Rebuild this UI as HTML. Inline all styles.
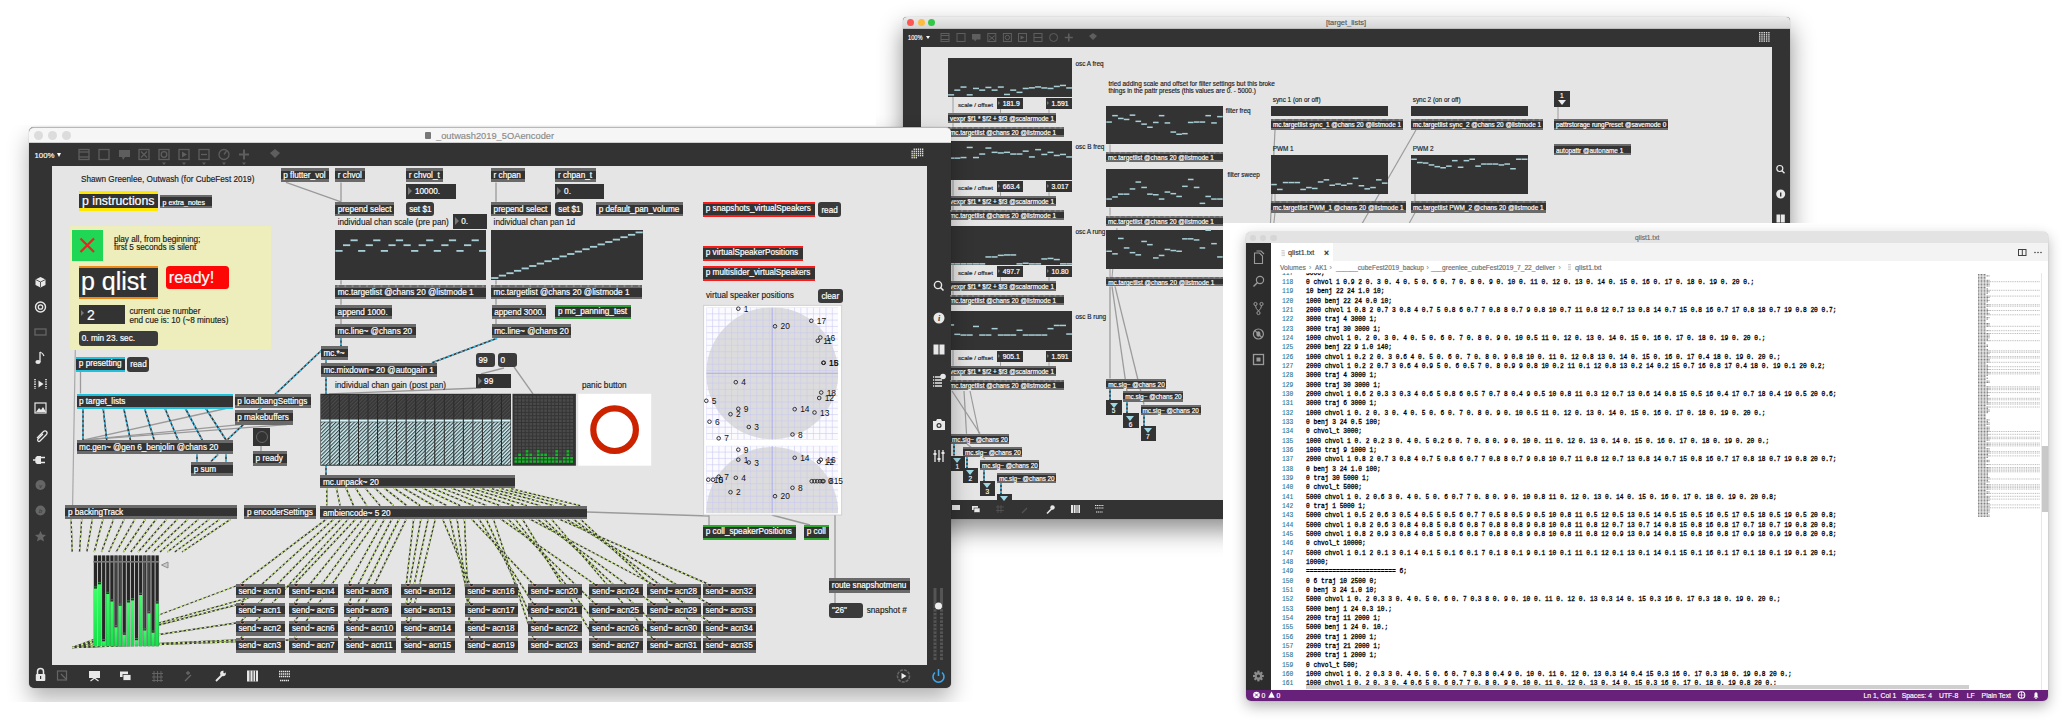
<!DOCTYPE html>
<html><head><meta charset="utf-8">
<style>
*{margin:0;padding:0;box-sizing:border-box}
html,body{width:2070px;height:720px;overflow:hidden;background:#fff;font-family:"Liberation Sans",sans-serif}
.a{position:absolute}
.ob{position:absolute;white-space:nowrap;overflow:hidden;-webkit-text-stroke:0.2px #fff}
.t{position:absolute;white-space:nowrap;-webkit-text-stroke:0.15px currentColor}
svg{position:absolute;left:0;top:0;overflow:visible}
.mono{font-family:"Liberation Mono",monospace}
</style></head><body>

<div class="a" style="left:903px;top:16.5px;width:887px;height:502px;border-radius:4px 4px 0 0;background:#333;box-shadow:0 11px 24px rgba(0,0,0,.45),0 0 1px rgba(0,0,0,.4)"></div>
<div class="a" style="left:903px;top:16.5px;width:887px;height:12px;border-radius:4px 4px 0 0;background:linear-gradient(#ebebeb,#d5d5d5);border-bottom:1px solid #bdbdbd"></div>
<div class="a" style="left:907.0px;top:19px;width:7px;height:7px;border-radius:50%;background:#fc5753"></div>
<div class="a" style="left:917.5px;top:19px;width:7px;height:7px;border-radius:50%;background:#fdbc40"></div>
<div class="a" style="left:928.2px;top:19px;width:7px;height:7px;border-radius:50%;background:#33c748"></div>
<div class="t" style="left:1326.0px;top:19.2px;font-size:6.8px;line-height:8.2px;color:#555;transform:scaleX(1.091);transform-origin:0 50%;">[target_lists]</div>
<div class="a" style="left:921.0px;top:46.5px;width:851.0px;height:453.5px;background:#e5e5e5;"></div>
<div class="t" style="left:907.5px;top:34.1px;font-size:6.8px;line-height:8.2px;color:#fff;transform:scaleX(0.834);transform-origin:0 50%;">100%</div>
<div class="a" style="left:925.5px;top:36px;border-top:3.5px solid #fff;border-left:2px solid transparent;border-right:2px solid transparent"></div>
<svg width="2070" height="720">
<g fill="none" stroke="#5e5e5e" stroke-width="1">
<rect x="941" y="33.5" width="8" height="8"/>
<rect x="957" y="33.5" width="8" height="8"/>
<rect x="987.8" y="33.5" width="8" height="8"/>
<rect x="1003.4" y="33.5" width="8" height="8"/>
<rect x="1018.5" y="33.5" width="8" height="8"/>
<rect x="1034" y="33.5" width="8" height="8"/>
<line x1="941" y1="35.5" x2="949" y2="35.5"/><line x1="941" y1="39.5" x2="949" y2="39.5"/>
<path d="M988.8 35.5l6 5M994.8 35.5l-6 5"/><circle cx="1007.4" cy="37.5" r="2.2"/><line x1="1034" y1="37.5" x2="1042" y2="37.5"/>
<circle cx="1053.6" cy="37.5" r="4"/><path d="M1068.8 33.5v8M1064.8 37.5h8" stroke-width="1.6"/>
</g>
<path d="M972 34h8.5v5.5h-4l-1.5 2-1-2h-2z" fill="#5e5e5e"/><path d="M1020.5 35.5l4 2-4 2z" fill="#5e5e5e"/><path d="M1089 36l4-3 4 3-4 4z" fill="#5e5e5e"/>
<rect x="1759.0" y="32.0" width="1.4" height="1.4" fill="#ddd"/>
<rect x="1759.0" y="34.1" width="1.4" height="1.4" fill="#ddd"/>
<rect x="1759.0" y="36.2" width="1.4" height="1.4" fill="#ddd"/>
<rect x="1759.0" y="38.3" width="1.4" height="1.4" fill="#ddd"/>
<rect x="1759.0" y="40.4" width="1.4" height="1.4" fill="#ddd"/>
<rect x="1761.3" y="32.0" width="1.4" height="1.4" fill="#ddd"/>
<rect x="1761.3" y="34.1" width="1.4" height="1.4" fill="#ddd"/>
<rect x="1761.3" y="36.2" width="1.4" height="1.4" fill="#ddd"/>
<rect x="1761.3" y="38.3" width="1.4" height="1.4" fill="#ddd"/>
<rect x="1761.3" y="40.4" width="1.4" height="1.4" fill="#ddd"/>
<rect x="1763.6" y="32.0" width="1.4" height="1.4" fill="#ddd"/>
<rect x="1763.6" y="34.1" width="1.4" height="1.4" fill="#ddd"/>
<rect x="1763.6" y="36.2" width="1.4" height="1.4" fill="#ddd"/>
<rect x="1763.6" y="38.3" width="1.4" height="1.4" fill="#ddd"/>
<rect x="1763.6" y="40.4" width="1.4" height="1.4" fill="#ddd"/>
<rect x="1765.9" y="32.0" width="1.4" height="1.4" fill="#ddd"/>
<rect x="1765.9" y="34.1" width="1.4" height="1.4" fill="#ddd"/>
<rect x="1765.9" y="36.2" width="1.4" height="1.4" fill="#ddd"/>
<rect x="1765.9" y="38.3" width="1.4" height="1.4" fill="#ddd"/>
<rect x="1765.9" y="40.4" width="1.4" height="1.4" fill="#ddd"/>
<rect x="1768.2" y="32.0" width="1.4" height="1.4" fill="#ddd"/>
<rect x="1768.2" y="34.1" width="1.4" height="1.4" fill="#ddd"/>
<rect x="1768.2" y="36.2" width="1.4" height="1.4" fill="#ddd"/>
<rect x="1768.2" y="38.3" width="1.4" height="1.4" fill="#ddd"/>
<rect x="1768.2" y="40.4" width="1.4" height="1.4" fill="#ddd"/>
<circle cx="1779.8" cy="168.5" r="3" fill="none" stroke="#e8e8e8" stroke-width="1.2"/><line x1="1782" y1="170.7" x2="1784.5" y2="173.2" stroke="#e8e8e8" stroke-width="1.4"/>
<circle cx="1780.7" cy="194" r="4.5" fill="#e8e8e8"/><rect x="1780" y="192.5" width="1.4" height="4" fill="#333"/>
<rect x="1776.5" y="214.5" width="3.8" height="8" fill="#e8e8e8"/><rect x="1781" y="214.5" width="3.8" height="8" fill="#e8e8e8"/>
<rect x="952" y="505" width="8" height="5" fill="#e8e8e8"/>
<rect x="972" y="506" width="6" height="4" fill="#e8e8e8"/><rect x="974" y="508" width="6" height="4.5" fill="#e8e8e8" stroke="#333" stroke-width=".6"/>
<path d="M998 505v8M1001 505v8M996 507h8M996 510.5h8" stroke="#555" stroke-width=".8"/>
<path d="M1022 513l5-5" stroke="#555" stroke-width="1.2"/>
<path d="M1047 513.5l5-5" stroke="#e8e8e8" stroke-width="1.6"/><circle cx="1052.5" cy="507.5" r="2.2" fill="#e8e8e8"/>
<rect x="1071" y="505" width="9" height="8" fill="#e8e8e8"/><path d="M1073.5 505v8M1076 505v8M1078 505v8" stroke="#333" stroke-width=".7"/>
<path d="M1095 505.5h9M1095 508h9M1096 512h7" stroke="#e8e8e8" stroke-width="1.2" stroke-dasharray="1.2 .6"/>
</svg>
<svg width="2070" height="720">
<path d="M953.0 96.6 L953.0 112.8" fill="none" stroke="#9c9c9c" stroke-width="1.0"/>
<path d="M953.0 123.2 L953.0 126.8" fill="none" stroke="#9c9c9c" stroke-width="1.0"/>
<path d="M1000.5 109.2 L1000.5 112.8" fill="none" stroke="#9c9c9c" stroke-width="1.0"/>
<path d="M1049.0 109.2 L1049.0 112.8" fill="none" stroke="#9c9c9c" stroke-width="1.0"/>
<path d="M953.0 179.6 L953.0 195.8" fill="none" stroke="#9c9c9c" stroke-width="1.0"/>
<path d="M953.0 206.2 L953.0 209.8" fill="none" stroke="#9c9c9c" stroke-width="1.0"/>
<path d="M1000.5 192.2 L1000.5 195.8" fill="none" stroke="#9c9c9c" stroke-width="1.0"/>
<path d="M1049.0 192.2 L1049.0 195.8" fill="none" stroke="#9c9c9c" stroke-width="1.0"/>
<path d="M953.0 264.6 L953.0 280.8" fill="none" stroke="#9c9c9c" stroke-width="1.0"/>
<path d="M953.0 291.2 L953.0 294.8" fill="none" stroke="#9c9c9c" stroke-width="1.0"/>
<path d="M1000.5 277.2 L1000.5 280.8" fill="none" stroke="#9c9c9c" stroke-width="1.0"/>
<path d="M1049.0 277.2 L1049.0 280.8" fill="none" stroke="#9c9c9c" stroke-width="1.0"/>
<path d="M953.0 349.6 L953.0 365.8" fill="none" stroke="#9c9c9c" stroke-width="1.0"/>
<path d="M953.0 376.2 L953.0 379.8" fill="none" stroke="#9c9c9c" stroke-width="1.0"/>
<path d="M1000.5 362.2 L1000.5 365.8" fill="none" stroke="#9c9c9c" stroke-width="1.0"/>
<path d="M1049.0 362.2 L1049.0 365.8" fill="none" stroke="#9c9c9c" stroke-width="1.0"/>
<path d="M1110.0 144.4 L1110.0 152.3" fill="none" stroke="#9c9c9c" stroke-width="1.0"/>
<path d="M1110.0 207.6 L1110.0 215.5" fill="none" stroke="#9c9c9c" stroke-width="1.0"/>
<path d="M1110.0 268.7 L1110.0 277.0" fill="none" stroke="#9c9c9c" stroke-width="1.0"/>
<path d="M1110.0 286.4 L1110.0 378.6" fill="none" stroke="#9c9c9c" stroke-width="1.3"/>
<path d="M1112.0 286.4 L1127.0 391.4" fill="none" stroke="#9c9c9c" stroke-width="1.3"/>
<path d="M1115.0 286.4 L1144.0 404.5" fill="none" stroke="#9c9c9c" stroke-width="1.3"/>
<path d="M1117.0 228.0 L1112.0 277.0" fill="none" stroke="#9c9c9c" stroke-width="1.0"/>
<path d="M1275.0 130.0 L1257.0 500.0" fill="none" stroke="#9c9c9c" stroke-width="1.2"/>
<path d="M1416.0 130.0 L1310.0 314.0" fill="none" stroke="#9c9c9c" stroke-width="1.2"/>
<path d="M1275.0 212.7 L1272.0 240.0" fill="none" stroke="#9c9c9c" stroke-width="1.1"/>
<path d="M1415.0 212.7 L1400.0 240.0" fill="none" stroke="#9c9c9c" stroke-width="1.1"/>
<path d="M1275.0 194.0 L1275.0 201.0" fill="none" stroke="#9c9c9c" stroke-width="1.0"/>
<path d="M1415.0 194.0 L1415.0 201.0" fill="none" stroke="#9c9c9c" stroke-width="1.0"/>
<path d="M1558.0 106.7 L1558.0 119.3" fill="none" stroke="#9c9c9c" stroke-width="1.0"/>
<path d="M952.0 391.0 L980.0 433.7" fill="none" stroke="#9c9c9c" stroke-width="1.2"/>
<path d="M964.0 391.0 L966.5 433.7" fill="none" stroke="#9c9c9c" stroke-width="1.2"/>
<path d="M970.0 391.0 L979.0 433.7" fill="none" stroke="#9c9c9c" stroke-width="1.2"/>
<path d="M967.0 444.0 L985.0 458.8" fill="none" stroke="#9c9c9c" stroke-width="1.1"/>
<path d="M1110 388.8V400.3" stroke="#2a2a2a" stroke-width="1.6"/><path d="M1110 388.8V400.3" stroke="#3cc0ee" stroke-width="1.6" stroke-dasharray="2 2"/>
<path d="M1127 401.6V413.1" stroke="#2a2a2a" stroke-width="1.6"/><path d="M1127 401.6V413.1" stroke="#3cc0ee" stroke-width="1.6" stroke-dasharray="2 2"/>
<path d="M1144 414.7V426.2" stroke="#2a2a2a" stroke-width="1.6"/><path d="M1144 414.7V426.2" stroke="#3cc0ee" stroke-width="1.6" stroke-dasharray="2 2"/>
<path d="M954 443.9V455.4" stroke="#2a2a2a" stroke-width="1.6"/><path d="M954 443.9V455.4" stroke="#3cc0ee" stroke-width="1.6" stroke-dasharray="2 2"/>
<path d="M967 457V468.5" stroke="#2a2a2a" stroke-width="1.6"/><path d="M967 457V468.5" stroke="#3cc0ee" stroke-width="1.6" stroke-dasharray="2 2"/>
<path d="M984 470.2V481.7" stroke="#2a2a2a" stroke-width="1.6"/><path d="M984 470.2V481.7" stroke="#3cc0ee" stroke-width="1.6" stroke-dasharray="2 2"/>
<path d="M1001 482.9V494.4" stroke="#2a2a2a" stroke-width="1.6"/><path d="M1001 482.9V494.4" stroke="#3cc0ee" stroke-width="1.6" stroke-dasharray="2 2"/>
</svg>
<div class="a" style="left:948.0px;top:57.8px;width:124.3px;height:38.8px;background:#333;"></div>
<svg width="2070" height="720">
<rect x="948.1" y="94.1" width="6.0" height="1.5" fill="#a9cfd6"/>
<rect x="954.3" y="89.4" width="6.0" height="1.5" fill="#a9cfd6"/>
<rect x="960.5" y="86.3" width="6.0" height="1.5" fill="#a9cfd6"/>
<rect x="966.7" y="94.1" width="6.0" height="1.5" fill="#a9cfd6"/>
<rect x="973.0" y="87.7" width="6.0" height="1.5" fill="#a9cfd6"/>
<rect x="979.2" y="89.4" width="6.0" height="1.5" fill="#a9cfd6"/>
<rect x="985.4" y="86.7" width="6.0" height="1.5" fill="#a9cfd6"/>
<rect x="991.6" y="89.4" width="6.0" height="1.5" fill="#a9cfd6"/>
<rect x="997.8" y="86.3" width="6.0" height="1.5" fill="#a9cfd6"/>
<rect x="1004.0" y="93.7" width="6.0" height="1.5" fill="#a9cfd6"/>
<rect x="1010.2" y="89.4" width="6.0" height="1.5" fill="#a9cfd6"/>
<rect x="1016.5" y="91.6" width="6.0" height="1.5" fill="#a9cfd6"/>
<rect x="1022.7" y="87.7" width="6.0" height="1.5" fill="#a9cfd6"/>
<rect x="1028.9" y="87.1" width="6.0" height="1.5" fill="#a9cfd6"/>
<rect x="1035.1" y="86.2" width="6.0" height="1.5" fill="#a9cfd6"/>
<rect x="1041.3" y="87.2" width="6.0" height="1.5" fill="#a9cfd6"/>
<rect x="1047.5" y="87.7" width="6.0" height="1.5" fill="#a9cfd6"/>
<rect x="1053.8" y="85.7" width="6.0" height="1.5" fill="#a9cfd6"/>
<rect x="1060.0" y="84.7" width="6.0" height="1.5" fill="#a9cfd6"/>
<rect x="1066.2" y="87.2" width="6.0" height="1.5" fill="#a9cfd6"/>
</svg>
<div class="t" style="left:1075.5px;top:60.1px;font-size:6.4px;line-height:7.7px;color:#1a1a1a;">osc A freq</div>
<div class="t" style="left:957.9px;top:100.8px;font-size:6.26px;line-height:7.5px;color:#1a1a1a;">scale / offset</div>
<div class="ob" style="left:997.2px;top:98.3px;width:26.0px;height:10.9px;background:#333;font-size:6.8px;line-height:10.9px;padding-left:5.6px;padding-top:1.1px;color:#fff"><i style="position:absolute;left:1.2px;top:3.0px;border-left:2.4px solid #777;border-top:2.4px solid transparent;border-bottom:2.4px solid transparent"></i>181.9</div>
<div class="ob" style="left:1046.0px;top:98.3px;width:26.0px;height:10.9px;background:#333;font-size:6.8px;line-height:10.9px;padding-left:5.6px;padding-top:1.1px;color:#fff"><i style="position:absolute;left:1.2px;top:3.0px;border-left:2.4px solid #777;border-top:2.4px solid transparent;border-bottom:2.4px solid transparent"></i>1.591</div>
<div class="ob" style="left:948.0px;top:112.8px;width:107.6px;height:10.4px;background:linear-gradient(to bottom,#6a6a6a 0,#6a6a6a 2.1px,#333 2.1px,#333 8.300000000000006px,#6a6a6a 8.300000000000006px,#6a6a6a 100%);font-size:6.4px;line-height:10.4px;padding-left:2px;padding-top:1.1px;color:#fff">vexpr $f1 * $f2 + $f3 @scalarmode 1</div>
<svg width="2070" height="720" style="position:absolute;left:948.0px;top:126.8px;width:115.7px;height:2.1px;z-index:2"><rect x="2.0" y="0" width="2.2" height="1.7" rx="1" fill="#8a8a8a"/><rect x="7.5" y="0" width="2.2" height="1.7" rx="1" fill="#8a8a8a"/><rect x="13.0" y="0" width="2.2" height="1.7" rx="1" fill="#8a8a8a"/><rect x="18.5" y="0" width="2.2" height="1.7" rx="1" fill="#8a8a8a"/><rect x="23.9" y="0" width="2.2" height="1.7" rx="1" fill="#8a8a8a"/><rect x="29.4" y="0" width="2.2" height="1.7" rx="1" fill="#8a8a8a"/><rect x="34.9" y="0" width="2.2" height="1.7" rx="1" fill="#8a8a8a"/><rect x="40.4" y="0" width="2.2" height="1.7" rx="1" fill="#8a8a8a"/><rect x="45.9" y="0" width="2.2" height="1.7" rx="1" fill="#8a8a8a"/><rect x="51.4" y="0" width="2.2" height="1.7" rx="1" fill="#8a8a8a"/><rect x="56.9" y="0" width="2.2" height="1.7" rx="1" fill="#8a8a8a"/><rect x="62.3" y="0" width="2.2" height="1.7" rx="1" fill="#8a8a8a"/><rect x="67.8" y="0" width="2.2" height="1.7" rx="1" fill="#8a8a8a"/><rect x="73.3" y="0" width="2.2" height="1.7" rx="1" fill="#8a8a8a"/><rect x="78.8" y="0" width="2.2" height="1.7" rx="1" fill="#8a8a8a"/><rect x="84.3" y="0" width="2.2" height="1.7" rx="1" fill="#8a8a8a"/><rect x="89.8" y="0" width="2.2" height="1.7" rx="1" fill="#8a8a8a"/><rect x="95.2" y="0" width="2.2" height="1.7" rx="1" fill="#8a8a8a"/><rect x="100.7" y="0" width="2.2" height="1.7" rx="1" fill="#8a8a8a"/><rect x="106.2" y="0" width="2.2" height="1.7" rx="1" fill="#8a8a8a"/><rect x="111.7" y="0" width="2.2" height="1.7" rx="1" fill="#8a8a8a"/></svg>
<div class="ob" style="left:948.0px;top:126.8px;width:115.7px;height:10.3px;background:linear-gradient(to bottom,#6a6a6a 0,#6a6a6a 2.1px,#333 2.1px,#333 8.199999999999998px,#6a6a6a 8.199999999999998px,#6a6a6a 100%);font-size:6.4px;line-height:10.3px;padding-left:2px;padding-top:1.1px;color:#fff">mc.targetlist @chans 20 @listmode 1</div>
<div class="a" style="left:948.0px;top:140.8px;width:124.3px;height:38.8px;background:#333;"></div>
<svg width="2070" height="720">
<rect x="948.1" y="157.4" width="6.0" height="1.5" fill="#a9cfd6"/>
<rect x="954.3" y="157.4" width="6.0" height="1.5" fill="#a9cfd6"/>
<rect x="960.5" y="156.8" width="6.0" height="1.5" fill="#a9cfd6"/>
<rect x="966.7" y="146.7" width="6.0" height="1.5" fill="#a9cfd6"/>
<rect x="973.0" y="156.8" width="6.0" height="1.5" fill="#a9cfd6"/>
<rect x="979.2" y="153.3" width="6.0" height="1.5" fill="#a9cfd6"/>
<rect x="985.4" y="147.3" width="6.0" height="1.5" fill="#a9cfd6"/>
<rect x="991.6" y="151.6" width="6.0" height="1.5" fill="#a9cfd6"/>
<rect x="997.8" y="152.2" width="6.0" height="1.5" fill="#a9cfd6"/>
<rect x="1004.0" y="151.6" width="6.0" height="1.5" fill="#a9cfd6"/>
<rect x="1010.2" y="153.3" width="6.0" height="1.5" fill="#a9cfd6"/>
<rect x="1016.5" y="153.3" width="6.0" height="1.5" fill="#a9cfd6"/>
<rect x="1022.7" y="150.4" width="6.0" height="1.5" fill="#a9cfd6"/>
<rect x="1028.9" y="156.2" width="6.0" height="1.5" fill="#a9cfd6"/>
<rect x="1035.1" y="148.9" width="6.0" height="1.5" fill="#a9cfd6"/>
<rect x="1041.3" y="153.7" width="6.0" height="1.5" fill="#a9cfd6"/>
<rect x="1047.5" y="151.6" width="6.0" height="1.5" fill="#a9cfd6"/>
<rect x="1053.8" y="154.7" width="6.0" height="1.5" fill="#a9cfd6"/>
<rect x="1060.0" y="153.7" width="6.0" height="1.5" fill="#a9cfd6"/>
<rect x="1066.2" y="156.2" width="6.0" height="1.5" fill="#a9cfd6"/>
</svg>
<div class="t" style="left:1075.5px;top:143.1px;font-size:6.4px;line-height:7.7px;color:#1a1a1a;">osc B freq</div>
<div class="t" style="left:957.9px;top:183.8px;font-size:6.26px;line-height:7.5px;color:#1a1a1a;">scale / offset</div>
<div class="ob" style="left:997.2px;top:181.3px;width:26.0px;height:10.9px;background:#333;font-size:6.8px;line-height:10.9px;padding-left:5.6px;padding-top:1.1px;color:#fff"><i style="position:absolute;left:1.2px;top:3.1px;border-left:2.4px solid #777;border-top:2.4px solid transparent;border-bottom:2.4px solid transparent"></i>663.4</div>
<div class="ob" style="left:1046.0px;top:181.3px;width:26.0px;height:10.9px;background:#333;font-size:6.8px;line-height:10.9px;padding-left:5.6px;padding-top:1.1px;color:#fff"><i style="position:absolute;left:1.2px;top:3.1px;border-left:2.4px solid #777;border-top:2.4px solid transparent;border-bottom:2.4px solid transparent"></i>3.017</div>
<div class="ob" style="left:948.0px;top:195.8px;width:107.6px;height:10.4px;background:linear-gradient(to bottom,#6a6a6a 0,#6a6a6a 2.1px,#333 2.1px,#333 8.300000000000006px,#6a6a6a 8.300000000000006px,#6a6a6a 100%);font-size:6.4px;line-height:10.4px;padding-left:2px;padding-top:1.1px;color:#fff">vexpr $f1 * $f2 + $f3 @scalarmode 1</div>
<svg width="2070" height="720" style="position:absolute;left:948.0px;top:209.8px;width:115.7px;height:2.1px;z-index:2"><rect x="2.0" y="0" width="2.2" height="1.7" rx="1" fill="#8a8a8a"/><rect x="7.5" y="0" width="2.2" height="1.7" rx="1" fill="#8a8a8a"/><rect x="13.0" y="0" width="2.2" height="1.7" rx="1" fill="#8a8a8a"/><rect x="18.5" y="0" width="2.2" height="1.7" rx="1" fill="#8a8a8a"/><rect x="23.9" y="0" width="2.2" height="1.7" rx="1" fill="#8a8a8a"/><rect x="29.4" y="0" width="2.2" height="1.7" rx="1" fill="#8a8a8a"/><rect x="34.9" y="0" width="2.2" height="1.7" rx="1" fill="#8a8a8a"/><rect x="40.4" y="0" width="2.2" height="1.7" rx="1" fill="#8a8a8a"/><rect x="45.9" y="0" width="2.2" height="1.7" rx="1" fill="#8a8a8a"/><rect x="51.4" y="0" width="2.2" height="1.7" rx="1" fill="#8a8a8a"/><rect x="56.9" y="0" width="2.2" height="1.7" rx="1" fill="#8a8a8a"/><rect x="62.3" y="0" width="2.2" height="1.7" rx="1" fill="#8a8a8a"/><rect x="67.8" y="0" width="2.2" height="1.7" rx="1" fill="#8a8a8a"/><rect x="73.3" y="0" width="2.2" height="1.7" rx="1" fill="#8a8a8a"/><rect x="78.8" y="0" width="2.2" height="1.7" rx="1" fill="#8a8a8a"/><rect x="84.3" y="0" width="2.2" height="1.7" rx="1" fill="#8a8a8a"/><rect x="89.8" y="0" width="2.2" height="1.7" rx="1" fill="#8a8a8a"/><rect x="95.2" y="0" width="2.2" height="1.7" rx="1" fill="#8a8a8a"/><rect x="100.7" y="0" width="2.2" height="1.7" rx="1" fill="#8a8a8a"/><rect x="106.2" y="0" width="2.2" height="1.7" rx="1" fill="#8a8a8a"/><rect x="111.7" y="0" width="2.2" height="1.7" rx="1" fill="#8a8a8a"/></svg>
<div class="ob" style="left:948.0px;top:209.8px;width:115.7px;height:10.3px;background:linear-gradient(to bottom,#6a6a6a 0,#6a6a6a 2.1px,#333 2.1px,#333 8.200000000000012px,#6a6a6a 8.200000000000012px,#6a6a6a 100%);font-size:6.4px;line-height:10.3px;padding-left:2px;padding-top:1.1px;color:#fff">mc.targetlist @chans 20 @listmode 1</div>
<div class="a" style="left:948.0px;top:225.8px;width:124.3px;height:38.8px;background:#333;"></div>
<svg width="2070" height="720">
<rect x="948.1" y="263.1" width="6.0" height="1.5" fill="#a9cfd6"/>
<rect x="954.3" y="263.1" width="6.0" height="1.5" fill="#a9cfd6"/>
<rect x="960.5" y="263.1" width="6.0" height="1.5" fill="#a9cfd6"/>
<rect x="966.7" y="263.1" width="6.0" height="1.5" fill="#a9cfd6"/>
<rect x="973.0" y="263.1" width="6.0" height="1.5" fill="#a9cfd6"/>
<rect x="979.2" y="263.1" width="6.0" height="1.5" fill="#a9cfd6"/>
<rect x="985.4" y="256.2" width="6.0" height="1.5" fill="#a9cfd6"/>
<rect x="991.6" y="256.2" width="6.0" height="1.5" fill="#a9cfd6"/>
<rect x="997.8" y="254.6" width="6.0" height="1.5" fill="#a9cfd6"/>
<rect x="1004.0" y="254.2" width="6.0" height="1.5" fill="#a9cfd6"/>
<rect x="1010.2" y="254.2" width="6.0" height="1.5" fill="#a9cfd6"/>
<rect x="1016.5" y="263.1" width="6.0" height="1.5" fill="#a9cfd6"/>
<rect x="1022.7" y="262.5" width="6.0" height="1.5" fill="#a9cfd6"/>
<rect x="1028.9" y="263.1" width="6.0" height="1.5" fill="#a9cfd6"/>
<rect x="1035.1" y="263.1" width="6.0" height="1.5" fill="#a9cfd6"/>
<rect x="1041.3" y="258.2" width="6.0" height="1.5" fill="#a9cfd6"/>
<rect x="1047.5" y="257.7" width="6.0" height="1.5" fill="#a9cfd6"/>
<rect x="1053.8" y="258.8" width="6.0" height="1.5" fill="#a9cfd6"/>
<rect x="1060.0" y="263.1" width="6.0" height="1.5" fill="#a9cfd6"/>
<rect x="1066.2" y="263.1" width="6.0" height="1.5" fill="#a9cfd6"/>
</svg>
<div class="t" style="left:1075.5px;top:228.1px;font-size:6.4px;line-height:7.7px;color:#1a1a1a;">osc A rung</div>
<div class="t" style="left:957.9px;top:268.8px;font-size:6.26px;line-height:7.5px;color:#1a1a1a;">scale / offset</div>
<div class="ob" style="left:997.2px;top:266.3px;width:26.0px;height:10.9px;background:#333;font-size:6.8px;line-height:10.9px;padding-left:5.6px;padding-top:1.1px;color:#fff"><i style="position:absolute;left:1.2px;top:3.0px;border-left:2.4px solid #777;border-top:2.4px solid transparent;border-bottom:2.4px solid transparent"></i>497.7</div>
<div class="ob" style="left:1046.0px;top:266.3px;width:26.0px;height:10.9px;background:#333;font-size:6.8px;line-height:10.9px;padding-left:5.6px;padding-top:1.1px;color:#fff"><i style="position:absolute;left:1.2px;top:3.0px;border-left:2.4px solid #777;border-top:2.4px solid transparent;border-bottom:2.4px solid transparent"></i>10.80</div>
<div class="ob" style="left:948.0px;top:280.8px;width:107.6px;height:10.4px;background:linear-gradient(to bottom,#6a6a6a 0,#6a6a6a 2.1px,#333 2.1px,#333 8.300000000000034px,#6a6a6a 8.300000000000034px,#6a6a6a 100%);font-size:6.4px;line-height:10.4px;padding-left:2px;padding-top:1.1px;color:#fff">vexpr $f1 * $f2 + $f3 @scalarmode 1</div>
<svg width="2070" height="720" style="position:absolute;left:948.0px;top:294.8px;width:115.7px;height:2.1px;z-index:2"><rect x="2.0" y="0" width="2.2" height="1.7" rx="1" fill="#8a8a8a"/><rect x="7.5" y="0" width="2.2" height="1.7" rx="1" fill="#8a8a8a"/><rect x="13.0" y="0" width="2.2" height="1.7" rx="1" fill="#8a8a8a"/><rect x="18.5" y="0" width="2.2" height="1.7" rx="1" fill="#8a8a8a"/><rect x="23.9" y="0" width="2.2" height="1.7" rx="1" fill="#8a8a8a"/><rect x="29.4" y="0" width="2.2" height="1.7" rx="1" fill="#8a8a8a"/><rect x="34.9" y="0" width="2.2" height="1.7" rx="1" fill="#8a8a8a"/><rect x="40.4" y="0" width="2.2" height="1.7" rx="1" fill="#8a8a8a"/><rect x="45.9" y="0" width="2.2" height="1.7" rx="1" fill="#8a8a8a"/><rect x="51.4" y="0" width="2.2" height="1.7" rx="1" fill="#8a8a8a"/><rect x="56.9" y="0" width="2.2" height="1.7" rx="1" fill="#8a8a8a"/><rect x="62.3" y="0" width="2.2" height="1.7" rx="1" fill="#8a8a8a"/><rect x="67.8" y="0" width="2.2" height="1.7" rx="1" fill="#8a8a8a"/><rect x="73.3" y="0" width="2.2" height="1.7" rx="1" fill="#8a8a8a"/><rect x="78.8" y="0" width="2.2" height="1.7" rx="1" fill="#8a8a8a"/><rect x="84.3" y="0" width="2.2" height="1.7" rx="1" fill="#8a8a8a"/><rect x="89.8" y="0" width="2.2" height="1.7" rx="1" fill="#8a8a8a"/><rect x="95.2" y="0" width="2.2" height="1.7" rx="1" fill="#8a8a8a"/><rect x="100.7" y="0" width="2.2" height="1.7" rx="1" fill="#8a8a8a"/><rect x="106.2" y="0" width="2.2" height="1.7" rx="1" fill="#8a8a8a"/><rect x="111.7" y="0" width="2.2" height="1.7" rx="1" fill="#8a8a8a"/></svg>
<div class="ob" style="left:948.0px;top:294.8px;width:115.7px;height:10.3px;background:linear-gradient(to bottom,#6a6a6a 0,#6a6a6a 2.1px,#333 2.1px,#333 8.200000000000012px,#6a6a6a 8.200000000000012px,#6a6a6a 100%);font-size:6.4px;line-height:10.3px;padding-left:2px;padding-top:1.1px;color:#fff">mc.targetlist @chans 20 @listmode 1</div>
<div class="a" style="left:948.0px;top:310.8px;width:124.3px;height:38.8px;background:#333;"></div>
<svg width="2070" height="720">
<rect x="948.1" y="324.2" width="6.0" height="1.5" fill="#a9cfd6"/>
<rect x="954.3" y="333.6" width="6.0" height="1.5" fill="#a9cfd6"/>
<rect x="960.5" y="334.3" width="6.0" height="1.5" fill="#a9cfd6"/>
<rect x="966.7" y="334.3" width="6.0" height="1.5" fill="#a9cfd6"/>
<rect x="973.0" y="325.7" width="6.0" height="1.5" fill="#a9cfd6"/>
<rect x="979.2" y="334.3" width="6.0" height="1.5" fill="#a9cfd6"/>
<rect x="985.4" y="334.3" width="6.0" height="1.5" fill="#a9cfd6"/>
<rect x="991.6" y="327.9" width="6.0" height="1.5" fill="#a9cfd6"/>
<rect x="997.8" y="334.3" width="6.0" height="1.5" fill="#a9cfd6"/>
<rect x="1004.0" y="334.3" width="6.0" height="1.5" fill="#a9cfd6"/>
<rect x="1010.2" y="334.3" width="6.0" height="1.5" fill="#a9cfd6"/>
<rect x="1016.5" y="329.5" width="6.0" height="1.5" fill="#a9cfd6"/>
<rect x="1022.7" y="334.3" width="6.0" height="1.5" fill="#a9cfd6"/>
<rect x="1028.9" y="334.3" width="6.0" height="1.5" fill="#a9cfd6"/>
<rect x="1035.1" y="334.3" width="6.0" height="1.5" fill="#a9cfd6"/>
<rect x="1041.3" y="334.3" width="6.0" height="1.5" fill="#a9cfd6"/>
<rect x="1047.5" y="327.9" width="6.0" height="1.5" fill="#a9cfd6"/>
<rect x="1053.8" y="324.7" width="6.0" height="1.5" fill="#a9cfd6"/>
<rect x="1060.0" y="324.7" width="6.0" height="1.5" fill="#a9cfd6"/>
<rect x="1066.2" y="333.3" width="6.0" height="1.5" fill="#a9cfd6"/>
</svg>
<div class="t" style="left:1075.5px;top:313.1px;font-size:6.4px;line-height:7.7px;color:#1a1a1a;">osc B rung</div>
<div class="t" style="left:957.9px;top:353.8px;font-size:6.26px;line-height:7.5px;color:#1a1a1a;">scale / offset</div>
<div class="ob" style="left:997.2px;top:351.3px;width:26.0px;height:10.9px;background:#333;font-size:6.8px;line-height:10.9px;padding-left:5.6px;padding-top:1.1px;color:#fff"><i style="position:absolute;left:1.2px;top:3.0px;border-left:2.4px solid #777;border-top:2.4px solid transparent;border-bottom:2.4px solid transparent"></i>905.1</div>
<div class="ob" style="left:1046.0px;top:351.3px;width:26.0px;height:10.9px;background:#333;font-size:6.8px;line-height:10.9px;padding-left:5.6px;padding-top:1.1px;color:#fff"><i style="position:absolute;left:1.2px;top:3.0px;border-left:2.4px solid #777;border-top:2.4px solid transparent;border-bottom:2.4px solid transparent"></i>1.591</div>
<div class="ob" style="left:948.0px;top:365.8px;width:107.6px;height:10.4px;background:linear-gradient(to bottom,#6a6a6a 0,#6a6a6a 2.1px,#333 2.1px,#333 8.300000000000034px,#6a6a6a 8.300000000000034px,#6a6a6a 100%);font-size:6.4px;line-height:10.4px;padding-left:2px;padding-top:1.1px;color:#fff">vexpr $f1 * $f2 + $f3 @scalarmode 1</div>
<svg width="2070" height="720" style="position:absolute;left:948.0px;top:379.8px;width:115.7px;height:2.1px;z-index:2"><rect x="2.0" y="0" width="2.2" height="1.7" rx="1" fill="#8a8a8a"/><rect x="7.5" y="0" width="2.2" height="1.7" rx="1" fill="#8a8a8a"/><rect x="13.0" y="0" width="2.2" height="1.7" rx="1" fill="#8a8a8a"/><rect x="18.5" y="0" width="2.2" height="1.7" rx="1" fill="#8a8a8a"/><rect x="23.9" y="0" width="2.2" height="1.7" rx="1" fill="#8a8a8a"/><rect x="29.4" y="0" width="2.2" height="1.7" rx="1" fill="#8a8a8a"/><rect x="34.9" y="0" width="2.2" height="1.7" rx="1" fill="#8a8a8a"/><rect x="40.4" y="0" width="2.2" height="1.7" rx="1" fill="#8a8a8a"/><rect x="45.9" y="0" width="2.2" height="1.7" rx="1" fill="#8a8a8a"/><rect x="51.4" y="0" width="2.2" height="1.7" rx="1" fill="#8a8a8a"/><rect x="56.9" y="0" width="2.2" height="1.7" rx="1" fill="#8a8a8a"/><rect x="62.3" y="0" width="2.2" height="1.7" rx="1" fill="#8a8a8a"/><rect x="67.8" y="0" width="2.2" height="1.7" rx="1" fill="#8a8a8a"/><rect x="73.3" y="0" width="2.2" height="1.7" rx="1" fill="#8a8a8a"/><rect x="78.8" y="0" width="2.2" height="1.7" rx="1" fill="#8a8a8a"/><rect x="84.3" y="0" width="2.2" height="1.7" rx="1" fill="#8a8a8a"/><rect x="89.8" y="0" width="2.2" height="1.7" rx="1" fill="#8a8a8a"/><rect x="95.2" y="0" width="2.2" height="1.7" rx="1" fill="#8a8a8a"/><rect x="100.7" y="0" width="2.2" height="1.7" rx="1" fill="#8a8a8a"/><rect x="106.2" y="0" width="2.2" height="1.7" rx="1" fill="#8a8a8a"/><rect x="111.7" y="0" width="2.2" height="1.7" rx="1" fill="#8a8a8a"/></svg>
<div class="ob" style="left:948.0px;top:379.8px;width:115.7px;height:10.3px;background:linear-gradient(to bottom,#6a6a6a 0,#6a6a6a 2.1px,#333 2.1px,#333 8.200000000000012px,#6a6a6a 8.200000000000012px,#6a6a6a 100%);font-size:6.4px;line-height:10.3px;padding-left:2px;padding-top:1.1px;color:#fff">mc.targetlist @chans 20 @listmode 1</div>
<div class="t" style="left:1108.4px;top:80.0px;font-size:6.38px;line-height:7.7px;color:#1a1a1a;">tried adding scale and offset for filter settings but this broke</div>
<div class="t" style="left:1108.4px;top:87.3px;font-size:6.38px;line-height:7.7px;color:#1a1a1a;">things in the pattr presets (this values are 0. - 5000.)</div>
<div class="a" style="left:1106.2px;top:105.9px;width:116.5px;height:38.5px;background:#333;"></div>
<svg width="2070" height="720">
<rect x="1106.3" y="121.3" width="5.6" height="1.5" fill="#a9cfd6"/>
<rect x="1112.2" y="114.9" width="5.6" height="1.5" fill="#a9cfd6"/>
<rect x="1118.0" y="117.7" width="5.6" height="1.5" fill="#a9cfd6"/>
<rect x="1123.8" y="118.7" width="5.6" height="1.5" fill="#a9cfd6"/>
<rect x="1129.7" y="114.4" width="5.6" height="1.5" fill="#a9cfd6"/>
<rect x="1135.5" y="120.6" width="5.6" height="1.5" fill="#a9cfd6"/>
<rect x="1141.3" y="123.4" width="5.6" height="1.5" fill="#a9cfd6"/>
<rect x="1147.1" y="126.5" width="5.6" height="1.5" fill="#a9cfd6"/>
<rect x="1153.0" y="121.7" width="5.6" height="1.5" fill="#a9cfd6"/>
<rect x="1158.8" y="114.9" width="5.6" height="1.5" fill="#a9cfd6"/>
<rect x="1164.6" y="122.2" width="5.6" height="1.5" fill="#a9cfd6"/>
<rect x="1170.5" y="131.3" width="5.6" height="1.5" fill="#a9cfd6"/>
<rect x="1176.3" y="133.5" width="5.6" height="1.5" fill="#a9cfd6"/>
<rect x="1182.1" y="132.9" width="5.6" height="1.5" fill="#a9cfd6"/>
<rect x="1187.9" y="121.7" width="5.6" height="1.5" fill="#a9cfd6"/>
<rect x="1193.8" y="121.3" width="5.6" height="1.5" fill="#a9cfd6"/>
<rect x="1199.6" y="121.3" width="5.6" height="1.5" fill="#a9cfd6"/>
<rect x="1205.4" y="114.9" width="5.6" height="1.5" fill="#a9cfd6"/>
<rect x="1211.2" y="122.2" width="5.6" height="1.5" fill="#a9cfd6"/>
<rect x="1217.1" y="115.9" width="5.6" height="1.5" fill="#a9cfd6"/>
</svg>
<div class="t" style="left:1225.7px;top:107.0px;font-size:6.4px;line-height:7.7px;color:#1a1a1a;">filter freq</div>
<svg width="2070" height="720" style="position:absolute;left:1105.9px;top:152.3px;width:117.0px;height:2.0px;z-index:2"><rect x="2.0" y="0" width="2.2" height="1.6" rx="1" fill="#8a8a8a"/><rect x="7.5" y="0" width="2.2" height="1.6" rx="1" fill="#8a8a8a"/><rect x="13.1" y="0" width="2.2" height="1.6" rx="1" fill="#8a8a8a"/><rect x="18.6" y="0" width="2.2" height="1.6" rx="1" fill="#8a8a8a"/><rect x="24.2" y="0" width="2.2" height="1.6" rx="1" fill="#8a8a8a"/><rect x="29.8" y="0" width="2.2" height="1.6" rx="1" fill="#8a8a8a"/><rect x="35.3" y="0" width="2.2" height="1.6" rx="1" fill="#8a8a8a"/><rect x="40.9" y="0" width="2.2" height="1.6" rx="1" fill="#8a8a8a"/><rect x="46.4" y="0" width="2.2" height="1.6" rx="1" fill="#8a8a8a"/><rect x="52.0" y="0" width="2.2" height="1.6" rx="1" fill="#8a8a8a"/><rect x="57.5" y="0" width="2.2" height="1.6" rx="1" fill="#8a8a8a"/><rect x="63.0" y="0" width="2.2" height="1.6" rx="1" fill="#8a8a8a"/><rect x="68.6" y="0" width="2.2" height="1.6" rx="1" fill="#8a8a8a"/><rect x="74.2" y="0" width="2.2" height="1.6" rx="1" fill="#8a8a8a"/><rect x="79.7" y="0" width="2.2" height="1.6" rx="1" fill="#8a8a8a"/><rect x="85.2" y="0" width="2.2" height="1.6" rx="1" fill="#8a8a8a"/><rect x="90.8" y="0" width="2.2" height="1.6" rx="1" fill="#8a8a8a"/><rect x="96.3" y="0" width="2.2" height="1.6" rx="1" fill="#8a8a8a"/><rect x="101.9" y="0" width="2.2" height="1.6" rx="1" fill="#8a8a8a"/><rect x="107.5" y="0" width="2.2" height="1.6" rx="1" fill="#8a8a8a"/><rect x="113.0" y="0" width="2.2" height="1.6" rx="1" fill="#8a8a8a"/></svg>
<div class="ob" style="left:1105.9px;top:152.3px;width:117.0px;height:10.2px;background:linear-gradient(to bottom,#6a6a6a 0,#6a6a6a 2.0px,#333 2.0px,#333 8.199999999999989px,#6a6a6a 8.199999999999989px,#6a6a6a 100%);font-size:6.4px;line-height:10.2px;padding-left:2px;padding-top:1.1px;color:#fff">mc.targetlist @chans 20 @listmode 1</div>
<div class="a" style="left:1106.2px;top:169.2px;width:116.5px;height:38.3px;background:#333;"></div>
<svg width="2070" height="720">
<rect x="1106.3" y="198.3" width="5.6" height="1.5" fill="#a9cfd6"/>
<rect x="1112.2" y="196.2" width="5.6" height="1.5" fill="#a9cfd6"/>
<rect x="1118.0" y="193.4" width="5.6" height="1.5" fill="#a9cfd6"/>
<rect x="1123.8" y="193.4" width="5.6" height="1.5" fill="#a9cfd6"/>
<rect x="1129.7" y="188.2" width="5.6" height="1.5" fill="#a9cfd6"/>
<rect x="1135.5" y="181.3" width="5.6" height="1.5" fill="#a9cfd6"/>
<rect x="1141.3" y="186.7" width="5.6" height="1.5" fill="#a9cfd6"/>
<rect x="1147.1" y="193.4" width="5.6" height="1.5" fill="#a9cfd6"/>
<rect x="1153.0" y="194.0" width="5.6" height="1.5" fill="#a9cfd6"/>
<rect x="1158.8" y="198.3" width="5.6" height="1.5" fill="#a9cfd6"/>
<rect x="1164.6" y="191.3" width="5.6" height="1.5" fill="#a9cfd6"/>
<rect x="1170.5" y="192.9" width="5.6" height="1.5" fill="#a9cfd6"/>
<rect x="1176.3" y="195.7" width="5.6" height="1.5" fill="#a9cfd6"/>
<rect x="1182.1" y="185.6" width="5.6" height="1.5" fill="#a9cfd6"/>
<rect x="1187.9" y="178.7" width="5.6" height="1.5" fill="#a9cfd6"/>
<rect x="1193.8" y="186.7" width="5.6" height="1.5" fill="#a9cfd6"/>
<rect x="1199.6" y="202.6" width="5.6" height="1.5" fill="#a9cfd6"/>
<rect x="1205.4" y="195.7" width="5.6" height="1.5" fill="#a9cfd6"/>
<rect x="1211.2" y="198.3" width="5.6" height="1.5" fill="#a9cfd6"/>
<rect x="1217.1" y="198.3" width="5.6" height="1.5" fill="#a9cfd6"/>
</svg>
<div class="t" style="left:1227.5px;top:171.4px;font-size:6.4px;line-height:7.7px;color:#1a1a1a;">filter sweep</div>
<svg width="2070" height="720" style="position:absolute;left:1105.9px;top:215.5px;width:117.0px;height:2.0px;z-index:2"><rect x="2.0" y="0" width="2.2" height="1.6" rx="1" fill="#8a8a8a"/><rect x="7.5" y="0" width="2.2" height="1.6" rx="1" fill="#8a8a8a"/><rect x="13.1" y="0" width="2.2" height="1.6" rx="1" fill="#8a8a8a"/><rect x="18.6" y="0" width="2.2" height="1.6" rx="1" fill="#8a8a8a"/><rect x="24.2" y="0" width="2.2" height="1.6" rx="1" fill="#8a8a8a"/><rect x="29.8" y="0" width="2.2" height="1.6" rx="1" fill="#8a8a8a"/><rect x="35.3" y="0" width="2.2" height="1.6" rx="1" fill="#8a8a8a"/><rect x="40.9" y="0" width="2.2" height="1.6" rx="1" fill="#8a8a8a"/><rect x="46.4" y="0" width="2.2" height="1.6" rx="1" fill="#8a8a8a"/><rect x="52.0" y="0" width="2.2" height="1.6" rx="1" fill="#8a8a8a"/><rect x="57.5" y="0" width="2.2" height="1.6" rx="1" fill="#8a8a8a"/><rect x="63.0" y="0" width="2.2" height="1.6" rx="1" fill="#8a8a8a"/><rect x="68.6" y="0" width="2.2" height="1.6" rx="1" fill="#8a8a8a"/><rect x="74.2" y="0" width="2.2" height="1.6" rx="1" fill="#8a8a8a"/><rect x="79.7" y="0" width="2.2" height="1.6" rx="1" fill="#8a8a8a"/><rect x="85.2" y="0" width="2.2" height="1.6" rx="1" fill="#8a8a8a"/><rect x="90.8" y="0" width="2.2" height="1.6" rx="1" fill="#8a8a8a"/><rect x="96.3" y="0" width="2.2" height="1.6" rx="1" fill="#8a8a8a"/><rect x="101.9" y="0" width="2.2" height="1.6" rx="1" fill="#8a8a8a"/><rect x="107.5" y="0" width="2.2" height="1.6" rx="1" fill="#8a8a8a"/><rect x="113.0" y="0" width="2.2" height="1.6" rx="1" fill="#8a8a8a"/></svg>
<div class="ob" style="left:1105.9px;top:215.5px;width:117.0px;height:10.1px;background:linear-gradient(to bottom,#6a6a6a 0,#6a6a6a 2.0px,#333 2.0px,#333 8.099999999999994px,#6a6a6a 8.099999999999994px,#6a6a6a 100%);font-size:6.4px;line-height:10.1px;padding-left:2px;padding-top:1.1px;color:#fff">mc.targetlist @chans 20 @listmode 1</div>
<div class="a" style="left:1106.2px;top:230.2px;width:116.5px;height:38.4px;background:#333;"></div>
<svg width="2070" height="720">
<rect x="1106.3" y="250.5" width="5.6" height="1.5" fill="#a9cfd6"/>
<rect x="1112.2" y="253.1" width="5.6" height="1.5" fill="#a9cfd6"/>
<rect x="1118.0" y="237.7" width="5.6" height="1.5" fill="#a9cfd6"/>
<rect x="1123.8" y="247.2" width="5.6" height="1.5" fill="#a9cfd6"/>
<rect x="1129.7" y="251.9" width="5.6" height="1.5" fill="#a9cfd6"/>
<rect x="1135.5" y="254.1" width="5.6" height="1.5" fill="#a9cfd6"/>
<rect x="1141.3" y="240.7" width="5.6" height="1.5" fill="#a9cfd6"/>
<rect x="1147.1" y="243.9" width="5.6" height="1.5" fill="#a9cfd6"/>
<rect x="1153.0" y="257.2" width="5.6" height="1.5" fill="#a9cfd6"/>
<rect x="1158.8" y="254.7" width="5.6" height="1.5" fill="#a9cfd6"/>
<rect x="1164.6" y="248.7" width="5.6" height="1.5" fill="#a9cfd6"/>
<rect x="1170.5" y="249.8" width="5.6" height="1.5" fill="#a9cfd6"/>
<rect x="1176.3" y="250.5" width="5.6" height="1.5" fill="#a9cfd6"/>
<rect x="1182.1" y="238.1" width="5.6" height="1.5" fill="#a9cfd6"/>
<rect x="1187.9" y="238.1" width="5.6" height="1.5" fill="#a9cfd6"/>
<rect x="1193.8" y="239.2" width="5.6" height="1.5" fill="#a9cfd6"/>
<rect x="1199.6" y="247.2" width="5.6" height="1.5" fill="#a9cfd6"/>
<rect x="1205.4" y="229.5" width="5.6" height="1.5" fill="#a9cfd6"/>
<rect x="1211.2" y="242.9" width="5.6" height="1.5" fill="#a9cfd6"/>
<rect x="1217.1" y="256.2" width="5.6" height="1.5" fill="#a9cfd6"/>
</svg>
<svg width="2070" height="720" style="position:absolute;left:1106.3px;top:277.0px;width:116.7px;height:1.9px;z-index:2"><rect x="2.0" y="0" width="2.2" height="1.5" rx="1" fill="#8a8a8a"/><rect x="7.5" y="0" width="2.2" height="1.5" rx="1" fill="#8a8a8a"/><rect x="13.1" y="0" width="2.2" height="1.5" rx="1" fill="#8a8a8a"/><rect x="18.6" y="0" width="2.2" height="1.5" rx="1" fill="#8a8a8a"/><rect x="24.1" y="0" width="2.2" height="1.5" rx="1" fill="#8a8a8a"/><rect x="29.7" y="0" width="2.2" height="1.5" rx="1" fill="#8a8a8a"/><rect x="35.2" y="0" width="2.2" height="1.5" rx="1" fill="#8a8a8a"/><rect x="40.7" y="0" width="2.2" height="1.5" rx="1" fill="#8a8a8a"/><rect x="46.3" y="0" width="2.2" height="1.5" rx="1" fill="#8a8a8a"/><rect x="51.8" y="0" width="2.2" height="1.5" rx="1" fill="#8a8a8a"/><rect x="57.4" y="0" width="2.2" height="1.5" rx="1" fill="#8a8a8a"/><rect x="62.9" y="0" width="2.2" height="1.5" rx="1" fill="#8a8a8a"/><rect x="68.4" y="0" width="2.2" height="1.5" rx="1" fill="#8a8a8a"/><rect x="74.0" y="0" width="2.2" height="1.5" rx="1" fill="#8a8a8a"/><rect x="79.5" y="0" width="2.2" height="1.5" rx="1" fill="#8a8a8a"/><rect x="85.0" y="0" width="2.2" height="1.5" rx="1" fill="#8a8a8a"/><rect x="90.6" y="0" width="2.2" height="1.5" rx="1" fill="#8a8a8a"/><rect x="96.1" y="0" width="2.2" height="1.5" rx="1" fill="#8a8a8a"/><rect x="101.6" y="0" width="2.2" height="1.5" rx="1" fill="#8a8a8a"/><rect x="107.2" y="0" width="2.2" height="1.5" rx="1" fill="#8a8a8a"/><rect x="112.7" y="0" width="2.2" height="1.5" rx="1" fill="#8a8a8a"/></svg>
<div class="ob" style="left:1106.3px;top:277.0px;width:116.7px;height:9.4px;background:linear-gradient(to bottom,#6a6a6a 0,#6a6a6a 1.9px,#333 1.9px,#333 7.499999999999977px,#6a6a6a 7.499999999999977px,#6a6a6a 100%);font-size:6.4px;line-height:9.4px;padding-left:2px;padding-top:1.1px;color:#fff">mc.targetlist @chans 20 @listmode 1</div>
<div class="ob" style="left:1106.3px;top:378.6px;width:60.0px;height:10.2px;background:linear-gradient(to bottom,#6a6a6a 0,#6a6a6a 2.0px,#333 2.0px,#333 8.199999999999989px,#6a6a6a 8.199999999999989px,#6a6a6a 100%);font-size:6.4px;line-height:10.2px;padding-left:2px;padding-top:1.1px;color:#fff">mc.sig~ @chans 20</div>
<div class="ob" style="left:1123.2px;top:391.4px;width:60.0px;height:10.2px;background:linear-gradient(to bottom,#6a6a6a 0,#6a6a6a 2.0px,#333 2.0px,#333 8.199999999999989px,#6a6a6a 8.199999999999989px,#6a6a6a 100%);font-size:6.4px;line-height:10.2px;padding-left:2px;padding-top:1.1px;color:#fff">mc.sig~ @chans 20</div>
<div class="ob" style="left:1140.5px;top:404.5px;width:60.0px;height:10.2px;background:linear-gradient(to bottom,#6a6a6a 0,#6a6a6a 2.0px,#333 2.0px,#333 8.199999999999989px,#6a6a6a 8.199999999999989px,#6a6a6a 100%);font-size:6.4px;line-height:10.2px;padding-left:2px;padding-top:1.1px;color:#fff">mc.sig~ @chans 20</div>
<div class="a" style="left:1106.3px;top:400.0px;width:15.4px;height:15.0px;background:#333;"></div>
<div class="a" style="left:1109.5px;top:402.5px;border-top:5px solid #9fd9e6;border-left:4.5px solid transparent;border-right:4.5px solid transparent"></div>
<div class="t" style="left:1111.8px;top:407.4px;font-size:6.5px;line-height:7.8px;color:#fff;">5</div>
<div class="a" style="left:1123.2px;top:413.1px;width:15.4px;height:15.0px;background:#333;"></div>
<div class="a" style="left:1126.4px;top:415.6px;border-top:5px solid #9fd9e6;border-left:4.5px solid transparent;border-right:4.5px solid transparent"></div>
<div class="t" style="left:1128.7px;top:420.5px;font-size:6.5px;line-height:7.8px;color:#fff;">6</div>
<div class="a" style="left:1140.5px;top:425.5px;width:15.4px;height:15.0px;background:#333;"></div>
<div class="a" style="left:1143.7px;top:428.0px;border-top:5px solid #9fd9e6;border-left:4.5px solid transparent;border-right:4.5px solid transparent"></div>
<div class="t" style="left:1146.0px;top:432.9px;font-size:6.5px;line-height:7.8px;color:#fff;">7</div>
<div class="ob" style="left:950.0px;top:433.7px;width:59.0px;height:10.2px;background:linear-gradient(to bottom,#6a6a6a 0,#6a6a6a 2.0px,#333 2.0px,#333 8.199999999999989px,#6a6a6a 8.199999999999989px,#6a6a6a 100%);font-size:6.32px;line-height:10.2px;padding-left:2px;padding-top:1.1px;color:#fff">mc.sig~ @chans 20</div>
<div class="ob" style="left:963.0px;top:446.8px;width:59.0px;height:10.2px;background:linear-gradient(to bottom,#6a6a6a 0,#6a6a6a 2.0px,#333 2.0px,#333 8.199999999999989px,#6a6a6a 8.199999999999989px,#6a6a6a 100%);font-size:6.32px;line-height:10.2px;padding-left:2px;padding-top:1.1px;color:#fff">mc.sig~ @chans 20</div>
<div class="ob" style="left:980.0px;top:460.0px;width:59.0px;height:10.2px;background:linear-gradient(to bottom,#6a6a6a 0,#6a6a6a 2.0px,#333 2.0px,#333 8.199999999999989px,#6a6a6a 8.199999999999989px,#6a6a6a 100%);font-size:6.32px;line-height:10.2px;padding-left:2px;padding-top:1.1px;color:#fff">mc.sig~ @chans 20</div>
<div class="ob" style="left:996.9px;top:472.7px;width:59.0px;height:10.2px;background:linear-gradient(to bottom,#6a6a6a 0,#6a6a6a 2.0px,#333 2.0px,#333 8.199999999999989px,#6a6a6a 8.199999999999989px,#6a6a6a 100%);font-size:6.32px;line-height:10.2px;padding-left:2px;padding-top:1.1px;color:#fff">mc.sig~ @chans 20</div>
<div class="a" style="left:950.0px;top:455.5px;width:15.4px;height:15.0px;background:#333;"></div>
<div class="a" style="left:953.2px;top:458.0px;border-top:5px solid #9fd9e6;border-left:4.5px solid transparent;border-right:4.5px solid transparent"></div>
<div class="t" style="left:955.5px;top:462.9px;font-size:6.5px;line-height:7.8px;color:#fff;">1</div>
<div class="a" style="left:963.0px;top:467.5px;width:15.4px;height:15.0px;background:#333;"></div>
<div class="a" style="left:966.2px;top:470.0px;border-top:5px solid #9fd9e6;border-left:4.5px solid transparent;border-right:4.5px solid transparent"></div>
<div class="t" style="left:968.5px;top:474.9px;font-size:6.5px;line-height:7.8px;color:#fff;">2</div>
<div class="a" style="left:980.0px;top:480.6px;width:15.4px;height:15.0px;background:#333;"></div>
<div class="a" style="left:983.2px;top:483.1px;border-top:5px solid #9fd9e6;border-left:4.5px solid transparent;border-right:4.5px solid transparent"></div>
<div class="t" style="left:985.5px;top:488.0px;font-size:6.5px;line-height:7.8px;color:#fff;">3</div>
<div class="a" style="left:996.9px;top:493.7px;width:15.4px;height:6.3px;background:#333;"></div>
<div class="a" style="left:1000.1px;top:496.2px;border-top:5px solid #9fd9e6;border-left:4.5px solid transparent;border-right:4.5px solid transparent"></div>
<div class="t" style="left:1272.7px;top:96.0px;font-size:6.4px;line-height:7.7px;color:#1a1a1a;">sync 1 (on or off)</div>
<div class="a" style="left:1271.0px;top:105.7px;width:116.7px;height:10.0px;background:#333;"></div>
<svg width="2070" height="720" style="position:absolute;left:1271.0px;top:119.3px;width:131.7px;height:2.1px;z-index:2"><rect x="2.0" y="0" width="2.2" height="1.7" rx="1" fill="#8a8a8a"/><rect x="8.3" y="0" width="2.2" height="1.7" rx="1" fill="#8a8a8a"/><rect x="14.6" y="0" width="2.2" height="1.7" rx="1" fill="#8a8a8a"/><rect x="20.9" y="0" width="2.2" height="1.7" rx="1" fill="#8a8a8a"/><rect x="27.1" y="0" width="2.2" height="1.7" rx="1" fill="#8a8a8a"/><rect x="33.4" y="0" width="2.2" height="1.7" rx="1" fill="#8a8a8a"/><rect x="39.7" y="0" width="2.2" height="1.7" rx="1" fill="#8a8a8a"/><rect x="46.0" y="0" width="2.2" height="1.7" rx="1" fill="#8a8a8a"/><rect x="52.3" y="0" width="2.2" height="1.7" rx="1" fill="#8a8a8a"/><rect x="58.6" y="0" width="2.2" height="1.7" rx="1" fill="#8a8a8a"/><rect x="64.9" y="0" width="2.2" height="1.7" rx="1" fill="#8a8a8a"/><rect x="71.1" y="0" width="2.2" height="1.7" rx="1" fill="#8a8a8a"/><rect x="77.4" y="0" width="2.2" height="1.7" rx="1" fill="#8a8a8a"/><rect x="83.7" y="0" width="2.2" height="1.7" rx="1" fill="#8a8a8a"/><rect x="90.0" y="0" width="2.2" height="1.7" rx="1" fill="#8a8a8a"/><rect x="96.3" y="0" width="2.2" height="1.7" rx="1" fill="#8a8a8a"/><rect x="102.6" y="0" width="2.2" height="1.7" rx="1" fill="#8a8a8a"/><rect x="108.8" y="0" width="2.2" height="1.7" rx="1" fill="#8a8a8a"/><rect x="115.1" y="0" width="2.2" height="1.7" rx="1" fill="#8a8a8a"/><rect x="121.4" y="0" width="2.2" height="1.7" rx="1" fill="#8a8a8a"/><rect x="127.7" y="0" width="2.2" height="1.7" rx="1" fill="#8a8a8a"/></svg>
<div class="ob" style="left:1271.0px;top:119.3px;width:131.7px;height:10.7px;background:linear-gradient(to bottom,#6a6a6a 0,#6a6a6a 2.1px,#333 2.1px,#333 8.600000000000003px,#6a6a6a 8.600000000000003px,#6a6a6a 100%);font-size:6.4px;line-height:10.7px;padding-left:2px;padding-top:1.1px;color:#fff">mc.targetlist sync_1 @chans 20 @listmode 1</div>
<div class="t" style="left:1412.7px;top:96.0px;font-size:6.4px;line-height:7.7px;color:#1a1a1a;">sync 2 (on or off)</div>
<div class="a" style="left:1411.0px;top:105.7px;width:116.7px;height:10.0px;background:#333;"></div>
<svg width="2070" height="720" style="position:absolute;left:1411.0px;top:119.3px;width:131.7px;height:2.1px;z-index:2"><rect x="2.0" y="0" width="2.2" height="1.7" rx="1" fill="#8a8a8a"/><rect x="8.3" y="0" width="2.2" height="1.7" rx="1" fill="#8a8a8a"/><rect x="14.6" y="0" width="2.2" height="1.7" rx="1" fill="#8a8a8a"/><rect x="20.9" y="0" width="2.2" height="1.7" rx="1" fill="#8a8a8a"/><rect x="27.1" y="0" width="2.2" height="1.7" rx="1" fill="#8a8a8a"/><rect x="33.4" y="0" width="2.2" height="1.7" rx="1" fill="#8a8a8a"/><rect x="39.7" y="0" width="2.2" height="1.7" rx="1" fill="#8a8a8a"/><rect x="46.0" y="0" width="2.2" height="1.7" rx="1" fill="#8a8a8a"/><rect x="52.3" y="0" width="2.2" height="1.7" rx="1" fill="#8a8a8a"/><rect x="58.6" y="0" width="2.2" height="1.7" rx="1" fill="#8a8a8a"/><rect x="64.9" y="0" width="2.2" height="1.7" rx="1" fill="#8a8a8a"/><rect x="71.1" y="0" width="2.2" height="1.7" rx="1" fill="#8a8a8a"/><rect x="77.4" y="0" width="2.2" height="1.7" rx="1" fill="#8a8a8a"/><rect x="83.7" y="0" width="2.2" height="1.7" rx="1" fill="#8a8a8a"/><rect x="90.0" y="0" width="2.2" height="1.7" rx="1" fill="#8a8a8a"/><rect x="96.3" y="0" width="2.2" height="1.7" rx="1" fill="#8a8a8a"/><rect x="102.6" y="0" width="2.2" height="1.7" rx="1" fill="#8a8a8a"/><rect x="108.8" y="0" width="2.2" height="1.7" rx="1" fill="#8a8a8a"/><rect x="115.1" y="0" width="2.2" height="1.7" rx="1" fill="#8a8a8a"/><rect x="121.4" y="0" width="2.2" height="1.7" rx="1" fill="#8a8a8a"/><rect x="127.7" y="0" width="2.2" height="1.7" rx="1" fill="#8a8a8a"/></svg>
<div class="ob" style="left:1411.0px;top:119.3px;width:131.7px;height:10.7px;background:linear-gradient(to bottom,#6a6a6a 0,#6a6a6a 2.1px,#333 2.1px,#333 8.600000000000003px,#6a6a6a 8.600000000000003px,#6a6a6a 100%);font-size:6.4px;line-height:10.7px;padding-left:2px;padding-top:1.1px;color:#fff">mc.targetlist sync_2 @chans 20 @listmode 1</div>
<div class="a" style="left:1554.0px;top:91.0px;width:16.0px;height:15.7px;background:#333;"></div>
<div class="a" style="left:1557.5px;top:100px;border-top:5px solid #eee;border-left:4.5px solid transparent;border-right:4.5px solid transparent"></div>
<div class="t" style="left:1560.0px;top:92.4px;font-size:6.5px;line-height:7.8px;color:#fff;">1</div>
<div class="ob" style="left:1554.0px;top:119.3px;width:114.3px;height:10.7px;background:linear-gradient(to bottom,#6a6a6a 0,#6a6a6a 2.1px,#333 2.1px,#333 8.600000000000003px,#6a6a6a 8.600000000000003px,#6a6a6a 100%);font-size:6.4px;line-height:10.7px;padding-left:2px;padding-top:1.1px;color:#fff">pattrstorage rungPreset @savemode 0</div>
<div class="ob" style="left:1554.0px;top:144.0px;width:77.0px;height:11.0px;background:linear-gradient(to bottom,#6a6a6a 0,#6a6a6a 2.2px,#333 2.2px,#333 8.8px,#6a6a6a 8.8px,#6a6a6a 100%);font-size:6.4px;line-height:11.0px;padding-left:2px;padding-top:1.1px;color:#fff">autopattr @autoname 1</div>
<div class="t" style="left:1272.7px;top:145.3px;font-size:6.4px;line-height:7.7px;color:#1a1a1a;">PWM 1</div>
<div class="a" style="left:1271.1px;top:155.2px;width:116.5px;height:38.4px;background:#333;"></div>
<svg width="2070" height="720">
<rect x="1271.2" y="183.8" width="5.6" height="1.5" fill="#a9cfd6"/>
<rect x="1277.0" y="188.7" width="5.6" height="1.5" fill="#a9cfd6"/>
<rect x="1282.8" y="181.8" width="5.6" height="1.5" fill="#a9cfd6"/>
<rect x="1288.7" y="181.8" width="5.6" height="1.5" fill="#a9cfd6"/>
<rect x="1294.5" y="181.8" width="5.6" height="1.5" fill="#a9cfd6"/>
<rect x="1300.3" y="188.7" width="5.6" height="1.5" fill="#a9cfd6"/>
<rect x="1306.1" y="186.8" width="5.6" height="1.5" fill="#a9cfd6"/>
<rect x="1312.0" y="187.7" width="5.6" height="1.5" fill="#a9cfd6"/>
<rect x="1317.8" y="181.2" width="5.6" height="1.5" fill="#a9cfd6"/>
<rect x="1323.6" y="179.1" width="5.6" height="1.5" fill="#a9cfd6"/>
<rect x="1329.4" y="184.5" width="5.6" height="1.5" fill="#a9cfd6"/>
<rect x="1335.3" y="183.3" width="5.6" height="1.5" fill="#a9cfd6"/>
<rect x="1341.1" y="184.5" width="5.6" height="1.5" fill="#a9cfd6"/>
<rect x="1346.9" y="182.9" width="5.6" height="1.5" fill="#a9cfd6"/>
<rect x="1352.7" y="177.6" width="5.6" height="1.5" fill="#a9cfd6"/>
<rect x="1358.6" y="185.0" width="5.6" height="1.5" fill="#a9cfd6"/>
<rect x="1364.4" y="188.1" width="5.6" height="1.5" fill="#a9cfd6"/>
<rect x="1370.2" y="186.8" width="5.6" height="1.5" fill="#a9cfd6"/>
<rect x="1376.0" y="179.1" width="5.6" height="1.5" fill="#a9cfd6"/>
<rect x="1381.9" y="182.4" width="5.6" height="1.5" fill="#a9cfd6"/>
</svg>
<svg width="2070" height="720" style="position:absolute;left:1271.0px;top:201.0px;width:134.7px;height:2.3px;z-index:2"><rect x="2.0" y="0" width="2.2" height="1.8" rx="1" fill="#8a8a8a"/><rect x="8.4" y="0" width="2.2" height="1.8" rx="1" fill="#8a8a8a"/><rect x="14.9" y="0" width="2.2" height="1.8" rx="1" fill="#8a8a8a"/><rect x="21.3" y="0" width="2.2" height="1.8" rx="1" fill="#8a8a8a"/><rect x="27.7" y="0" width="2.2" height="1.8" rx="1" fill="#8a8a8a"/><rect x="34.2" y="0" width="2.2" height="1.8" rx="1" fill="#8a8a8a"/><rect x="40.6" y="0" width="2.2" height="1.8" rx="1" fill="#8a8a8a"/><rect x="47.0" y="0" width="2.2" height="1.8" rx="1" fill="#8a8a8a"/><rect x="53.5" y="0" width="2.2" height="1.8" rx="1" fill="#8a8a8a"/><rect x="59.9" y="0" width="2.2" height="1.8" rx="1" fill="#8a8a8a"/><rect x="66.4" y="0" width="2.2" height="1.8" rx="1" fill="#8a8a8a"/><rect x="72.8" y="0" width="2.2" height="1.8" rx="1" fill="#8a8a8a"/><rect x="79.2" y="0" width="2.2" height="1.8" rx="1" fill="#8a8a8a"/><rect x="85.7" y="0" width="2.2" height="1.8" rx="1" fill="#8a8a8a"/><rect x="92.1" y="0" width="2.2" height="1.8" rx="1" fill="#8a8a8a"/><rect x="98.5" y="0" width="2.2" height="1.8" rx="1" fill="#8a8a8a"/><rect x="105.0" y="0" width="2.2" height="1.8" rx="1" fill="#8a8a8a"/><rect x="111.4" y="0" width="2.2" height="1.8" rx="1" fill="#8a8a8a"/><rect x="117.8" y="0" width="2.2" height="1.8" rx="1" fill="#8a8a8a"/><rect x="124.3" y="0" width="2.2" height="1.8" rx="1" fill="#8a8a8a"/><rect x="130.7" y="0" width="2.2" height="1.8" rx="1" fill="#8a8a8a"/></svg>
<div class="ob" style="left:1271.0px;top:201.0px;width:134.7px;height:11.7px;background:linear-gradient(to bottom,#6a6a6a 0,#6a6a6a 2.3px,#333 2.3px,#333 9.399999999999988px,#6a6a6a 9.399999999999988px,#6a6a6a 100%);font-size:6.4px;line-height:11.7px;padding-left:2px;padding-top:1.1px;color:#fff">mc.targetlist PWM_1 @chans 20 @listmode 1</div>
<div class="t" style="left:1412.7px;top:145.3px;font-size:6.4px;line-height:7.7px;color:#1a1a1a;">PWM 2</div>
<div class="a" style="left:1411.1px;top:155.2px;width:116.5px;height:38.4px;background:#333;"></div>
<svg width="2070" height="720">
<rect x="1411.2" y="158.5" width="5.6" height="1.5" fill="#a9cfd6"/>
<rect x="1417.0" y="161.8" width="5.6" height="1.5" fill="#a9cfd6"/>
<rect x="1422.8" y="162.3" width="5.6" height="1.5" fill="#a9cfd6"/>
<rect x="1428.7" y="164.2" width="5.6" height="1.5" fill="#a9cfd6"/>
<rect x="1434.5" y="165.9" width="5.6" height="1.5" fill="#a9cfd6"/>
<rect x="1440.3" y="167.0" width="5.6" height="1.5" fill="#a9cfd6"/>
<rect x="1446.1" y="165.4" width="5.6" height="1.5" fill="#a9cfd6"/>
<rect x="1452.0" y="159.9" width="5.6" height="1.5" fill="#a9cfd6"/>
<rect x="1457.8" y="166.5" width="5.6" height="1.5" fill="#a9cfd6"/>
<rect x="1463.6" y="159.9" width="5.6" height="1.5" fill="#a9cfd6"/>
<rect x="1469.4" y="158.5" width="5.6" height="1.5" fill="#a9cfd6"/>
<rect x="1475.3" y="165.4" width="5.6" height="1.5" fill="#a9cfd6"/>
<rect x="1481.1" y="163.3" width="5.6" height="1.5" fill="#a9cfd6"/>
<rect x="1486.9" y="163.3" width="5.6" height="1.5" fill="#a9cfd6"/>
<rect x="1492.7" y="163.3" width="5.6" height="1.5" fill="#a9cfd6"/>
<rect x="1498.6" y="164.2" width="5.6" height="1.5" fill="#a9cfd6"/>
<rect x="1504.4" y="163.3" width="5.6" height="1.5" fill="#a9cfd6"/>
<rect x="1510.2" y="168.0" width="5.6" height="1.5" fill="#a9cfd6"/>
<rect x="1516.0" y="158.5" width="5.6" height="1.5" fill="#a9cfd6"/>
<rect x="1521.9" y="158.5" width="5.6" height="1.5" fill="#a9cfd6"/>
</svg>
<svg width="2070" height="720" style="position:absolute;left:1411.0px;top:201.0px;width:135.0px;height:2.3px;z-index:2"><rect x="2.0" y="0" width="2.2" height="1.8" rx="1" fill="#8a8a8a"/><rect x="8.4" y="0" width="2.2" height="1.8" rx="1" fill="#8a8a8a"/><rect x="14.9" y="0" width="2.2" height="1.8" rx="1" fill="#8a8a8a"/><rect x="21.4" y="0" width="2.2" height="1.8" rx="1" fill="#8a8a8a"/><rect x="27.8" y="0" width="2.2" height="1.8" rx="1" fill="#8a8a8a"/><rect x="34.2" y="0" width="2.2" height="1.8" rx="1" fill="#8a8a8a"/><rect x="40.7" y="0" width="2.2" height="1.8" rx="1" fill="#8a8a8a"/><rect x="47.1" y="0" width="2.2" height="1.8" rx="1" fill="#8a8a8a"/><rect x="53.6" y="0" width="2.2" height="1.8" rx="1" fill="#8a8a8a"/><rect x="60.0" y="0" width="2.2" height="1.8" rx="1" fill="#8a8a8a"/><rect x="66.5" y="0" width="2.2" height="1.8" rx="1" fill="#8a8a8a"/><rect x="73.0" y="0" width="2.2" height="1.8" rx="1" fill="#8a8a8a"/><rect x="79.4" y="0" width="2.2" height="1.8" rx="1" fill="#8a8a8a"/><rect x="85.8" y="0" width="2.2" height="1.8" rx="1" fill="#8a8a8a"/><rect x="92.3" y="0" width="2.2" height="1.8" rx="1" fill="#8a8a8a"/><rect x="98.8" y="0" width="2.2" height="1.8" rx="1" fill="#8a8a8a"/><rect x="105.2" y="0" width="2.2" height="1.8" rx="1" fill="#8a8a8a"/><rect x="111.7" y="0" width="2.2" height="1.8" rx="1" fill="#8a8a8a"/><rect x="118.1" y="0" width="2.2" height="1.8" rx="1" fill="#8a8a8a"/><rect x="124.5" y="0" width="2.2" height="1.8" rx="1" fill="#8a8a8a"/><rect x="131.0" y="0" width="2.2" height="1.8" rx="1" fill="#8a8a8a"/></svg>
<div class="ob" style="left:1411.0px;top:201.0px;width:135.0px;height:11.7px;background:linear-gradient(to bottom,#6a6a6a 0,#6a6a6a 2.3px,#333 2.3px,#333 9.399999999999988px,#6a6a6a 9.399999999999988px,#6a6a6a 100%);font-size:6.4px;line-height:11.7px;padding-left:2px;padding-top:1.1px;color:#fff">mc.targetlist PWM_2 @chans 20 @listmode 1</div>
<div class="t" style="left:1272.7px;top:221.5px;font-size:6.4px;line-height:7.7px;color:#1a1a1a;">SWEEP 1</div>
<div class="t" style="left:1412.7px;top:221.5px;font-size:6.4px;line-height:7.7px;color:#1a1a1a;">SWEEP 2</div>
<div class="a" style="left:29px;top:127px;width:922px;height:561px;border-radius:5px;background:#333;box-shadow:0 11px 22px rgba(0,0,0,.30),0 0 1px rgba(0,0,0,.45)"></div>
<div class="a" style="left:29px;top:127px;width:922px;height:16px;border-radius:5px 5px 0 0;background:#f6f6f6;border-bottom:1px solid #cfcfcf;border-top:1px solid #b8b8b8"></div>
<div class="a" style="left:34.0px;top:130.5px;width:9px;height:9px;border-radius:50%;background:#dcdcdc"></div>
<div class="a" style="left:47.5px;top:130.5px;width:9px;height:9px;border-radius:50%;background:#dcdcdc"></div>
<div class="a" style="left:61.5px;top:130.5px;width:9px;height:9px;border-radius:50%;background:#dcdcdc"></div>
<div class="a" style="left:425.2px;top:131.5px;width:6.1px;height:7.5px;background:#777;border-radius:1px;"></div>
<div class="t" style="left:436.0px;top:130.5px;font-size:9.2px;line-height:11.0px;color:#8a8a8a;transform:scaleX(1.014);transform-origin:0 50%;">_outwash2019_5OAencoder</div>
<div class="a" style="left:52.0px;top:166.0px;width:875.0px;height:499.0px;background:#e5e5e5;"></div>
<div class="t" style="left:34.5px;top:150.6px;font-size:7.8px;line-height:9.4px;color:#fff;">100%</div>
<div class="a" style="left:57px;top:153px;border-top:4px solid #fff;border-left:2.5px solid transparent;border-right:2.5px solid transparent"></div>
<svg width="2070" height="720" style="z-index:1">
<g fill="none" stroke="#5e5e5e" stroke-width="1.3">
<rect x="79" y="149.5" width="10" height="10"/><line x1="79" y1="152" x2="89" y2="152"/><line x1="79" y1="157" x2="89" y2="157"/>
<rect x="99" y="149.5" width="10" height="10"/>
<rect x="139" y="149.5" width="10" height="10"/><line x1="141" y1="151.5" x2="147" y2="157.5"/><line x1="147" y1="151.5" x2="141" y2="157.5"/>
<rect x="159" y="149.5" width="10" height="10"/><circle cx="164" cy="154.5" r="2.8"/>
<rect x="179" y="149.5" width="10" height="10"/>
<rect x="199" y="149.5" width="10" height="10"/><line x1="201" y1="154.5" x2="207" y2="154.5"/>
<circle cx="224" cy="154.5" r="5"/><line x1="224" y1="154.5" x2="226.5" y2="151"/>
<line x1="244" y1="149.5" x2="244" y2="159.5" stroke-width="2"/><line x1="239" y1="154.5" x2="249" y2="154.5" stroke-width="2"/>
</g>
<path d="M119 150h11v7h-5l-2 3-1-3h-3z" fill="#5e5e5e"/>
<path d="M182 151.5l5 3-5 3z" fill="#5e5e5e"/>
<path d="M270 153l5-4 5 4-5 5z" fill="#5e5e5e"/>
<path d="M162 162.5h4l-2 2.5z" fill="#5e5e5e"/>
<path d="M182 162.5h4l-2 2.5z" fill="#5e5e5e"/>
<path d="M202 162.5h4l-2 2.5z" fill="#5e5e5e"/>
<path d="M222 162.5h4l-2 2.5z" fill="#5e5e5e"/>
<path d="M242 162.5h4l-2 2.5z" fill="#5e5e5e"/>
<rect x="911.5" y="150.6" width="1.3" height="1.5" fill="#ddd"/>
<rect x="911.5" y="152.7" width="1.3" height="1.5" fill="#ddd"/>
<rect x="911.5" y="154.8" width="1.3" height="1.5" fill="#ddd"/>
<rect x="911.5" y="156.9" width="1.3" height="1.5" fill="#ddd"/>
<rect x="913.6" y="148.5" width="1.3" height="1.5" fill="#ddd"/>
<rect x="913.6" y="150.6" width="1.3" height="1.5" fill="#ddd"/>
<rect x="913.6" y="152.7" width="1.3" height="1.5" fill="#ddd"/>
<rect x="913.6" y="154.8" width="1.3" height="1.5" fill="#ddd"/>
<rect x="913.6" y="156.9" width="1.3" height="1.5" fill="#ddd"/>
<rect x="915.7" y="148.5" width="1.3" height="1.5" fill="#ddd"/>
<rect x="915.7" y="150.6" width="1.3" height="1.5" fill="#ddd"/>
<rect x="915.7" y="152.7" width="1.3" height="1.5" fill="#ddd"/>
<rect x="915.7" y="154.8" width="1.3" height="1.5" fill="#ddd"/>
<rect x="915.7" y="156.9" width="1.3" height="1.5" fill="#ddd"/>
<rect x="917.8" y="148.5" width="1.3" height="1.5" fill="#ddd"/>
<rect x="917.8" y="150.6" width="1.3" height="1.5" fill="#ddd"/>
<rect x="917.8" y="152.7" width="1.3" height="1.5" fill="#ddd"/>
<rect x="917.8" y="154.8" width="1.3" height="1.5" fill="#ddd"/>
<rect x="919.9" y="148.5" width="1.3" height="1.5" fill="#ddd"/>
<rect x="919.9" y="150.6" width="1.3" height="1.5" fill="#ddd"/>
<rect x="919.9" y="152.7" width="1.3" height="1.5" fill="#ddd"/>
<rect x="919.9" y="154.8" width="1.3" height="1.5" fill="#ddd"/>
<rect x="922.0" y="148.5" width="1.3" height="1.5" fill="#ddd"/>
<rect x="922.0" y="150.6" width="1.3" height="1.5" fill="#ddd"/>
<rect x="922.0" y="152.7" width="1.3" height="1.5" fill="#ddd"/>
<rect x="922.0" y="154.8" width="1.3" height="1.5" fill="#ddd"/>
<rect x="913.6" y="154.8" width="1.3" height="1.5" fill="#e6c200"/>
<path d="M40.5 277l5 2.5v5.5l-5 2.5-5-2.5v-5.5z" fill="#e8e8e8"/><path d="M35.5 279.5l5 2.5 5-2.5M40.5 282v5" stroke="#333" stroke-width="0.8" fill="none"/>
<circle cx="40.5" cy="307" r="5" fill="none" stroke="#e8e8e8" stroke-width="1.4"/><circle cx="40.5" cy="307" r="2.2" fill="none" stroke="#e8e8e8" stroke-width="1.3"/>
<rect x="35" y="329" width="11" height="6" fill="none" stroke="#666" stroke-width="1.3"/>
<path d="M40 352v10" stroke="#e8e8e8" stroke-width="1.3"/><ellipse cx="38" cy="362" rx="2.6" ry="2" fill="#e8e8e8"/><path d="M40 352q3 1 4 4" stroke="#e8e8e8" stroke-width="1.2" fill="none"/>
<path d="M35 379v10M46 379v10" stroke="#e8e8e8" stroke-width="1.6" stroke-dasharray="1.3 1"/><path d="M38.5 380.5l5 3.5-5 3.5z" fill="#e8e8e8"/>
<rect x="35" y="403" width="11" height="10" fill="none" stroke="#e8e8e8" stroke-width="1.2"/><path d="M36 412l3-4 2 2 2-3 3 5z" fill="#e8e8e8"/>
<path d="M37 438l6-6q2-2 3.5-.5t-.5 3.5l-6 6q-1 1-2 0t0-2l5-5" stroke="#e8e8e8" stroke-width="1.2" fill="none"/>
<path d="M37 456h4v8h-4q-2-1-2-4t2-4z" fill="#e8e8e8"/><path d="M41 457.5h4M41 462.5h4M33 460h2" stroke="#e8e8e8" stroke-width="1.4"/>
<circle cx="40.5" cy="485" r="5" fill="#666"/><circle cx="40.5" cy="510.5" r="5" fill="#666"/>
<text x="40.5" y="487.8" font-size="7" font-style="italic" fill="#333" text-anchor="middle" font-family="Liberation Serif">v</text>
<text x="40.5" y="513.3" font-size="7" font-style="italic" fill="#333" text-anchor="middle" font-family="Liberation Serif">b</text>
<path d="M40.5 531l1.6 3.6 3.9.4-2.9 2.6.9 3.9-3.5-2-3.5 2 .9-3.9-2.9-2.6 3.9-.4z" fill="#666"/>
<circle cx="938" cy="285" r="3.6" fill="none" stroke="#e8e8e8" stroke-width="1.4"/><line x1="940.5" y1="287.5" x2="943.5" y2="290.5" stroke="#e8e8e8" stroke-width="1.6"/>
<circle cx="939" cy="318" r="5.5" fill="#e8e8e8"/><text x="939" y="321" font-size="8" font-weight="bold" font-style="italic" fill="#333" text-anchor="middle" font-family="Liberation Serif">i</text>
<rect x="933.5" y="344.5" width="5" height="10" fill="#e8e8e8"/><rect x="939.5" y="344.5" width="5" height="10" fill="#e8e8e8"/>
<path d="M933 377h8M933 380h9M933 383h9M933 386h9" stroke="#e8e8e8" stroke-width="1.4" stroke-dasharray="1.2 .8 9"/><circle cx="943" cy="376.5" r="2.8" fill="#e8e8e8"/>
<path d="M933 421h3l1-2h4l1 2h3v9h-12z" fill="#e8e8e8"/><circle cx="939" cy="425.5" r="2.5" fill="#333"/><circle cx="939" cy="425.5" r="1.3" fill="#e8e8e8"/>
<path d="M935 450v12M939 450v12M943 450v12" stroke="#e8e8e8" stroke-width="1.3"/><path d="M933.5 454h3M937.5 459h3M941.5 453h3" stroke="#e8e8e8" stroke-width="2"/>
<rect x="933.5" y="588" width="3" height="72" fill="#555"/><rect x="940" y="588" width="3" height="72" fill="#555"/>
<rect x="933.5" y="608.0" width="3" height="1.2" fill="#333"/><rect x="940" y="608.0" width="3" height="1.2" fill="#333"/>
<rect x="933.5" y="611.7" width="3" height="1.2" fill="#333"/><rect x="940" y="611.7" width="3" height="1.2" fill="#333"/>
<rect x="933.5" y="615.4" width="3" height="1.2" fill="#333"/><rect x="940" y="615.4" width="3" height="1.2" fill="#333"/>
<rect x="933.5" y="619.1" width="3" height="1.2" fill="#333"/><rect x="940" y="619.1" width="3" height="1.2" fill="#333"/>
<rect x="933.5" y="622.8" width="3" height="1.2" fill="#333"/><rect x="940" y="622.8" width="3" height="1.2" fill="#333"/>
<rect x="933.5" y="626.5" width="3" height="1.2" fill="#333"/><rect x="940" y="626.5" width="3" height="1.2" fill="#333"/>
<rect x="933.5" y="630.2" width="3" height="1.2" fill="#333"/><rect x="940" y="630.2" width="3" height="1.2" fill="#333"/>
<rect x="933.5" y="633.9" width="3" height="1.2" fill="#333"/><rect x="940" y="633.9" width="3" height="1.2" fill="#333"/>
<rect x="933.5" y="637.6" width="3" height="1.2" fill="#333"/><rect x="940" y="637.6" width="3" height="1.2" fill="#333"/>
<rect x="933.5" y="641.3" width="3" height="1.2" fill="#333"/><rect x="940" y="641.3" width="3" height="1.2" fill="#333"/>
<rect x="933.5" y="645.0" width="3" height="1.2" fill="#333"/><rect x="940" y="645.0" width="3" height="1.2" fill="#333"/>
<rect x="933.5" y="648.7" width="3" height="1.2" fill="#333"/><rect x="940" y="648.7" width="3" height="1.2" fill="#333"/>
<rect x="933.5" y="652.4" width="3" height="1.2" fill="#333"/><rect x="940" y="652.4" width="3" height="1.2" fill="#333"/>
<rect x="933.5" y="656.1" width="3" height="1.2" fill="#333"/><rect x="940" y="656.1" width="3" height="1.2" fill="#333"/>
<circle cx="938.5" cy="606" r="3.5" fill="#eee"/>
<path d="M37.5 674v-2.5a3 3 0 0 1 6 0v2.5" fill="none" stroke="#e8e8e8" stroke-width="1.5"/><rect x="35.8" y="674" width="9.5" height="7" rx="1" fill="#e8e8e8"/><rect x="40" y="676" width="1.2" height="3" fill="#333"/>
<rect x="57.5" y="671" width="9" height="9" fill="none" stroke="#666" stroke-width="1.2"/><path d="M61 674l5 5" stroke="#666" stroke-width="1.3"/>
<rect x="89" y="671" width="11" height="7" fill="#e8e8e8"/><path d="M90.5 681l4-3 4 3" stroke="#e8e8e8" stroke-width="1.2" fill="none"/>
<rect x="120" y="671.5" width="8" height="5.5" fill="#e8e8e8"/><rect x="123" y="674.5" width="8" height="6" fill="#e8e8e8" stroke="#333" stroke-width="0.8"/>
<path d="M154 671v11M157.5 671v11M161 671v11M152 673.5h11M152 677h11M152 680.5h11" stroke="#666" stroke-width="0.9"/>
<path d="M185 681l6-6M188 671v4M186 673h4" stroke="#666" stroke-width="1.3"/>
<path d="M216 681l6-6" stroke="#e8e8e8" stroke-width="1.8"/><circle cx="223" cy="673.5" r="2.8" fill="#e8e8e8"/><circle cx="224.5" cy="672" r="1.2" fill="#333"/>
<rect x="247" y="670.5" width="11" height="11" fill="#e8e8e8"/><path d="M250 670.5v11M253 670.5v11M255.5 670.5v11" stroke="#333" stroke-width="0.9"/>
<path d="M279 671.5h11M279 674h11M279 676.5h11M280 680.5h9" stroke="#e8e8e8" stroke-width="1.4" stroke-dasharray="1.4 .6"/>
<circle cx="903.5" cy="676" r="6" fill="none" stroke="#666" stroke-width="1.6" stroke-dasharray="3 1"/><path d="M901.5 673v6l5-3z" fill="#eee"/>
<path d="M935 672.5a5.5 5.5 0 1 0 7 0" fill="none" stroke="#3ea6ea" stroke-width="1.6"/><line x1="938.5" y1="669" x2="938.5" y2="676" stroke="#3ea6ea" stroke-width="1.6"/>
</svg>
<div class="a" style="left:0.0px;top:702.0px;width:1223.3px;height:18.0px;background:#fff;"></div>
<div class="a" style="left:0.0px;top:0.0px;width:876.0px;height:125.0px;background:#fff;"></div>
<svg width="2070" height="720" style="z-index:0">
<path d="M286.0 182.4 L341.0 201.8" fill="none" stroke="#9a9a9a" stroke-width="1.3"/>
<path d="M341.0 182.4 L341.0 201.8" fill="none" stroke="#9a9a9a" stroke-width="1.3"/>
<path d="M496.0 182.4 L496.0 201.8" fill="none" stroke="#9a9a9a" stroke-width="1.3"/>
<path d="M75.3 350.0 L72.6 505.5" fill="none" stroke="#a8a8a8" stroke-width="1.2"/>
<path d="M80.5 371.7 L80.5 393.5" fill="none" stroke="#9a9a9a" stroke-width="1.3"/>
<path d="M226.0 408.5 L83.0 440.2" fill="none" stroke="#9a9a9a" stroke-width="1.3"/>
<path d="M240.0 424.6 L83.0 440.2" fill="none" stroke="#9a9a9a" stroke-width="1.3"/>
<path d="M287.0 424.6 L83.0 440.2" fill="none" stroke="#9a9a9a" stroke-width="1.3"/>
<path d="M261.0 445.8 L261.0 451.2" fill="none" stroke="#9a9a9a" stroke-width="1.3"/>
<path d="M504.0 368.0 L481.0 373.8" fill="none" stroke="#9a9a9a" stroke-width="1.3"/>
<path d="M481.0 388.0 L329.0 393.8" fill="none" stroke="#9a9a9a" stroke-width="1.3"/>
<path d="M514.0 367.0 L533.0 393.8" fill="none" stroke="#9a9a9a" stroke-width="1.3"/>
<path d="M771.7 515.0 L810.0 525.0" fill="none" stroke="#9a9a9a" stroke-width="1.3"/>
<path d="M709.0 515.0 L709.0 525.0" fill="none" stroke="#9a9a9a" stroke-width="1.3"/>
<path d="M587.0 512.0 L709.0 516.0" fill="none" stroke="#9a9a9a" stroke-width="1.3"/>
<path d="M835.0 515.0 L835.0 578.3" fill="none" stroke="#9a9a9a" stroke-width="1.3"/>
<path d="M835.0 593.0 L835.0 603.2" fill="none" stroke="#9a9a9a" stroke-width="1.3"/>
<path d="M341.0 280.2 L341.0 284.5" fill="none" stroke="#9a9a9a" stroke-width="1.3"/>
<path d="M341.0 299.0 L341.0 304.7" fill="none" stroke="#9a9a9a" stroke-width="1.3"/>
<path d="M341.0 318.7 L341.0 324.2" fill="none" stroke="#9a9a9a" stroke-width="1.3"/>
<path d="M496.0 280.2 L496.0 284.5" fill="none" stroke="#9a9a9a" stroke-width="1.3"/>
<path d="M496.0 299.0 L496.0 304.7" fill="none" stroke="#9a9a9a" stroke-width="1.3"/>
<path d="M496.0 318.7 L496.0 324.2" fill="none" stroke="#9a9a9a" stroke-width="1.3"/>
<path d="M341.0 338.2 L341.0 346.0" fill="none" stroke="#363636" stroke-width="1.6"/><path d="M341.0 338.2 L341.0 346.0" fill="none" stroke="#3cc0ee" stroke-width="1.6" stroke-dasharray="2.3 2.3"/>
<path d="M326.0 359.8 L326.0 362.7" fill="none" stroke="#363636" stroke-width="1.6"/><path d="M326.0 359.8 L326.0 362.7" fill="none" stroke="#3cc0ee" stroke-width="1.6" stroke-dasharray="2.3 2.3"/>
<path d="M497.0 338.2 L432.0 362.7" fill="none" stroke="#363636" stroke-width="1.6"/><path d="M497.0 338.2 L432.0 362.7" fill="none" stroke="#3cc0ee" stroke-width="1.6" stroke-dasharray="2.3 2.3"/>
<path d="M226.0 441.0 L324.0 348.0" fill="none" stroke="#363636" stroke-width="1.6"/><path d="M226.0 441.0 L324.0 348.0" fill="none" stroke="#3cc0ee" stroke-width="1.6" stroke-dasharray="2.3 2.3"/>
<path d="M326.0 376.7 L326.0 393.8" fill="none" stroke="#363636" stroke-width="1.6"/><path d="M326.0 376.7 L326.0 393.8" fill="none" stroke="#3cc0ee" stroke-width="1.6" stroke-dasharray="2.3 2.3"/>
<path d="M326.0 465.7 L326.0 474.9" fill="none" stroke="#363636" stroke-width="1.6"/><path d="M326.0 465.7 L326.0 474.9" fill="none" stroke="#3cc0ee" stroke-width="1.6" stroke-dasharray="2.3 2.3"/>
<path d="M83.0 408.5 L83.0 440.2" fill="none" stroke="#363636" stroke-width="1.6"/><path d="M83.0 408.5 L83.0 440.2" fill="none" stroke="#3cc0ee" stroke-width="1.6" stroke-dasharray="2.3 2.3"/>
<path d="M103.2 408.5 L106.7 440.2" fill="none" stroke="#363636" stroke-width="1.6"/><path d="M103.2 408.5 L106.7 440.2" fill="none" stroke="#3cc0ee" stroke-width="1.6" stroke-dasharray="2.3 2.3"/>
<path d="M123.8 408.5 L130.4 440.2" fill="none" stroke="#363636" stroke-width="1.6"/><path d="M123.8 408.5 L130.4 440.2" fill="none" stroke="#3cc0ee" stroke-width="1.6" stroke-dasharray="2.3 2.3"/>
<path d="M144.6 408.5 L154.3 440.2" fill="none" stroke="#363636" stroke-width="1.6"/><path d="M144.6 408.5 L154.3 440.2" fill="none" stroke="#3cc0ee" stroke-width="1.6" stroke-dasharray="2.3 2.3"/>
<path d="M165.0 408.5 L178.2 440.2" fill="none" stroke="#363636" stroke-width="1.6"/><path d="M165.0 408.5 L178.2 440.2" fill="none" stroke="#3cc0ee" stroke-width="1.6" stroke-dasharray="2.3 2.3"/>
<path d="M185.4 408.5 L202.3 440.2" fill="none" stroke="#363636" stroke-width="1.6"/><path d="M185.4 408.5 L202.3 440.2" fill="none" stroke="#3cc0ee" stroke-width="1.6" stroke-dasharray="2.3 2.3"/>
<path d="M205.8 408.5 L226.2 440.2" fill="none" stroke="#363636" stroke-width="1.6"/><path d="M205.8 408.5 L226.2 440.2" fill="none" stroke="#3cc0ee" stroke-width="1.6" stroke-dasharray="2.3 2.3"/>
<path d="M197.0 454.5 L197.0 461.5" fill="none" stroke="#363636" stroke-width="1.6"/><path d="M197.0 454.5 L197.0 461.5" fill="none" stroke="#3cc0ee" stroke-width="1.6" stroke-dasharray="2.3 2.3"/>
<path d="M226.0 454.5 L226.0 461.5" fill="none" stroke="#363636" stroke-width="1.6"/><path d="M226.0 454.5 L226.0 461.5" fill="none" stroke="#3cc0ee" stroke-width="1.6" stroke-dasharray="2.3 2.3"/>
<path d="M218.0 454.5 L211.0 461.5" fill="none" stroke="#363636" stroke-width="1.6"/><path d="M218.0 454.5 L211.0 461.5" fill="none" stroke="#3cc0ee" stroke-width="1.6" stroke-dasharray="2.3 2.3"/>
<path d="M326.8 488.1 L326.8 505.6" fill="none" stroke="#363636" stroke-width="1.4"/><path d="M326.8 488.1 L326.8 505.6" fill="none" stroke="#d2f28e" stroke-width="1.4" stroke-dasharray="2.3 2.3"/>
<path d="M336.4 488.1 L340.1 505.6" fill="none" stroke="#363636" stroke-width="1.4"/><path d="M336.4 488.1 L340.1 505.6" fill="none" stroke="#d2f28e" stroke-width="1.4" stroke-dasharray="2.3 2.3"/>
<path d="M346.0 488.1 L353.5 505.6" fill="none" stroke="#363636" stroke-width="1.4"/><path d="M346.0 488.1 L353.5 505.6" fill="none" stroke="#d2f28e" stroke-width="1.4" stroke-dasharray="2.3 2.3"/>
<path d="M355.6 488.1 L366.8 505.6" fill="none" stroke="#363636" stroke-width="1.4"/><path d="M355.6 488.1 L366.8 505.6" fill="none" stroke="#d2f28e" stroke-width="1.4" stroke-dasharray="2.3 2.3"/>
<path d="M365.2 488.1 L380.1 505.6" fill="none" stroke="#363636" stroke-width="1.4"/><path d="M365.2 488.1 L380.1 505.6" fill="none" stroke="#d2f28e" stroke-width="1.4" stroke-dasharray="2.3 2.3"/>
<path d="M374.7 488.1 L393.5 505.6" fill="none" stroke="#363636" stroke-width="1.4"/><path d="M374.7 488.1 L393.5 505.6" fill="none" stroke="#d2f28e" stroke-width="1.4" stroke-dasharray="2.3 2.3"/>
<path d="M384.3 488.1 L406.8 505.6" fill="none" stroke="#363636" stroke-width="1.4"/><path d="M384.3 488.1 L406.8 505.6" fill="none" stroke="#d2f28e" stroke-width="1.4" stroke-dasharray="2.3 2.3"/>
<path d="M393.9 488.1 L420.2 505.6" fill="none" stroke="#363636" stroke-width="1.4"/><path d="M393.9 488.1 L420.2 505.6" fill="none" stroke="#d2f28e" stroke-width="1.4" stroke-dasharray="2.3 2.3"/>
<path d="M403.5 488.1 L433.5 505.6" fill="none" stroke="#363636" stroke-width="1.4"/><path d="M403.5 488.1 L433.5 505.6" fill="none" stroke="#d2f28e" stroke-width="1.4" stroke-dasharray="2.3 2.3"/>
<path d="M413.1 488.1 L446.8 505.6" fill="none" stroke="#363636" stroke-width="1.4"/><path d="M413.1 488.1 L446.8 505.6" fill="none" stroke="#d2f28e" stroke-width="1.4" stroke-dasharray="2.3 2.3"/>
<path d="M422.7 488.1 L460.2 505.6" fill="none" stroke="#363636" stroke-width="1.4"/><path d="M422.7 488.1 L460.2 505.6" fill="none" stroke="#d2f28e" stroke-width="1.4" stroke-dasharray="2.3 2.3"/>
<path d="M432.3 488.1 L473.5 505.6" fill="none" stroke="#363636" stroke-width="1.4"/><path d="M432.3 488.1 L473.5 505.6" fill="none" stroke="#d2f28e" stroke-width="1.4" stroke-dasharray="2.3 2.3"/>
<path d="M441.9 488.1 L486.8 505.6" fill="none" stroke="#363636" stroke-width="1.4"/><path d="M441.9 488.1 L486.8 505.6" fill="none" stroke="#d2f28e" stroke-width="1.4" stroke-dasharray="2.3 2.3"/>
<path d="M451.5 488.1 L500.2 505.6" fill="none" stroke="#363636" stroke-width="1.4"/><path d="M451.5 488.1 L500.2 505.6" fill="none" stroke="#d2f28e" stroke-width="1.4" stroke-dasharray="2.3 2.3"/>
<path d="M461.1 488.1 L513.5 505.6" fill="none" stroke="#363636" stroke-width="1.4"/><path d="M461.1 488.1 L513.5 505.6" fill="none" stroke="#d2f28e" stroke-width="1.4" stroke-dasharray="2.3 2.3"/>
<path d="M470.6 488.1 L526.9 505.6" fill="none" stroke="#363636" stroke-width="1.4"/><path d="M470.6 488.1 L526.9 505.6" fill="none" stroke="#d2f28e" stroke-width="1.4" stroke-dasharray="2.3 2.3"/>
<path d="M480.2 488.1 L540.2 505.6" fill="none" stroke="#363636" stroke-width="1.4"/><path d="M480.2 488.1 L540.2 505.6" fill="none" stroke="#d2f28e" stroke-width="1.4" stroke-dasharray="2.3 2.3"/>
<path d="M489.8 488.1 L553.5 505.6" fill="none" stroke="#363636" stroke-width="1.4"/><path d="M489.8 488.1 L553.5 505.6" fill="none" stroke="#d2f28e" stroke-width="1.4" stroke-dasharray="2.3 2.3"/>
<path d="M499.4 488.1 L566.9 505.6" fill="none" stroke="#363636" stroke-width="1.4"/><path d="M499.4 488.1 L566.9 505.6" fill="none" stroke="#d2f28e" stroke-width="1.4" stroke-dasharray="2.3 2.3"/>
<path d="M509.0 488.1 L580.2 505.6" fill="none" stroke="#363636" stroke-width="1.4"/><path d="M509.0 488.1 L580.2 505.6" fill="none" stroke="#d2f28e" stroke-width="1.4" stroke-dasharray="2.3 2.3"/>
<path d="M71.1 519.3 L72.2 552.0" fill="none" stroke="#363636" stroke-width="1.4"/><path d="M71.1 519.3 L72.2 552.0" fill="none" stroke="#d2f28e" stroke-width="1.4" stroke-dasharray="2.3 2.3"/>
<path d="M81.7 519.3 L79.5 552.0" fill="none" stroke="#363636" stroke-width="1.4"/><path d="M81.7 519.3 L79.5 552.0" fill="none" stroke="#d2f28e" stroke-width="1.4" stroke-dasharray="2.3 2.3"/>
<path d="M92.3 519.3 L86.8 552.0" fill="none" stroke="#363636" stroke-width="1.4"/><path d="M92.3 519.3 L86.8 552.0" fill="none" stroke="#d2f28e" stroke-width="1.4" stroke-dasharray="2.3 2.3"/>
<path d="M103.0 519.3 L94.2 552.0" fill="none" stroke="#363636" stroke-width="1.4"/><path d="M103.0 519.3 L94.2 552.0" fill="none" stroke="#d2f28e" stroke-width="1.4" stroke-dasharray="2.3 2.3"/>
<path d="M113.6 519.3 L101.5 552.0" fill="none" stroke="#363636" stroke-width="1.4"/><path d="M113.6 519.3 L101.5 552.0" fill="none" stroke="#d2f28e" stroke-width="1.4" stroke-dasharray="2.3 2.3"/>
<path d="M124.2 519.3 L108.8 552.0" fill="none" stroke="#363636" stroke-width="1.4"/><path d="M124.2 519.3 L108.8 552.0" fill="none" stroke="#d2f28e" stroke-width="1.4" stroke-dasharray="2.3 2.3"/>
<path d="M134.8 519.3 L116.1 552.0" fill="none" stroke="#363636" stroke-width="1.4"/><path d="M134.8 519.3 L116.1 552.0" fill="none" stroke="#d2f28e" stroke-width="1.4" stroke-dasharray="2.3 2.3"/>
<path d="M145.4 519.3 L123.4 552.0" fill="none" stroke="#363636" stroke-width="1.4"/><path d="M145.4 519.3 L123.4 552.0" fill="none" stroke="#d2f28e" stroke-width="1.4" stroke-dasharray="2.3 2.3"/>
<path d="M156.1 519.3 L130.8 552.0" fill="none" stroke="#363636" stroke-width="1.4"/><path d="M156.1 519.3 L130.8 552.0" fill="none" stroke="#d2f28e" stroke-width="1.4" stroke-dasharray="2.3 2.3"/>
<path d="M166.7 519.3 L138.1 552.0" fill="none" stroke="#363636" stroke-width="1.4"/><path d="M166.7 519.3 L138.1 552.0" fill="none" stroke="#d2f28e" stroke-width="1.4" stroke-dasharray="2.3 2.3"/>
<path d="M177.3 519.3 L145.4 552.0" fill="none" stroke="#363636" stroke-width="1.4"/><path d="M177.3 519.3 L145.4 552.0" fill="none" stroke="#d2f28e" stroke-width="1.4" stroke-dasharray="2.3 2.3"/>
<path d="M187.9 519.3 L152.7 552.0" fill="none" stroke="#363636" stroke-width="1.4"/><path d="M187.9 519.3 L152.7 552.0" fill="none" stroke="#d2f28e" stroke-width="1.4" stroke-dasharray="2.3 2.3"/>
<path d="M198.5 519.3 L160.0 552.0" fill="none" stroke="#363636" stroke-width="1.4"/><path d="M198.5 519.3 L160.0 552.0" fill="none" stroke="#d2f28e" stroke-width="1.4" stroke-dasharray="2.3 2.3"/>
<path d="M209.2 519.3 L167.4 552.0" fill="none" stroke="#363636" stroke-width="1.4"/><path d="M209.2 519.3 L167.4 552.0" fill="none" stroke="#d2f28e" stroke-width="1.4" stroke-dasharray="2.3 2.3"/>
<path d="M219.8 519.3 L174.7 552.0" fill="none" stroke="#363636" stroke-width="1.4"/><path d="M219.8 519.3 L174.7 552.0" fill="none" stroke="#d2f28e" stroke-width="1.4" stroke-dasharray="2.3 2.3"/>
<path d="M230.4 519.3 L182.0 552.0" fill="none" stroke="#363636" stroke-width="1.4"/><path d="M230.4 519.3 L182.0 552.0" fill="none" stroke="#d2f28e" stroke-width="1.4" stroke-dasharray="2.3 2.3"/>
<path d="M326.8 518.9 L240.8 584.0" fill="none" stroke="#363636" stroke-width="1.4"/><path d="M326.8 518.9 L240.8 584.0" fill="none" stroke="#d2f28e" stroke-width="1.4" stroke-dasharray="2.3 2.3"/>
<path d="M334.0 518.9 L240.8 603.3" fill="none" stroke="#363636" stroke-width="1.4"/><path d="M334.0 518.9 L240.8 603.3" fill="none" stroke="#d2f28e" stroke-width="1.4" stroke-dasharray="2.3 2.3"/>
<path d="M341.3 518.9 L240.8 621.4" fill="none" stroke="#363636" stroke-width="1.4"/><path d="M341.3 518.9 L240.8 621.4" fill="none" stroke="#d2f28e" stroke-width="1.4" stroke-dasharray="2.3 2.3"/>
<path d="M348.5 518.9 L240.8 638.1" fill="none" stroke="#363636" stroke-width="1.4"/><path d="M348.5 518.9 L240.8 638.1" fill="none" stroke="#d2f28e" stroke-width="1.4" stroke-dasharray="2.3 2.3"/>
<path d="M355.8 518.9 L294.4 584.0" fill="none" stroke="#363636" stroke-width="1.4"/><path d="M355.8 518.9 L294.4 584.0" fill="none" stroke="#d2f28e" stroke-width="1.4" stroke-dasharray="2.3 2.3"/>
<path d="M363.0 518.9 L294.4 603.3" fill="none" stroke="#363636" stroke-width="1.4"/><path d="M363.0 518.9 L294.4 603.3" fill="none" stroke="#d2f28e" stroke-width="1.4" stroke-dasharray="2.3 2.3"/>
<path d="M370.2 518.9 L294.4 621.4" fill="none" stroke="#363636" stroke-width="1.4"/><path d="M370.2 518.9 L294.4 621.4" fill="none" stroke="#d2f28e" stroke-width="1.4" stroke-dasharray="2.3 2.3"/>
<path d="M377.5 518.9 L294.4 638.1" fill="none" stroke="#363636" stroke-width="1.4"/><path d="M377.5 518.9 L294.4 638.1" fill="none" stroke="#d2f28e" stroke-width="1.4" stroke-dasharray="2.3 2.3"/>
<path d="M384.7 518.9 L348.5 584.0" fill="none" stroke="#363636" stroke-width="1.4"/><path d="M384.7 518.9 L348.5 584.0" fill="none" stroke="#d2f28e" stroke-width="1.4" stroke-dasharray="2.3 2.3"/>
<path d="M392.0 518.9 L348.5 603.3" fill="none" stroke="#363636" stroke-width="1.4"/><path d="M392.0 518.9 L348.5 603.3" fill="none" stroke="#d2f28e" stroke-width="1.4" stroke-dasharray="2.3 2.3"/>
<path d="M399.2 518.9 L348.5 621.4" fill="none" stroke="#363636" stroke-width="1.4"/><path d="M399.2 518.9 L348.5 621.4" fill="none" stroke="#d2f28e" stroke-width="1.4" stroke-dasharray="2.3 2.3"/>
<path d="M406.4 518.9 L348.5 638.1" fill="none" stroke="#363636" stroke-width="1.4"/><path d="M406.4 518.9 L348.5 638.1" fill="none" stroke="#d2f28e" stroke-width="1.4" stroke-dasharray="2.3 2.3"/>
<path d="M413.7 518.9 L406.3 584.0" fill="none" stroke="#363636" stroke-width="1.4"/><path d="M413.7 518.9 L406.3 584.0" fill="none" stroke="#d2f28e" stroke-width="1.4" stroke-dasharray="2.3 2.3"/>
<path d="M420.9 518.9 L406.3 603.3" fill="none" stroke="#363636" stroke-width="1.4"/><path d="M420.9 518.9 L406.3 603.3" fill="none" stroke="#d2f28e" stroke-width="1.4" stroke-dasharray="2.3 2.3"/>
<path d="M428.2 518.9 L406.3 621.4" fill="none" stroke="#363636" stroke-width="1.4"/><path d="M428.2 518.9 L406.3 621.4" fill="none" stroke="#d2f28e" stroke-width="1.4" stroke-dasharray="2.3 2.3"/>
<path d="M435.4 518.9 L406.3 638.1" fill="none" stroke="#363636" stroke-width="1.4"/><path d="M435.4 518.9 L406.3 638.1" fill="none" stroke="#d2f28e" stroke-width="1.4" stroke-dasharray="2.3 2.3"/>
<path d="M442.6 518.9 L469.8 584.0" fill="none" stroke="#363636" stroke-width="1.4"/><path d="M442.6 518.9 L469.8 584.0" fill="none" stroke="#d2f28e" stroke-width="1.4" stroke-dasharray="2.3 2.3"/>
<path d="M449.9 518.9 L469.8 603.3" fill="none" stroke="#363636" stroke-width="1.4"/><path d="M449.9 518.9 L469.8 603.3" fill="none" stroke="#d2f28e" stroke-width="1.4" stroke-dasharray="2.3 2.3"/>
<path d="M457.1 518.9 L469.8 621.4" fill="none" stroke="#363636" stroke-width="1.4"/><path d="M457.1 518.9 L469.8 621.4" fill="none" stroke="#d2f28e" stroke-width="1.4" stroke-dasharray="2.3 2.3"/>
<path d="M464.4 518.9 L469.8 638.1" fill="none" stroke="#363636" stroke-width="1.4"/><path d="M464.4 518.9 L469.8 638.1" fill="none" stroke="#d2f28e" stroke-width="1.4" stroke-dasharray="2.3 2.3"/>
<path d="M471.6 518.9 L533.1 584.0" fill="none" stroke="#363636" stroke-width="1.4"/><path d="M471.6 518.9 L533.1 584.0" fill="none" stroke="#d2f28e" stroke-width="1.4" stroke-dasharray="2.3 2.3"/>
<path d="M478.8 518.9 L533.1 603.3" fill="none" stroke="#363636" stroke-width="1.4"/><path d="M478.8 518.9 L533.1 603.3" fill="none" stroke="#d2f28e" stroke-width="1.4" stroke-dasharray="2.3 2.3"/>
<path d="M486.1 518.9 L533.1 621.4" fill="none" stroke="#363636" stroke-width="1.4"/><path d="M486.1 518.9 L533.1 621.4" fill="none" stroke="#d2f28e" stroke-width="1.4" stroke-dasharray="2.3 2.3"/>
<path d="M493.3 518.9 L533.1 638.1" fill="none" stroke="#363636" stroke-width="1.4"/><path d="M493.3 518.9 L533.1 638.1" fill="none" stroke="#d2f28e" stroke-width="1.4" stroke-dasharray="2.3 2.3"/>
<path d="M500.6 518.9 L594.4 584.0" fill="none" stroke="#363636" stroke-width="1.4"/><path d="M500.6 518.9 L594.4 584.0" fill="none" stroke="#d2f28e" stroke-width="1.4" stroke-dasharray="2.3 2.3"/>
<path d="M507.8 518.9 L594.4 603.3" fill="none" stroke="#363636" stroke-width="1.4"/><path d="M507.8 518.9 L594.4 603.3" fill="none" stroke="#d2f28e" stroke-width="1.4" stroke-dasharray="2.3 2.3"/>
<path d="M515.0 518.9 L594.4 621.4" fill="none" stroke="#363636" stroke-width="1.4"/><path d="M515.0 518.9 L594.4 621.4" fill="none" stroke="#d2f28e" stroke-width="1.4" stroke-dasharray="2.3 2.3"/>
<path d="M522.3 518.9 L594.4 638.1" fill="none" stroke="#363636" stroke-width="1.4"/><path d="M522.3 518.9 L594.4 638.1" fill="none" stroke="#d2f28e" stroke-width="1.4" stroke-dasharray="2.3 2.3"/>
<path d="M529.5 518.9 L652.4 584.0" fill="none" stroke="#363636" stroke-width="1.4"/><path d="M529.5 518.9 L652.4 584.0" fill="none" stroke="#d2f28e" stroke-width="1.4" stroke-dasharray="2.3 2.3"/>
<path d="M536.8 518.9 L652.4 603.3" fill="none" stroke="#363636" stroke-width="1.4"/><path d="M536.8 518.9 L652.4 603.3" fill="none" stroke="#d2f28e" stroke-width="1.4" stroke-dasharray="2.3 2.3"/>
<path d="M544.0 518.9 L652.4 621.4" fill="none" stroke="#363636" stroke-width="1.4"/><path d="M544.0 518.9 L652.4 621.4" fill="none" stroke="#d2f28e" stroke-width="1.4" stroke-dasharray="2.3 2.3"/>
<path d="M551.2 518.9 L652.4 638.1" fill="none" stroke="#363636" stroke-width="1.4"/><path d="M551.2 518.9 L652.4 638.1" fill="none" stroke="#d2f28e" stroke-width="1.4" stroke-dasharray="2.3 2.3"/>
<path d="M558.5 518.9 L708.0 584.0" fill="none" stroke="#363636" stroke-width="1.4"/><path d="M558.5 518.9 L708.0 584.0" fill="none" stroke="#d2f28e" stroke-width="1.4" stroke-dasharray="2.3 2.3"/>
<path d="M565.7 518.9 L708.0 603.3" fill="none" stroke="#363636" stroke-width="1.4"/><path d="M565.7 518.9 L708.0 603.3" fill="none" stroke="#d2f28e" stroke-width="1.4" stroke-dasharray="2.3 2.3"/>
<path d="M573.0 518.9 L708.0 621.4" fill="none" stroke="#363636" stroke-width="1.4"/><path d="M573.0 518.9 L708.0 621.4" fill="none" stroke="#d2f28e" stroke-width="1.4" stroke-dasharray="2.3 2.3"/>
<path d="M580.2 518.9 L708.0 638.1" fill="none" stroke="#363636" stroke-width="1.4"/><path d="M580.2 518.9 L708.0 638.1" fill="none" stroke="#d2f28e" stroke-width="1.4" stroke-dasharray="2.3 2.3"/>
<path d="M72.2 647.5 L236.0 586.0" fill="none" stroke="#363636" stroke-width="1.3"/><path d="M72.2 647.5 L236.0 586.0" fill="none" stroke="#d2f28e" stroke-width="1.3" stroke-dasharray="2.3 2.3"/>
<path d="M72.2 647.5 L236.0 605.0" fill="none" stroke="#363636" stroke-width="1.3"/><path d="M72.2 647.5 L236.0 605.0" fill="none" stroke="#d2f28e" stroke-width="1.3" stroke-dasharray="2.3 2.3"/>
<path d="M72.2 647.5 L236.0 623.0" fill="none" stroke="#363636" stroke-width="1.3"/><path d="M72.2 647.5 L236.0 623.0" fill="none" stroke="#d2f28e" stroke-width="1.3" stroke-dasharray="2.3 2.3"/>
<path d="M72.2 647.5 L236.0 640.0" fill="none" stroke="#363636" stroke-width="1.3"/><path d="M72.2 647.5 L236.0 640.0" fill="none" stroke="#d2f28e" stroke-width="1.3" stroke-dasharray="2.3 2.3"/>
<path d="M72.2 647.5 L290.0 586.0" fill="none" stroke="#363636" stroke-width="1.3"/><path d="M72.2 647.5 L290.0 586.0" fill="none" stroke="#d2f28e" stroke-width="1.3" stroke-dasharray="2.3 2.3"/>
<path d="M72.2 647.5 L290.0 640.0" fill="none" stroke="#363636" stroke-width="1.3"/><path d="M72.2 647.5 L290.0 640.0" fill="none" stroke="#d2f28e" stroke-width="1.3" stroke-dasharray="2.3 2.3"/>
</svg>
<div class="t" style="left:81.0px;top:175.4px;font-size:8.2px;line-height:9.8px;color:#1a1a1a;">Shawn Greenlee, Outwash (for CubeFest 2019)</div>
<div class="a" style="left:69.5px;top:226.0px;width:201.5px;height:124.0px;background:#eeeebd;"></div>
<div class="ob" style="left:79px;top:191px;width:79px;height:20px;background:#333;border-top:3px solid #ffe800;border-bottom:3px solid #ffe800;color:#fff;font-size:12.3px;line-height:14px;padding-left:3px">p instructions</div>
<div class="ob" style="left:160.0px;top:194.6px;width:51.5px;height:13.1px;background:linear-gradient(to bottom,#6a6a6a 0,#6a6a6a 2px,#333 2px,#333 11.099999999999994px,#6a6a6a 11.099999999999994px,#6a6a6a 100%);font-size:7px;line-height:13.1px;padding-left:2.6px;padding-top:1.1px;color:#fff">p extra_notes</div>
<div class="a" style="left:71.8px;top:229.6px;width:30.8px;height:31.2px;background:#1fd655;"></div>
<svg width="2070" height="720"><path d="M80.5 238.5l13.5 13.5M94 238.5l-13.5 13.5" stroke="#ee2222" stroke-width="2.2"/></svg>
<div class="t" style="left:113.9px;top:234.7px;font-size:8.2px;line-height:9.8px;color:#1a1a1a;">play all, from beginning;</div>
<div class="t" style="left:113.9px;top:243.4px;font-size:8.2px;line-height:9.8px;color:#1a1a1a;">first 5 seconds is silent</div>
<div class="ob" style="left:79px;top:266px;width:79px;height:33px;background:#333;border-top:2.5px solid #f08a16;border-bottom:2.5px solid #f08a16;color:#fff;font-size:25px;line-height:27px;padding-left:2px">p qlist</div>
<div class="ob" style="left:166.2px;top:266px;width:62.5px;height:23.4px;background:#fd0606;border-radius:3.5px;color:#fff;font-size:16.4px;line-height:23px;padding-left:2.5px">ready!</div>
<div class="ob" style="left:78.8px;top:304.6px;width:46.2px;height:19.4px;background:#333;font-size:14px;line-height:19.4px;padding-left:8.2px;padding-top:1.1px;color:#fff"><i style="position:absolute;left:1.9px;top:5.9px;border-left:3.8px solid #777;border-top:3.8px solid transparent;border-bottom:3.8px solid transparent"></i>2</div>
<div class="t" style="left:129.4px;top:306.9px;font-size:8.2px;line-height:9.8px;color:#1a1a1a;">current cue number</div>
<div class="t" style="left:129.4px;top:315.9px;font-size:8.2px;line-height:9.8px;color:#1a1a1a;">end cue is: 10 (~8 minutes)</div>
<div class="ob" style="left:78.8px;top:331.4px;width:78.8px;height:14.6px;background:#3b3b3b;border-radius:3px;font-size:8.2px;line-height:14.6px;padding-left:3px;padding-top:1.1px;color:#fff">0. min 23. sec.</div>
<div class="ob" style="left:76.3px;top:357px;width:48.7px;height:14.7px;background:#333;border-top:2px solid #1ec2dc;border-bottom:2px solid #1ec2dc;color:#fff;font-size:8.2px;line-height:10.5px;padding-left:2.5px">p presetting</div>
<div class="ob" style="left:127.3px;top:357.0px;width:21.6px;height:14.7px;background:#3b3b3b;border-radius:3px;font-size:8.2px;line-height:14.7px;padding-left:3px;padding-top:1.1px;color:#fff">read</div>
<div class="ob" style="left:76.5px;top:393.5px;width:156.5px;height:15px;background:#333;border-top:2px solid #1ec2dc;border-bottom:2px solid #1ec2dc;color:#fff;font-size:8.2px;line-height:11px;padding-left:2.5px">p target_lists</div>
<div class="ob" style="left:234.6px;top:393.5px;width:76.2px;height:14.4px;background:linear-gradient(to bottom,#6a6a6a 0,#6a6a6a 2.9px,#333 2.9px,#333 11.499999999999977px,#6a6a6a 11.499999999999977px,#6a6a6a 100%);font-size:8.2px;line-height:14.4px;padding-left:2.6px;padding-top:1.1px;color:#fff">p loadbangSettings</div>
<div class="ob" style="left:234.6px;top:410.4px;width:58.7px;height:14.2px;background:linear-gradient(to bottom,#6a6a6a 0,#6a6a6a 2.8px,#333 2.8px,#333 11.400000000000045px,#6a6a6a 11.400000000000045px,#6a6a6a 100%);font-size:8.2px;line-height:14.2px;padding-left:2.6px;padding-top:1.1px;color:#fff">p makebuffers</div>
<div class="ob" style="left:76.5px;top:440.2px;width:156.5px;height:14.3px;background:linear-gradient(to bottom,#6a6a6a 0,#6a6a6a 2.9px,#333 2.9px,#333 11.400000000000011px,#6a6a6a 11.400000000000011px,#6a6a6a 100%);font-size:8.2px;line-height:14.3px;padding-left:2.6px;padding-top:1.1px;color:#fff">mc.gen~ @gen 6_benjolin @chans 20</div>
<div class="ob" style="left:191.2px;top:461.5px;width:41.8px;height:14.4px;background:linear-gradient(to bottom,#6a6a6a 0,#6a6a6a 2.9px,#333 2.9px,#333 11.499999999999977px,#6a6a6a 11.499999999999977px,#6a6a6a 100%);font-size:8.2px;line-height:14.4px;padding-left:2.6px;padding-top:1.1px;color:#fff">p sum</div>
<div class="a" style="left:253.0px;top:428.0px;width:17.0px;height:17.8px;background:#333;"></div>
<div class="a" style="left:255.5px;top:430.5px;width:12px;height:12px;border-radius:50%;border:1.2px solid #666"></div>
<div class="ob" style="left:253.0px;top:451.2px;width:33.5px;height:14.6px;background:linear-gradient(to bottom,#6a6a6a 0,#6a6a6a 2.9px,#333 2.9px,#333 11.700000000000022px,#6a6a6a 11.700000000000022px,#6a6a6a 100%);font-size:8.2px;line-height:14.6px;padding-left:2.6px;padding-top:1.1px;color:#fff">p ready</div>
<div class="ob" style="left:65.4px;top:505.1px;width:171.5px;height:14.2px;background:linear-gradient(to bottom,#6a6a6a 0,#6a6a6a 2.8px,#333 2.8px,#333 11.399999999999931px,#6a6a6a 11.399999999999931px,#6a6a6a 100%);font-size:8.2px;line-height:14.2px;padding-left:2.6px;padding-top:1.1px;color:#fff">p backingTrack</div>
<div class="ob" style="left:244.3px;top:505.1px;width:71.9px;height:14.2px;background:linear-gradient(to bottom,#6a6a6a 0,#6a6a6a 2.8px,#333 2.8px,#333 11.399999999999931px,#6a6a6a 11.399999999999931px,#6a6a6a 100%);font-size:8.2px;line-height:14.2px;padding-left:2.6px;padding-top:1.1px;color:#fff">p encoderSettings</div>
<div class="ob" style="left:280.7px;top:168.2px;width:48.3px;height:14.2px;background:linear-gradient(to bottom,#6a6a6a 0,#6a6a6a 2.8px,#333 2.8px,#333 11.400000000000016px,#6a6a6a 11.400000000000016px,#6a6a6a 100%);font-size:8.2px;line-height:14.2px;padding-left:2.6px;padding-top:1.1px;color:#fff">p flutter_vol</div>
<div class="ob" style="left:335.2px;top:168.2px;width:29.8px;height:14.2px;background:linear-gradient(to bottom,#6a6a6a 0,#6a6a6a 2.8px,#333 2.8px,#333 11.400000000000016px,#6a6a6a 11.400000000000016px,#6a6a6a 100%);font-size:8.2px;line-height:14.2px;padding-left:2.6px;padding-top:1.1px;color:#fff">r chvol</div>
<div class="ob" style="left:406.2px;top:168.2px;width:36.6px;height:14.2px;background:linear-gradient(to bottom,#6a6a6a 0,#6a6a6a 2.8px,#333 2.8px,#333 11.400000000000016px,#6a6a6a 11.400000000000016px,#6a6a6a 100%);font-size:8.2px;line-height:14.2px;padding-left:2.6px;padding-top:1.1px;color:#fff">r chvol_t</div>
<div class="ob" style="left:406.2px;top:184.3px;width:49.6px;height:14.6px;background:#333;font-size:8.2px;line-height:14.6px;padding-left:8.8px;padding-top:1.1px;color:#fff"><i style="position:absolute;left:2.0px;top:3.2px;border-left:4.1px solid #777;border-top:4.1px solid transparent;border-bottom:4.1px solid transparent"></i>10000.</div>
<div class="ob" style="left:335.2px;top:201.8px;width:59.3px;height:14.6px;background:linear-gradient(to bottom,#6a6a6a 0,#6a6a6a 2.9px,#333 2.9px,#333 11.699999999999994px,#6a6a6a 11.699999999999994px,#6a6a6a 100%);font-size:8.2px;line-height:14.6px;padding-left:2.6px;padding-top:1.1px;color:#fff">prepend select</div>
<div class="ob" style="left:406.2px;top:201.8px;width:27.8px;height:14.6px;background:#3b3b3b;border-radius:3px;font-size:8.2px;line-height:14.6px;padding-left:3px;padding-top:1.1px;color:#fff">set $1</div>
<div class="t" style="left:337.7px;top:218.2px;font-size:8.2px;line-height:9.8px;color:#1a1a1a;">individual chan scale (pre pan)</div>
<div class="ob" style="left:452.5px;top:214.0px;width:34.0px;height:14.5px;background:#333;font-size:8.2px;line-height:14.5px;padding-left:8.7px;padding-top:1.1px;color:#fff"><i style="position:absolute;left:2.0px;top:3.2px;border-left:4.1px solid #777;border-top:4.1px solid transparent;border-bottom:4.1px solid transparent"></i>0.</div>
<div class="ob" style="left:491.0px;top:168.2px;width:33.7px;height:14.2px;background:linear-gradient(to bottom,#6a6a6a 0,#6a6a6a 2.8px,#333 2.8px,#333 11.400000000000016px,#6a6a6a 11.400000000000016px,#6a6a6a 100%);font-size:8.2px;line-height:14.2px;padding-left:2.6px;padding-top:1.1px;color:#fff">r chpan</div>
<div class="ob" style="left:555.3px;top:168.2px;width:40.5px;height:14.2px;background:linear-gradient(to bottom,#6a6a6a 0,#6a6a6a 2.8px,#333 2.8px,#333 11.400000000000016px,#6a6a6a 11.400000000000016px,#6a6a6a 100%);font-size:8.2px;line-height:14.2px;padding-left:2.6px;padding-top:1.1px;color:#fff">r chpan_t</div>
<div class="ob" style="left:555.3px;top:184.3px;width:49.2px;height:14.6px;background:#333;font-size:8.2px;line-height:14.6px;padding-left:8.8px;padding-top:1.1px;color:#fff"><i style="position:absolute;left:2.0px;top:3.2px;border-left:4.1px solid #777;border-top:4.1px solid transparent;border-bottom:4.1px solid transparent"></i>0.</div>
<div class="ob" style="left:491.0px;top:201.8px;width:59.6px;height:14.6px;background:linear-gradient(to bottom,#6a6a6a 0,#6a6a6a 2.9px,#333 2.9px,#333 11.699999999999994px,#6a6a6a 11.699999999999994px,#6a6a6a 100%);font-size:8.2px;line-height:14.6px;padding-left:2.6px;padding-top:1.1px;color:#fff">prepend select</div>
<div class="ob" style="left:555.3px;top:201.8px;width:27.7px;height:14.6px;background:#3b3b3b;border-radius:3px;font-size:8.2px;line-height:14.6px;padding-left:3px;padding-top:1.1px;color:#fff">set $1</div>
<div class="ob" style="left:596.1px;top:201.8px;width:87.2px;height:14.6px;background:linear-gradient(to bottom,#6a6a6a 0,#6a6a6a 2.9px,#333 2.9px,#333 11.699999999999994px,#6a6a6a 11.699999999999994px,#6a6a6a 100%);font-size:8.2px;line-height:14.6px;padding-left:2.6px;padding-top:1.1px;color:#fff">p default_pan_volume</div>
<div class="t" style="left:493.6px;top:218.2px;font-size:8.2px;line-height:9.8px;color:#1a1a1a;">individual chan pan 1d</div>
<div class="a" style="left:335.2px;top:230.4px;width:151.3px;height:49.8px;background:#333;"></div>
<div class="a" style="left:491.0px;top:230.4px;width:152.0px;height:49.8px;background:#333;"></div>
<svg width="2070" height="720">
<rect x="335.4" y="250.0" width="7.2" height="1.8" fill="#a8d0d8"/>
<rect x="343.0" y="244.3" width="7.2" height="1.8" fill="#a8d0d8"/>
<rect x="350.5" y="239.4" width="7.2" height="1.8" fill="#a8d0d8"/>
<rect x="358.1" y="250.0" width="7.2" height="1.8" fill="#a8d0d8"/>
<rect x="365.7" y="244.3" width="7.2" height="1.8" fill="#a8d0d8"/>
<rect x="373.2" y="239.4" width="7.2" height="1.8" fill="#a8d0d8"/>
<rect x="380.8" y="250.0" width="7.2" height="1.8" fill="#a8d0d8"/>
<rect x="388.4" y="244.3" width="7.2" height="1.8" fill="#a8d0d8"/>
<rect x="395.9" y="239.4" width="7.2" height="1.8" fill="#a8d0d8"/>
<rect x="403.5" y="244.3" width="7.2" height="1.8" fill="#a8d0d8"/>
<rect x="411.1" y="250.0" width="7.2" height="1.8" fill="#a8d0d8"/>
<rect x="418.6" y="244.3" width="7.2" height="1.8" fill="#a8d0d8"/>
<rect x="426.2" y="239.4" width="7.2" height="1.8" fill="#a8d0d8"/>
<rect x="433.7" y="250.0" width="7.2" height="1.8" fill="#a8d0d8"/>
<rect x="441.3" y="244.3" width="7.2" height="1.8" fill="#a8d0d8"/>
<rect x="448.9" y="239.4" width="7.2" height="1.8" fill="#a8d0d8"/>
<rect x="456.4" y="250.0" width="7.2" height="1.8" fill="#a8d0d8"/>
<rect x="464.0" y="244.3" width="7.2" height="1.8" fill="#a8d0d8"/>
<rect x="471.6" y="239.4" width="7.2" height="1.8" fill="#a8d0d8"/>
<rect x="479.1" y="250.0" width="7.2" height="1.8" fill="#a8d0d8"/>
<rect x="491.2" y="277.1" width="7.2" height="1.8" fill="#a8d0d8"/>
<rect x="498.8" y="274.7" width="7.2" height="1.8" fill="#a8d0d8"/>
<rect x="506.4" y="272.3" width="7.2" height="1.8" fill="#a8d0d8"/>
<rect x="514.0" y="269.9" width="7.2" height="1.8" fill="#a8d0d8"/>
<rect x="521.6" y="267.5" width="7.2" height="1.8" fill="#a8d0d8"/>
<rect x="529.2" y="265.1" width="7.2" height="1.8" fill="#a8d0d8"/>
<rect x="536.8" y="262.7" width="7.2" height="1.8" fill="#a8d0d8"/>
<rect x="544.4" y="260.3" width="7.2" height="1.8" fill="#a8d0d8"/>
<rect x="552.0" y="257.9" width="7.2" height="1.8" fill="#a8d0d8"/>
<rect x="559.6" y="255.5" width="7.2" height="1.8" fill="#a8d0d8"/>
<rect x="567.2" y="253.1" width="7.2" height="1.8" fill="#a8d0d8"/>
<rect x="574.8" y="250.7" width="7.2" height="1.8" fill="#a8d0d8"/>
<rect x="582.4" y="248.3" width="7.2" height="1.8" fill="#a8d0d8"/>
<rect x="590.0" y="245.9" width="7.2" height="1.8" fill="#a8d0d8"/>
<rect x="597.6" y="243.5" width="7.2" height="1.8" fill="#a8d0d8"/>
<rect x="605.2" y="241.1" width="7.2" height="1.8" fill="#a8d0d8"/>
<rect x="612.8" y="238.7" width="7.2" height="1.8" fill="#a8d0d8"/>
<rect x="620.4" y="236.3" width="7.2" height="1.8" fill="#a8d0d8"/>
<rect x="628.0" y="233.9" width="7.2" height="1.8" fill="#a8d0d8"/>
<rect x="635.6" y="231.5" width="7.2" height="1.8" fill="#a8d0d8"/>
</svg>
<svg width="2070" height="720" style="position:absolute;left:335.2px;top:284.5px;width:150.8px;height:2.9px;z-index:2"><rect x="2.0" y="0" width="2.2" height="2.3" rx="1" fill="#8a8a8a"/><rect x="9.2" y="0" width="2.2" height="2.3" rx="1" fill="#8a8a8a"/><rect x="16.5" y="0" width="2.2" height="2.3" rx="1" fill="#8a8a8a"/><rect x="23.7" y="0" width="2.2" height="2.3" rx="1" fill="#8a8a8a"/><rect x="31.0" y="0" width="2.2" height="2.3" rx="1" fill="#8a8a8a"/><rect x="38.2" y="0" width="2.2" height="2.3" rx="1" fill="#8a8a8a"/><rect x="45.4" y="0" width="2.2" height="2.3" rx="1" fill="#8a8a8a"/><rect x="52.7" y="0" width="2.2" height="2.3" rx="1" fill="#8a8a8a"/><rect x="59.9" y="0" width="2.2" height="2.3" rx="1" fill="#8a8a8a"/><rect x="67.2" y="0" width="2.2" height="2.3" rx="1" fill="#8a8a8a"/><rect x="74.4" y="0" width="2.2" height="2.3" rx="1" fill="#8a8a8a"/><rect x="81.6" y="0" width="2.2" height="2.3" rx="1" fill="#8a8a8a"/><rect x="88.9" y="0" width="2.2" height="2.3" rx="1" fill="#8a8a8a"/><rect x="96.1" y="0" width="2.2" height="2.3" rx="1" fill="#8a8a8a"/><rect x="103.4" y="0" width="2.2" height="2.3" rx="1" fill="#8a8a8a"/><rect x="110.6" y="0" width="2.2" height="2.3" rx="1" fill="#8a8a8a"/><rect x="117.8" y="0" width="2.2" height="2.3" rx="1" fill="#8a8a8a"/><rect x="125.1" y="0" width="2.2" height="2.3" rx="1" fill="#8a8a8a"/><rect x="132.3" y="0" width="2.2" height="2.3" rx="1" fill="#8a8a8a"/><rect x="139.6" y="0" width="2.2" height="2.3" rx="1" fill="#8a8a8a"/><rect x="146.8" y="0" width="2.2" height="2.3" rx="1" fill="#8a8a8a"/></svg>
<div class="ob" style="left:335.2px;top:284.5px;width:150.8px;height:14.5px;background:linear-gradient(to bottom,#6a6a6a 0,#6a6a6a 2.9px,#333 2.9px,#333 11.6px,#6a6a6a 11.6px,#6a6a6a 100%);font-size:8.2px;line-height:14.5px;padding-left:2.6px;padding-top:1.1px;color:#fff">mc.targetlist @chans 20 @listmode 1</div>
<svg width="2070" height="720" style="position:absolute;left:491.0px;top:284.5px;width:150.9px;height:2.9px;z-index:2"><rect x="2.0" y="0" width="2.2" height="2.3" rx="1" fill="#8a8a8a"/><rect x="9.2" y="0" width="2.2" height="2.3" rx="1" fill="#8a8a8a"/><rect x="16.5" y="0" width="2.2" height="2.3" rx="1" fill="#8a8a8a"/><rect x="23.7" y="0" width="2.2" height="2.3" rx="1" fill="#8a8a8a"/><rect x="31.0" y="0" width="2.2" height="2.3" rx="1" fill="#8a8a8a"/><rect x="38.2" y="0" width="2.2" height="2.3" rx="1" fill="#8a8a8a"/><rect x="45.5" y="0" width="2.2" height="2.3" rx="1" fill="#8a8a8a"/><rect x="52.7" y="0" width="2.2" height="2.3" rx="1" fill="#8a8a8a"/><rect x="60.0" y="0" width="2.2" height="2.3" rx="1" fill="#8a8a8a"/><rect x="67.2" y="0" width="2.2" height="2.3" rx="1" fill="#8a8a8a"/><rect x="74.4" y="0" width="2.2" height="2.3" rx="1" fill="#8a8a8a"/><rect x="81.7" y="0" width="2.2" height="2.3" rx="1" fill="#8a8a8a"/><rect x="88.9" y="0" width="2.2" height="2.3" rx="1" fill="#8a8a8a"/><rect x="96.2" y="0" width="2.2" height="2.3" rx="1" fill="#8a8a8a"/><rect x="103.4" y="0" width="2.2" height="2.3" rx="1" fill="#8a8a8a"/><rect x="110.7" y="0" width="2.2" height="2.3" rx="1" fill="#8a8a8a"/><rect x="117.9" y="0" width="2.2" height="2.3" rx="1" fill="#8a8a8a"/><rect x="125.2" y="0" width="2.2" height="2.3" rx="1" fill="#8a8a8a"/><rect x="132.4" y="0" width="2.2" height="2.3" rx="1" fill="#8a8a8a"/><rect x="139.7" y="0" width="2.2" height="2.3" rx="1" fill="#8a8a8a"/><rect x="146.9" y="0" width="2.2" height="2.3" rx="1" fill="#8a8a8a"/></svg>
<div class="ob" style="left:491.0px;top:284.5px;width:150.9px;height:14.5px;background:linear-gradient(to bottom,#6a6a6a 0,#6a6a6a 2.9px,#333 2.9px,#333 11.6px,#6a6a6a 11.6px,#6a6a6a 100%);font-size:8.2px;line-height:14.5px;padding-left:2.6px;padding-top:1.1px;color:#fff">mc.targetlist @chans 20 @listmode 1</div>
<div class="ob" style="left:335.0px;top:304.7px;width:56.8px;height:14.0px;background:linear-gradient(to bottom,#6a6a6a 0,#6a6a6a 2.8px,#333 2.8px,#333 11.2px,#6a6a6a 11.2px,#6a6a6a 100%);font-size:8.2px;line-height:14.0px;padding-left:2.6px;padding-top:1.1px;color:#fff">append 1000.</div>
<div class="ob" style="left:335.0px;top:324.2px;width:81.1px;height:14.0px;background:linear-gradient(to bottom,#6a6a6a 0,#6a6a6a 2.8px,#333 2.8px,#333 11.2px,#6a6a6a 11.2px,#6a6a6a 100%);font-size:8.2px;line-height:14.0px;padding-left:2.6px;padding-top:1.1px;color:#fff">mc.line~ @chans 20</div>
<div class="ob" style="left:491.6px;top:304.7px;width:54.9px;height:14.0px;background:linear-gradient(to bottom,#6a6a6a 0,#6a6a6a 2.8px,#333 2.8px,#333 11.2px,#6a6a6a 11.2px,#6a6a6a 100%);font-size:8.2px;line-height:14.0px;padding-left:2.6px;padding-top:1.1px;color:#fff">append 3000.</div>
<div class="ob" style="left:555.3px;top:304.7px;width:75.7px;height:14px;background:#333;border-bottom:2px solid #2f9e38;border-top:2px solid #2f9e38;color:#fff;font-size:8.2px;line-height:10.5px;padding-left:2.6px">p mc_panning_test</div>
<div class="ob" style="left:491.6px;top:324.2px;width:79.9px;height:14.0px;background:linear-gradient(to bottom,#6a6a6a 0,#6a6a6a 2.8px,#333 2.8px,#333 11.2px,#6a6a6a 11.2px,#6a6a6a 100%);font-size:8.2px;line-height:14.0px;padding-left:2.6px;padding-top:1.1px;color:#fff">mc.line~ @chans 20</div>
<div class="ob" style="left:320.8px;top:346.0px;width:26.9px;height:13.8px;background:linear-gradient(to bottom,#6a6a6a 0,#6a6a6a 2.8px,#333 2.8px,#333 11.00000000000001px,#6a6a6a 11.00000000000001px,#6a6a6a 100%);font-size:8.2px;line-height:13.8px;padding-left:2.6px;padding-top:1.1px;color:#fff">mc.*~</div>
<div class="ob" style="left:320.8px;top:362.7px;width:116.7px;height:14.0px;background:linear-gradient(to bottom,#6a6a6a 0,#6a6a6a 2.8px,#333 2.8px,#333 11.2px,#6a6a6a 11.2px,#6a6a6a 100%);font-size:8.2px;line-height:14.0px;padding-left:2.6px;padding-top:1.1px;color:#fff">mc.mixdown~ 20 @autogain 1</div>
<div class="ob" style="left:475.5px;top:352.8px;width:19.1px;height:14.2px;background:#3b3b3b;border-radius:3px;font-size:8.2px;line-height:14.2px;padding-left:3px;padding-top:1.1px;color:#fff">99</div>
<div class="ob" style="left:497.5px;top:352.8px;width:19.8px;height:14.2px;background:#3b3b3b;border-radius:3px;font-size:8.2px;line-height:14.2px;padding-left:3px;padding-top:1.1px;color:#fff">0</div>
<div class="ob" style="left:475.5px;top:373.8px;width:35.5px;height:14.2px;background:#333;font-size:8.2px;line-height:14.2px;padding-left:8.6px;padding-top:1.1px;color:#fff"><i style="position:absolute;left:2.0px;top:3.1px;border-left:4.0px solid #777;border-top:4.0px solid transparent;border-bottom:4.0px solid transparent"></i>99</div>
<div class="t" style="left:335.0px;top:381.4px;font-size:8.2px;line-height:9.8px;color:#1a1a1a;">individual chan gain (post pan)</div>
<div class="t" style="left:582.0px;top:380.9px;font-size:8.2px;line-height:9.8px;color:#1a1a1a;">panic button</div>
<svg width="2070" height="720">
<defs><pattern id="hd" width="2.6" height="2.6" patternUnits="userSpaceOnUse" patternTransform="rotate(45)"><rect width="2.6" height="2.6" fill="#343434"/><rect width="1.2" height="2.6" fill="#4c4c4c"/></pattern>
<pattern id="hl" width="2.6" height="2.6" patternUnits="userSpaceOnUse" patternTransform="rotate(45)"><rect width="2.6" height="2.6" fill="#cdeef2"/><rect width="1.1" height="2.6" fill="#3a4546"/></pattern></defs>
<rect x="320.4" y="393.8" width="190.6" height="71.9" fill="#2a2a2a"/>
<rect x="320.9" y="394.8" width="8.5" height="24.7" fill="url(#hd)"/>
<rect x="320.9" y="419.5" width="8.5" height="2.2" fill="#d4f4f8"/>
<rect x="320.9" y="422.2" width="8.5" height="42.5" fill="url(#hl)"/>
<rect x="330.4" y="394.8" width="8.5" height="24.7" fill="url(#hd)"/>
<rect x="330.4" y="419.5" width="8.5" height="2.2" fill="#d4f4f8"/>
<rect x="330.4" y="422.2" width="8.5" height="42.5" fill="url(#hl)"/>
<rect x="340.0" y="394.8" width="8.5" height="24.7" fill="url(#hd)"/>
<rect x="340.0" y="419.5" width="8.5" height="2.2" fill="#d4f4f8"/>
<rect x="340.0" y="422.2" width="8.5" height="42.5" fill="url(#hl)"/>
<rect x="349.5" y="394.8" width="8.5" height="24.7" fill="url(#hd)"/>
<rect x="349.5" y="419.5" width="8.5" height="2.2" fill="#d4f4f8"/>
<rect x="349.5" y="422.2" width="8.5" height="42.5" fill="url(#hl)"/>
<rect x="359.0" y="394.8" width="8.5" height="24.7" fill="url(#hd)"/>
<rect x="359.0" y="419.5" width="8.5" height="2.2" fill="#d4f4f8"/>
<rect x="359.0" y="422.2" width="8.5" height="42.5" fill="url(#hl)"/>
<rect x="368.5" y="394.8" width="8.5" height="24.7" fill="url(#hd)"/>
<rect x="368.5" y="419.5" width="8.5" height="2.2" fill="#d4f4f8"/>
<rect x="368.5" y="422.2" width="8.5" height="42.5" fill="url(#hl)"/>
<rect x="378.1" y="394.8" width="8.5" height="24.7" fill="url(#hd)"/>
<rect x="378.1" y="419.5" width="8.5" height="2.2" fill="#d4f4f8"/>
<rect x="378.1" y="422.2" width="8.5" height="42.5" fill="url(#hl)"/>
<rect x="387.6" y="394.8" width="8.5" height="24.7" fill="url(#hd)"/>
<rect x="387.6" y="419.5" width="8.5" height="2.2" fill="#d4f4f8"/>
<rect x="387.6" y="422.2" width="8.5" height="42.5" fill="url(#hl)"/>
<rect x="397.1" y="394.8" width="8.5" height="24.7" fill="url(#hd)"/>
<rect x="397.1" y="419.5" width="8.5" height="2.2" fill="#d4f4f8"/>
<rect x="397.1" y="422.2" width="8.5" height="42.5" fill="url(#hl)"/>
<rect x="406.7" y="394.8" width="8.5" height="24.7" fill="url(#hd)"/>
<rect x="406.7" y="419.5" width="8.5" height="2.2" fill="#d4f4f8"/>
<rect x="406.7" y="422.2" width="8.5" height="42.5" fill="url(#hl)"/>
<rect x="416.2" y="394.8" width="8.5" height="24.7" fill="url(#hd)"/>
<rect x="416.2" y="419.5" width="8.5" height="2.2" fill="#d4f4f8"/>
<rect x="416.2" y="422.2" width="8.5" height="42.5" fill="url(#hl)"/>
<rect x="425.7" y="394.8" width="8.5" height="24.7" fill="url(#hd)"/>
<rect x="425.7" y="419.5" width="8.5" height="2.2" fill="#d4f4f8"/>
<rect x="425.7" y="422.2" width="8.5" height="42.5" fill="url(#hl)"/>
<rect x="435.3" y="394.8" width="8.5" height="24.7" fill="url(#hd)"/>
<rect x="435.3" y="419.5" width="8.5" height="2.2" fill="#d4f4f8"/>
<rect x="435.3" y="422.2" width="8.5" height="42.5" fill="url(#hl)"/>
<rect x="444.8" y="394.8" width="8.5" height="24.7" fill="url(#hd)"/>
<rect x="444.8" y="419.5" width="8.5" height="2.2" fill="#d4f4f8"/>
<rect x="444.8" y="422.2" width="8.5" height="42.5" fill="url(#hl)"/>
<rect x="454.3" y="394.8" width="8.5" height="24.7" fill="url(#hd)"/>
<rect x="454.3" y="419.5" width="8.5" height="2.2" fill="#d4f4f8"/>
<rect x="454.3" y="422.2" width="8.5" height="42.5" fill="url(#hl)"/>
<rect x="463.9" y="394.8" width="8.5" height="24.7" fill="url(#hd)"/>
<rect x="463.9" y="419.5" width="8.5" height="2.2" fill="#d4f4f8"/>
<rect x="463.9" y="422.2" width="8.5" height="42.5" fill="url(#hl)"/>
<rect x="473.4" y="394.8" width="8.5" height="24.7" fill="url(#hd)"/>
<rect x="473.4" y="419.5" width="8.5" height="2.2" fill="#d4f4f8"/>
<rect x="473.4" y="422.2" width="8.5" height="42.5" fill="url(#hl)"/>
<rect x="482.9" y="394.8" width="8.5" height="24.7" fill="url(#hd)"/>
<rect x="482.9" y="419.5" width="8.5" height="2.2" fill="#d4f4f8"/>
<rect x="482.9" y="422.2" width="8.5" height="42.5" fill="url(#hl)"/>
<rect x="492.4" y="394.8" width="8.5" height="24.7" fill="url(#hd)"/>
<rect x="492.4" y="419.5" width="8.5" height="2.2" fill="#d4f4f8"/>
<rect x="492.4" y="422.2" width="8.5" height="42.5" fill="url(#hl)"/>
<rect x="502.0" y="394.8" width="8.5" height="24.7" fill="url(#hd)"/>
<rect x="502.0" y="419.5" width="8.5" height="2.2" fill="#d4f4f8"/>
<rect x="502.0" y="422.2" width="8.5" height="42.5" fill="url(#hl)"/>
<rect x="512.5" y="393.8" width="63.4" height="71.9" fill="#333"/>
<rect x="514.5" y="395.8" width="2.8" height="2.5" fill="#4a4a4a"/>
<rect x="514.5" y="399.2" width="2.8" height="2.5" fill="#4a4a4a"/>
<rect x="514.5" y="402.6" width="2.8" height="2.5" fill="#4a4a4a"/>
<rect x="514.5" y="406.0" width="2.8" height="2.5" fill="#4a4a4a"/>
<rect x="514.5" y="409.4" width="2.8" height="2.5" fill="#4a4a4a"/>
<rect x="514.5" y="412.8" width="2.8" height="2.5" fill="#4a4a4a"/>
<rect x="514.5" y="416.2" width="2.8" height="2.5" fill="#4a4a4a"/>
<rect x="514.5" y="419.6" width="2.8" height="2.5" fill="#4a4a4a"/>
<rect x="514.5" y="423.0" width="2.8" height="2.5" fill="#4a4a4a"/>
<rect x="514.5" y="426.4" width="2.8" height="2.5" fill="#4a4a4a"/>
<rect x="514.5" y="429.8" width="2.8" height="2.5" fill="#4a4a4a"/>
<rect x="514.5" y="433.1" width="2.8" height="2.5" fill="#4a4a4a"/>
<rect x="514.5" y="436.5" width="2.8" height="2.5" fill="#4a4a4a"/>
<rect x="514.5" y="439.9" width="2.8" height="2.5" fill="#4a4a4a"/>
<rect x="514.5" y="443.3" width="2.8" height="2.5" fill="#4a4a4a"/>
<rect x="514.5" y="446.7" width="2.8" height="2.5" fill="#4a4a4a"/>
<rect x="514.5" y="450.1" width="2.8" height="2.5" fill="#4a4a4a"/>
<rect x="514.5" y="453.5" width="2.8" height="2.5" fill="#4a4a4a"/>
<rect x="514.5" y="456.9" width="2.8" height="2.5" fill="#17b32a"/>
<rect x="514.5" y="460.3" width="2.8" height="2.5" fill="#17b32a"/>
<rect x="518.2" y="395.8" width="2.8" height="2.5" fill="#4a4a4a"/>
<rect x="518.2" y="399.2" width="2.8" height="2.5" fill="#4a4a4a"/>
<rect x="518.2" y="402.6" width="2.8" height="2.5" fill="#4a4a4a"/>
<rect x="518.2" y="406.0" width="2.8" height="2.5" fill="#4a4a4a"/>
<rect x="518.2" y="409.4" width="2.8" height="2.5" fill="#4a4a4a"/>
<rect x="518.2" y="412.8" width="2.8" height="2.5" fill="#4a4a4a"/>
<rect x="518.2" y="416.2" width="2.8" height="2.5" fill="#4a4a4a"/>
<rect x="518.2" y="419.6" width="2.8" height="2.5" fill="#4a4a4a"/>
<rect x="518.2" y="423.0" width="2.8" height="2.5" fill="#4a4a4a"/>
<rect x="518.2" y="426.4" width="2.8" height="2.5" fill="#4a4a4a"/>
<rect x="518.2" y="429.8" width="2.8" height="2.5" fill="#4a4a4a"/>
<rect x="518.2" y="433.1" width="2.8" height="2.5" fill="#4a4a4a"/>
<rect x="518.2" y="436.5" width="2.8" height="2.5" fill="#4a4a4a"/>
<rect x="518.2" y="439.9" width="2.8" height="2.5" fill="#4a4a4a"/>
<rect x="518.2" y="443.3" width="2.8" height="2.5" fill="#4a4a4a"/>
<rect x="518.2" y="446.7" width="2.8" height="2.5" fill="#4a4a4a"/>
<rect x="518.2" y="450.1" width="2.8" height="2.5" fill="#4a4a4a"/>
<rect x="518.2" y="453.5" width="2.8" height="2.5" fill="#17b32a"/>
<rect x="518.2" y="456.9" width="2.8" height="2.5" fill="#17b32a"/>
<rect x="518.2" y="460.3" width="2.8" height="2.5" fill="#17b32a"/>
<rect x="521.9" y="395.8" width="2.8" height="2.5" fill="#4a4a4a"/>
<rect x="521.9" y="399.2" width="2.8" height="2.5" fill="#4a4a4a"/>
<rect x="521.9" y="402.6" width="2.8" height="2.5" fill="#4a4a4a"/>
<rect x="521.9" y="406.0" width="2.8" height="2.5" fill="#4a4a4a"/>
<rect x="521.9" y="409.4" width="2.8" height="2.5" fill="#4a4a4a"/>
<rect x="521.9" y="412.8" width="2.8" height="2.5" fill="#4a4a4a"/>
<rect x="521.9" y="416.2" width="2.8" height="2.5" fill="#4a4a4a"/>
<rect x="521.9" y="419.6" width="2.8" height="2.5" fill="#4a4a4a"/>
<rect x="521.9" y="423.0" width="2.8" height="2.5" fill="#4a4a4a"/>
<rect x="521.9" y="426.4" width="2.8" height="2.5" fill="#4a4a4a"/>
<rect x="521.9" y="429.8" width="2.8" height="2.5" fill="#4a4a4a"/>
<rect x="521.9" y="433.1" width="2.8" height="2.5" fill="#4a4a4a"/>
<rect x="521.9" y="436.5" width="2.8" height="2.5" fill="#4a4a4a"/>
<rect x="521.9" y="439.9" width="2.8" height="2.5" fill="#4a4a4a"/>
<rect x="521.9" y="443.3" width="2.8" height="2.5" fill="#4a4a4a"/>
<rect x="521.9" y="446.7" width="2.8" height="2.5" fill="#4a4a4a"/>
<rect x="521.9" y="450.1" width="2.8" height="2.5" fill="#4a4a4a"/>
<rect x="521.9" y="453.5" width="2.8" height="2.5" fill="#4a4a4a"/>
<rect x="521.9" y="456.9" width="2.8" height="2.5" fill="#17b32a"/>
<rect x="521.9" y="460.3" width="2.8" height="2.5" fill="#17b32a"/>
<rect x="525.6" y="395.8" width="2.8" height="2.5" fill="#4a4a4a"/>
<rect x="525.6" y="399.2" width="2.8" height="2.5" fill="#4a4a4a"/>
<rect x="525.6" y="402.6" width="2.8" height="2.5" fill="#4a4a4a"/>
<rect x="525.6" y="406.0" width="2.8" height="2.5" fill="#4a4a4a"/>
<rect x="525.6" y="409.4" width="2.8" height="2.5" fill="#4a4a4a"/>
<rect x="525.6" y="412.8" width="2.8" height="2.5" fill="#4a4a4a"/>
<rect x="525.6" y="416.2" width="2.8" height="2.5" fill="#4a4a4a"/>
<rect x="525.6" y="419.6" width="2.8" height="2.5" fill="#4a4a4a"/>
<rect x="525.6" y="423.0" width="2.8" height="2.5" fill="#4a4a4a"/>
<rect x="525.6" y="426.4" width="2.8" height="2.5" fill="#4a4a4a"/>
<rect x="525.6" y="429.8" width="2.8" height="2.5" fill="#4a4a4a"/>
<rect x="525.6" y="433.1" width="2.8" height="2.5" fill="#4a4a4a"/>
<rect x="525.6" y="436.5" width="2.8" height="2.5" fill="#4a4a4a"/>
<rect x="525.6" y="439.9" width="2.8" height="2.5" fill="#4a4a4a"/>
<rect x="525.6" y="443.3" width="2.8" height="2.5" fill="#4a4a4a"/>
<rect x="525.6" y="446.7" width="2.8" height="2.5" fill="#4a4a4a"/>
<rect x="525.6" y="450.1" width="2.8" height="2.5" fill="#17b32a"/>
<rect x="525.6" y="453.5" width="2.8" height="2.5" fill="#17b32a"/>
<rect x="525.6" y="456.9" width="2.8" height="2.5" fill="#17b32a"/>
<rect x="525.6" y="460.3" width="2.8" height="2.5" fill="#17b32a"/>
<rect x="529.4" y="395.8" width="2.8" height="2.5" fill="#4a4a4a"/>
<rect x="529.4" y="399.2" width="2.8" height="2.5" fill="#4a4a4a"/>
<rect x="529.4" y="402.6" width="2.8" height="2.5" fill="#4a4a4a"/>
<rect x="529.4" y="406.0" width="2.8" height="2.5" fill="#4a4a4a"/>
<rect x="529.4" y="409.4" width="2.8" height="2.5" fill="#4a4a4a"/>
<rect x="529.4" y="412.8" width="2.8" height="2.5" fill="#4a4a4a"/>
<rect x="529.4" y="416.2" width="2.8" height="2.5" fill="#4a4a4a"/>
<rect x="529.4" y="419.6" width="2.8" height="2.5" fill="#4a4a4a"/>
<rect x="529.4" y="423.0" width="2.8" height="2.5" fill="#4a4a4a"/>
<rect x="529.4" y="426.4" width="2.8" height="2.5" fill="#4a4a4a"/>
<rect x="529.4" y="429.8" width="2.8" height="2.5" fill="#4a4a4a"/>
<rect x="529.4" y="433.1" width="2.8" height="2.5" fill="#4a4a4a"/>
<rect x="529.4" y="436.5" width="2.8" height="2.5" fill="#4a4a4a"/>
<rect x="529.4" y="439.9" width="2.8" height="2.5" fill="#4a4a4a"/>
<rect x="529.4" y="443.3" width="2.8" height="2.5" fill="#4a4a4a"/>
<rect x="529.4" y="446.7" width="2.8" height="2.5" fill="#4a4a4a"/>
<rect x="529.4" y="450.1" width="2.8" height="2.5" fill="#4a4a4a"/>
<rect x="529.4" y="453.5" width="2.8" height="2.5" fill="#17b32a"/>
<rect x="529.4" y="456.9" width="2.8" height="2.5" fill="#17b32a"/>
<rect x="529.4" y="460.3" width="2.8" height="2.5" fill="#17b32a"/>
<rect x="533.1" y="395.8" width="2.8" height="2.5" fill="#4a4a4a"/>
<rect x="533.1" y="399.2" width="2.8" height="2.5" fill="#4a4a4a"/>
<rect x="533.1" y="402.6" width="2.8" height="2.5" fill="#4a4a4a"/>
<rect x="533.1" y="406.0" width="2.8" height="2.5" fill="#4a4a4a"/>
<rect x="533.1" y="409.4" width="2.8" height="2.5" fill="#4a4a4a"/>
<rect x="533.1" y="412.8" width="2.8" height="2.5" fill="#4a4a4a"/>
<rect x="533.1" y="416.2" width="2.8" height="2.5" fill="#4a4a4a"/>
<rect x="533.1" y="419.6" width="2.8" height="2.5" fill="#4a4a4a"/>
<rect x="533.1" y="423.0" width="2.8" height="2.5" fill="#4a4a4a"/>
<rect x="533.1" y="426.4" width="2.8" height="2.5" fill="#4a4a4a"/>
<rect x="533.1" y="429.8" width="2.8" height="2.5" fill="#4a4a4a"/>
<rect x="533.1" y="433.1" width="2.8" height="2.5" fill="#4a4a4a"/>
<rect x="533.1" y="436.5" width="2.8" height="2.5" fill="#4a4a4a"/>
<rect x="533.1" y="439.9" width="2.8" height="2.5" fill="#4a4a4a"/>
<rect x="533.1" y="443.3" width="2.8" height="2.5" fill="#4a4a4a"/>
<rect x="533.1" y="446.7" width="2.8" height="2.5" fill="#4a4a4a"/>
<rect x="533.1" y="450.1" width="2.8" height="2.5" fill="#4a4a4a"/>
<rect x="533.1" y="453.5" width="2.8" height="2.5" fill="#4a4a4a"/>
<rect x="533.1" y="456.9" width="2.8" height="2.5" fill="#17b32a"/>
<rect x="533.1" y="460.3" width="2.8" height="2.5" fill="#17b32a"/>
<rect x="536.8" y="395.8" width="2.8" height="2.5" fill="#4a4a4a"/>
<rect x="536.8" y="399.2" width="2.8" height="2.5" fill="#4a4a4a"/>
<rect x="536.8" y="402.6" width="2.8" height="2.5" fill="#4a4a4a"/>
<rect x="536.8" y="406.0" width="2.8" height="2.5" fill="#4a4a4a"/>
<rect x="536.8" y="409.4" width="2.8" height="2.5" fill="#4a4a4a"/>
<rect x="536.8" y="412.8" width="2.8" height="2.5" fill="#4a4a4a"/>
<rect x="536.8" y="416.2" width="2.8" height="2.5" fill="#4a4a4a"/>
<rect x="536.8" y="419.6" width="2.8" height="2.5" fill="#4a4a4a"/>
<rect x="536.8" y="423.0" width="2.8" height="2.5" fill="#4a4a4a"/>
<rect x="536.8" y="426.4" width="2.8" height="2.5" fill="#4a4a4a"/>
<rect x="536.8" y="429.8" width="2.8" height="2.5" fill="#4a4a4a"/>
<rect x="536.8" y="433.1" width="2.8" height="2.5" fill="#4a4a4a"/>
<rect x="536.8" y="436.5" width="2.8" height="2.5" fill="#4a4a4a"/>
<rect x="536.8" y="439.9" width="2.8" height="2.5" fill="#4a4a4a"/>
<rect x="536.8" y="443.3" width="2.8" height="2.5" fill="#4a4a4a"/>
<rect x="536.8" y="446.7" width="2.8" height="2.5" fill="#4a4a4a"/>
<rect x="536.8" y="450.1" width="2.8" height="2.5" fill="#17b32a"/>
<rect x="536.8" y="453.5" width="2.8" height="2.5" fill="#17b32a"/>
<rect x="536.8" y="456.9" width="2.8" height="2.5" fill="#17b32a"/>
<rect x="536.8" y="460.3" width="2.8" height="2.5" fill="#17b32a"/>
<rect x="540.5" y="395.8" width="2.8" height="2.5" fill="#4a4a4a"/>
<rect x="540.5" y="399.2" width="2.8" height="2.5" fill="#4a4a4a"/>
<rect x="540.5" y="402.6" width="2.8" height="2.5" fill="#4a4a4a"/>
<rect x="540.5" y="406.0" width="2.8" height="2.5" fill="#4a4a4a"/>
<rect x="540.5" y="409.4" width="2.8" height="2.5" fill="#4a4a4a"/>
<rect x="540.5" y="412.8" width="2.8" height="2.5" fill="#4a4a4a"/>
<rect x="540.5" y="416.2" width="2.8" height="2.5" fill="#4a4a4a"/>
<rect x="540.5" y="419.6" width="2.8" height="2.5" fill="#4a4a4a"/>
<rect x="540.5" y="423.0" width="2.8" height="2.5" fill="#4a4a4a"/>
<rect x="540.5" y="426.4" width="2.8" height="2.5" fill="#4a4a4a"/>
<rect x="540.5" y="429.8" width="2.8" height="2.5" fill="#4a4a4a"/>
<rect x="540.5" y="433.1" width="2.8" height="2.5" fill="#4a4a4a"/>
<rect x="540.5" y="436.5" width="2.8" height="2.5" fill="#4a4a4a"/>
<rect x="540.5" y="439.9" width="2.8" height="2.5" fill="#4a4a4a"/>
<rect x="540.5" y="443.3" width="2.8" height="2.5" fill="#4a4a4a"/>
<rect x="540.5" y="446.7" width="2.8" height="2.5" fill="#4a4a4a"/>
<rect x="540.5" y="450.1" width="2.8" height="2.5" fill="#4a4a4a"/>
<rect x="540.5" y="453.5" width="2.8" height="2.5" fill="#17b32a"/>
<rect x="540.5" y="456.9" width="2.8" height="2.5" fill="#17b32a"/>
<rect x="540.5" y="460.3" width="2.8" height="2.5" fill="#17b32a"/>
<rect x="544.2" y="395.8" width="2.8" height="2.5" fill="#4a4a4a"/>
<rect x="544.2" y="399.2" width="2.8" height="2.5" fill="#4a4a4a"/>
<rect x="544.2" y="402.6" width="2.8" height="2.5" fill="#4a4a4a"/>
<rect x="544.2" y="406.0" width="2.8" height="2.5" fill="#4a4a4a"/>
<rect x="544.2" y="409.4" width="2.8" height="2.5" fill="#4a4a4a"/>
<rect x="544.2" y="412.8" width="2.8" height="2.5" fill="#4a4a4a"/>
<rect x="544.2" y="416.2" width="2.8" height="2.5" fill="#4a4a4a"/>
<rect x="544.2" y="419.6" width="2.8" height="2.5" fill="#4a4a4a"/>
<rect x="544.2" y="423.0" width="2.8" height="2.5" fill="#4a4a4a"/>
<rect x="544.2" y="426.4" width="2.8" height="2.5" fill="#4a4a4a"/>
<rect x="544.2" y="429.8" width="2.8" height="2.5" fill="#4a4a4a"/>
<rect x="544.2" y="433.1" width="2.8" height="2.5" fill="#4a4a4a"/>
<rect x="544.2" y="436.5" width="2.8" height="2.5" fill="#4a4a4a"/>
<rect x="544.2" y="439.9" width="2.8" height="2.5" fill="#4a4a4a"/>
<rect x="544.2" y="443.3" width="2.8" height="2.5" fill="#4a4a4a"/>
<rect x="544.2" y="446.7" width="2.8" height="2.5" fill="#4a4a4a"/>
<rect x="544.2" y="450.1" width="2.8" height="2.5" fill="#4a4a4a"/>
<rect x="544.2" y="453.5" width="2.8" height="2.5" fill="#17b32a"/>
<rect x="544.2" y="456.9" width="2.8" height="2.5" fill="#17b32a"/>
<rect x="544.2" y="460.3" width="2.8" height="2.5" fill="#17b32a"/>
<rect x="547.9" y="395.8" width="2.8" height="2.5" fill="#4a4a4a"/>
<rect x="547.9" y="399.2" width="2.8" height="2.5" fill="#4a4a4a"/>
<rect x="547.9" y="402.6" width="2.8" height="2.5" fill="#4a4a4a"/>
<rect x="547.9" y="406.0" width="2.8" height="2.5" fill="#4a4a4a"/>
<rect x="547.9" y="409.4" width="2.8" height="2.5" fill="#4a4a4a"/>
<rect x="547.9" y="412.8" width="2.8" height="2.5" fill="#4a4a4a"/>
<rect x="547.9" y="416.2" width="2.8" height="2.5" fill="#4a4a4a"/>
<rect x="547.9" y="419.6" width="2.8" height="2.5" fill="#4a4a4a"/>
<rect x="547.9" y="423.0" width="2.8" height="2.5" fill="#4a4a4a"/>
<rect x="547.9" y="426.4" width="2.8" height="2.5" fill="#4a4a4a"/>
<rect x="547.9" y="429.8" width="2.8" height="2.5" fill="#4a4a4a"/>
<rect x="547.9" y="433.1" width="2.8" height="2.5" fill="#4a4a4a"/>
<rect x="547.9" y="436.5" width="2.8" height="2.5" fill="#4a4a4a"/>
<rect x="547.9" y="439.9" width="2.8" height="2.5" fill="#4a4a4a"/>
<rect x="547.9" y="443.3" width="2.8" height="2.5" fill="#4a4a4a"/>
<rect x="547.9" y="446.7" width="2.8" height="2.5" fill="#4a4a4a"/>
<rect x="547.9" y="450.1" width="2.8" height="2.5" fill="#4a4a4a"/>
<rect x="547.9" y="453.5" width="2.8" height="2.5" fill="#4a4a4a"/>
<rect x="547.9" y="456.9" width="2.8" height="2.5" fill="#17b32a"/>
<rect x="547.9" y="460.3" width="2.8" height="2.5" fill="#17b32a"/>
<rect x="551.6" y="395.8" width="2.8" height="2.5" fill="#4a4a4a"/>
<rect x="551.6" y="399.2" width="2.8" height="2.5" fill="#4a4a4a"/>
<rect x="551.6" y="402.6" width="2.8" height="2.5" fill="#4a4a4a"/>
<rect x="551.6" y="406.0" width="2.8" height="2.5" fill="#4a4a4a"/>
<rect x="551.6" y="409.4" width="2.8" height="2.5" fill="#4a4a4a"/>
<rect x="551.6" y="412.8" width="2.8" height="2.5" fill="#4a4a4a"/>
<rect x="551.6" y="416.2" width="2.8" height="2.5" fill="#4a4a4a"/>
<rect x="551.6" y="419.6" width="2.8" height="2.5" fill="#4a4a4a"/>
<rect x="551.6" y="423.0" width="2.8" height="2.5" fill="#4a4a4a"/>
<rect x="551.6" y="426.4" width="2.8" height="2.5" fill="#4a4a4a"/>
<rect x="551.6" y="429.8" width="2.8" height="2.5" fill="#4a4a4a"/>
<rect x="551.6" y="433.1" width="2.8" height="2.5" fill="#4a4a4a"/>
<rect x="551.6" y="436.5" width="2.8" height="2.5" fill="#4a4a4a"/>
<rect x="551.6" y="439.9" width="2.8" height="2.5" fill="#4a4a4a"/>
<rect x="551.6" y="443.3" width="2.8" height="2.5" fill="#4a4a4a"/>
<rect x="551.6" y="446.7" width="2.8" height="2.5" fill="#4a4a4a"/>
<rect x="551.6" y="450.1" width="2.8" height="2.5" fill="#4a4a4a"/>
<rect x="551.6" y="453.5" width="2.8" height="2.5" fill="#4a4a4a"/>
<rect x="551.6" y="456.9" width="2.8" height="2.5" fill="#17b32a"/>
<rect x="551.6" y="460.3" width="2.8" height="2.5" fill="#17b32a"/>
<rect x="555.3" y="395.8" width="2.8" height="2.5" fill="#4a4a4a"/>
<rect x="555.3" y="399.2" width="2.8" height="2.5" fill="#4a4a4a"/>
<rect x="555.3" y="402.6" width="2.8" height="2.5" fill="#4a4a4a"/>
<rect x="555.3" y="406.0" width="2.8" height="2.5" fill="#4a4a4a"/>
<rect x="555.3" y="409.4" width="2.8" height="2.5" fill="#4a4a4a"/>
<rect x="555.3" y="412.8" width="2.8" height="2.5" fill="#4a4a4a"/>
<rect x="555.3" y="416.2" width="2.8" height="2.5" fill="#4a4a4a"/>
<rect x="555.3" y="419.6" width="2.8" height="2.5" fill="#4a4a4a"/>
<rect x="555.3" y="423.0" width="2.8" height="2.5" fill="#4a4a4a"/>
<rect x="555.3" y="426.4" width="2.8" height="2.5" fill="#4a4a4a"/>
<rect x="555.3" y="429.8" width="2.8" height="2.5" fill="#4a4a4a"/>
<rect x="555.3" y="433.1" width="2.8" height="2.5" fill="#4a4a4a"/>
<rect x="555.3" y="436.5" width="2.8" height="2.5" fill="#4a4a4a"/>
<rect x="555.3" y="439.9" width="2.8" height="2.5" fill="#4a4a4a"/>
<rect x="555.3" y="443.3" width="2.8" height="2.5" fill="#4a4a4a"/>
<rect x="555.3" y="446.7" width="2.8" height="2.5" fill="#4a4a4a"/>
<rect x="555.3" y="450.1" width="2.8" height="2.5" fill="#17b32a"/>
<rect x="555.3" y="453.5" width="2.8" height="2.5" fill="#17b32a"/>
<rect x="555.3" y="456.9" width="2.8" height="2.5" fill="#17b32a"/>
<rect x="555.3" y="460.3" width="2.8" height="2.5" fill="#17b32a"/>
<rect x="559.0" y="395.8" width="2.8" height="2.5" fill="#4a4a4a"/>
<rect x="559.0" y="399.2" width="2.8" height="2.5" fill="#4a4a4a"/>
<rect x="559.0" y="402.6" width="2.8" height="2.5" fill="#4a4a4a"/>
<rect x="559.0" y="406.0" width="2.8" height="2.5" fill="#4a4a4a"/>
<rect x="559.0" y="409.4" width="2.8" height="2.5" fill="#4a4a4a"/>
<rect x="559.0" y="412.8" width="2.8" height="2.5" fill="#4a4a4a"/>
<rect x="559.0" y="416.2" width="2.8" height="2.5" fill="#4a4a4a"/>
<rect x="559.0" y="419.6" width="2.8" height="2.5" fill="#4a4a4a"/>
<rect x="559.0" y="423.0" width="2.8" height="2.5" fill="#4a4a4a"/>
<rect x="559.0" y="426.4" width="2.8" height="2.5" fill="#4a4a4a"/>
<rect x="559.0" y="429.8" width="2.8" height="2.5" fill="#4a4a4a"/>
<rect x="559.0" y="433.1" width="2.8" height="2.5" fill="#4a4a4a"/>
<rect x="559.0" y="436.5" width="2.8" height="2.5" fill="#4a4a4a"/>
<rect x="559.0" y="439.9" width="2.8" height="2.5" fill="#4a4a4a"/>
<rect x="559.0" y="443.3" width="2.8" height="2.5" fill="#4a4a4a"/>
<rect x="559.0" y="446.7" width="2.8" height="2.5" fill="#4a4a4a"/>
<rect x="559.0" y="450.1" width="2.8" height="2.5" fill="#4a4a4a"/>
<rect x="559.0" y="453.5" width="2.8" height="2.5" fill="#4a4a4a"/>
<rect x="559.0" y="456.9" width="2.8" height="2.5" fill="#4a4a4a"/>
<rect x="559.0" y="460.3" width="2.8" height="2.5" fill="#17b32a"/>
<rect x="562.8" y="395.8" width="2.8" height="2.5" fill="#4a4a4a"/>
<rect x="562.8" y="399.2" width="2.8" height="2.5" fill="#4a4a4a"/>
<rect x="562.8" y="402.6" width="2.8" height="2.5" fill="#4a4a4a"/>
<rect x="562.8" y="406.0" width="2.8" height="2.5" fill="#4a4a4a"/>
<rect x="562.8" y="409.4" width="2.8" height="2.5" fill="#4a4a4a"/>
<rect x="562.8" y="412.8" width="2.8" height="2.5" fill="#4a4a4a"/>
<rect x="562.8" y="416.2" width="2.8" height="2.5" fill="#4a4a4a"/>
<rect x="562.8" y="419.6" width="2.8" height="2.5" fill="#4a4a4a"/>
<rect x="562.8" y="423.0" width="2.8" height="2.5" fill="#4a4a4a"/>
<rect x="562.8" y="426.4" width="2.8" height="2.5" fill="#4a4a4a"/>
<rect x="562.8" y="429.8" width="2.8" height="2.5" fill="#4a4a4a"/>
<rect x="562.8" y="433.1" width="2.8" height="2.5" fill="#4a4a4a"/>
<rect x="562.8" y="436.5" width="2.8" height="2.5" fill="#4a4a4a"/>
<rect x="562.8" y="439.9" width="2.8" height="2.5" fill="#4a4a4a"/>
<rect x="562.8" y="443.3" width="2.8" height="2.5" fill="#4a4a4a"/>
<rect x="562.8" y="446.7" width="2.8" height="2.5" fill="#4a4a4a"/>
<rect x="562.8" y="450.1" width="2.8" height="2.5" fill="#4a4a4a"/>
<rect x="562.8" y="453.5" width="2.8" height="2.5" fill="#4a4a4a"/>
<rect x="562.8" y="456.9" width="2.8" height="2.5" fill="#17b32a"/>
<rect x="562.8" y="460.3" width="2.8" height="2.5" fill="#17b32a"/>
<rect x="566.5" y="395.8" width="2.8" height="2.5" fill="#4a4a4a"/>
<rect x="566.5" y="399.2" width="2.8" height="2.5" fill="#4a4a4a"/>
<rect x="566.5" y="402.6" width="2.8" height="2.5" fill="#4a4a4a"/>
<rect x="566.5" y="406.0" width="2.8" height="2.5" fill="#4a4a4a"/>
<rect x="566.5" y="409.4" width="2.8" height="2.5" fill="#4a4a4a"/>
<rect x="566.5" y="412.8" width="2.8" height="2.5" fill="#4a4a4a"/>
<rect x="566.5" y="416.2" width="2.8" height="2.5" fill="#4a4a4a"/>
<rect x="566.5" y="419.6" width="2.8" height="2.5" fill="#4a4a4a"/>
<rect x="566.5" y="423.0" width="2.8" height="2.5" fill="#4a4a4a"/>
<rect x="566.5" y="426.4" width="2.8" height="2.5" fill="#4a4a4a"/>
<rect x="566.5" y="429.8" width="2.8" height="2.5" fill="#4a4a4a"/>
<rect x="566.5" y="433.1" width="2.8" height="2.5" fill="#4a4a4a"/>
<rect x="566.5" y="436.5" width="2.8" height="2.5" fill="#4a4a4a"/>
<rect x="566.5" y="439.9" width="2.8" height="2.5" fill="#4a4a4a"/>
<rect x="566.5" y="443.3" width="2.8" height="2.5" fill="#4a4a4a"/>
<rect x="566.5" y="446.7" width="2.8" height="2.5" fill="#4a4a4a"/>
<rect x="566.5" y="450.1" width="2.8" height="2.5" fill="#17b32a"/>
<rect x="566.5" y="453.5" width="2.8" height="2.5" fill="#17b32a"/>
<rect x="566.5" y="456.9" width="2.8" height="2.5" fill="#17b32a"/>
<rect x="566.5" y="460.3" width="2.8" height="2.5" fill="#17b32a"/>
<rect x="570.2" y="395.8" width="2.8" height="2.5" fill="#4a4a4a"/>
<rect x="570.2" y="399.2" width="2.8" height="2.5" fill="#4a4a4a"/>
<rect x="570.2" y="402.6" width="2.8" height="2.5" fill="#4a4a4a"/>
<rect x="570.2" y="406.0" width="2.8" height="2.5" fill="#4a4a4a"/>
<rect x="570.2" y="409.4" width="2.8" height="2.5" fill="#4a4a4a"/>
<rect x="570.2" y="412.8" width="2.8" height="2.5" fill="#4a4a4a"/>
<rect x="570.2" y="416.2" width="2.8" height="2.5" fill="#4a4a4a"/>
<rect x="570.2" y="419.6" width="2.8" height="2.5" fill="#4a4a4a"/>
<rect x="570.2" y="423.0" width="2.8" height="2.5" fill="#4a4a4a"/>
<rect x="570.2" y="426.4" width="2.8" height="2.5" fill="#4a4a4a"/>
<rect x="570.2" y="429.8" width="2.8" height="2.5" fill="#4a4a4a"/>
<rect x="570.2" y="433.1" width="2.8" height="2.5" fill="#4a4a4a"/>
<rect x="570.2" y="436.5" width="2.8" height="2.5" fill="#4a4a4a"/>
<rect x="570.2" y="439.9" width="2.8" height="2.5" fill="#4a4a4a"/>
<rect x="570.2" y="443.3" width="2.8" height="2.5" fill="#4a4a4a"/>
<rect x="570.2" y="446.7" width="2.8" height="2.5" fill="#4a4a4a"/>
<rect x="570.2" y="450.1" width="2.8" height="2.5" fill="#4a4a4a"/>
<rect x="570.2" y="453.5" width="2.8" height="2.5" fill="#4a4a4a"/>
<rect x="570.2" y="456.9" width="2.8" height="2.5" fill="#17b32a"/>
<rect x="570.2" y="460.3" width="2.8" height="2.5" fill="#17b32a"/>
<rect x="578.2" y="393.8" width="73" height="71.9" fill="#fff"/>
<circle cx="614.6" cy="429.7" r="21.3" fill="none" stroke="#cc2200" stroke-width="6.2"/>
</svg>
<div class="ob" style="left:320.4px;top:474.9px;width:194.6px;height:13.2px;background:linear-gradient(to bottom,#6a6a6a 0,#6a6a6a 2.6px,#333 2.6px,#333 10.600000000000046px,#6a6a6a 10.600000000000046px,#6a6a6a 100%);font-size:8.2px;line-height:13.2px;padding-left:2.6px;padding-top:1.1px;color:#fff">mc.unpack~ 20</div>
<div class="ob" style="left:320.4px;top:505.6px;width:266.6px;height:13.3px;background:linear-gradient(to bottom,#6a6a6a 0,#6a6a6a 2.7px,#333 2.7px,#333 10.599999999999955px,#6a6a6a 10.599999999999955px,#6a6a6a 100%);font-size:8.2px;line-height:13.3px;padding-left:2.6px;padding-top:1.1px;color:#fff">ambiencode~ 5 20</div>
<div class="ob" style="left:703.2px;top:202.0px;width:112.3px;height:15.2px;background:#333;border-top:2.5px solid #ff1a1a;border-bottom:2.5px solid #ff1a1a;color:#fff;font-size:8.2px;line-height:10.2px;padding-left:2.6px">p snapshots_virtualSpeakers</div>
<div class="ob" style="left:818.4px;top:202.0px;width:22.8px;height:15.2px;background:#3b3b3b;border-radius:3px;font-size:8.2px;line-height:15.2px;padding-left:3px;padding-top:1.1px;color:#fff">read</div>
<div class="ob" style="left:703.2px;top:246.4px;width:99.6px;height:15.0px;background:#333;border-top:2.5px solid #ff1a1a;border-bottom:2.5px solid #ff1a1a;color:#fff;font-size:8.2px;line-height:10.0px;padding-left:2.6px">p virtualSpeakerPositions</div>
<div class="ob" style="left:703.2px;top:265.9px;width:111.8px;height:15.0px;background:#333;border-top:2.5px solid #ff1a1a;border-bottom:2.5px solid #ff1a1a;color:#fff;font-size:8.2px;line-height:10.0px;padding-left:2.6px">p multislider_virtualSpeakers</div>
<div class="t" style="left:706.0px;top:290.9px;font-size:8.2px;line-height:9.8px;color:#1a1a1a;">virtual speaker positions</div>
<div class="ob" style="left:818.4px;top:288.8px;width:24.3px;height:14.6px;background:#3b3b3b;border-radius:3px;font-size:8.2px;line-height:14.6px;padding-left:3px;padding-top:1.1px;color:#fff">clear</div>
<div class="ob" style="left:703.2px;top:525.0px;width:92.8px;height:15.0px;background:#333;border-top:2.5px solid #2fa82f;border-bottom:2.5px solid #2fa82f;color:#fff;font-size:8.2px;line-height:10.0px;padding-left:2.6px">p coll_speakerPositions</div>
<div class="ob" style="left:804.2px;top:525.0px;width:24.9px;height:15.0px;background:#333;border-top:2.5px solid #2fa82f;border-bottom:2.5px solid #2fa82f;color:#fff;font-size:8.2px;line-height:10.0px;padding-left:2.6px">p coll</div>
<div class="ob" style="left:829.1px;top:578.3px;width:80.7px;height:14.7px;background:linear-gradient(to bottom,#6a6a6a 0,#6a6a6a 2.9px,#333 2.9px,#333 11.800000000000045px,#6a6a6a 11.800000000000045px,#6a6a6a 100%);font-size:8.2px;line-height:14.7px;padding-left:2.6px;padding-top:1.1px;color:#fff">route snapshotmenu</div>
<div class="ob" style="left:829.1px;top:603.2px;width:34.1px;height:14.6px;background:#3b3b3b;border-radius:3px;font-size:8.2px;line-height:14.6px;padding-left:3px;padding-top:1.1px;color:#fff">"26"</div>
<div class="t" style="left:866.7px;top:605.9px;font-size:8.2px;line-height:9.8px;color:#1a1a1a;">snapshot #</div>
<svg width="2070" height="720">
<rect x="703.7" y="305.3" width="138" height="209.7" fill="#fff" stroke="#c8c8c8" stroke-width="0.8"/>
<defs><clipPath id="cu"><rect x="706.3" y="307.5" width="131.7" height="132.2"/></clipPath><clipPath id="cl"><rect x="706.3" y="445.8" width="131.7" height="67.5"/></clipPath></defs>
<g clip-path="url(#cu)">
<rect x="706.3" y="307.5" width="131.7" height="132.2" fill="#fbfbff"/>
<circle cx="772.2" cy="373.3" r="66" fill="#dcdcdc"/>
<line x1="706.3" y1="307.5" x2="706.3" y2="439.7" stroke="#c9c9f4" stroke-width="0.6"/>
<line x1="712.6" y1="307.5" x2="712.6" y2="439.7" stroke="#c9c9f4" stroke-width="0.6"/>
<line x1="718.9" y1="307.5" x2="718.9" y2="439.7" stroke="#c9c9f4" stroke-width="0.6"/>
<line x1="725.2" y1="307.5" x2="725.2" y2="439.7" stroke="#c9c9f4" stroke-width="0.6"/>
<line x1="731.5" y1="307.5" x2="731.5" y2="439.7" stroke="#c9c9f4" stroke-width="0.6"/>
<line x1="737.8" y1="307.5" x2="737.8" y2="439.7" stroke="#c9c9f4" stroke-width="0.6"/>
<line x1="744.1" y1="307.5" x2="744.1" y2="439.7" stroke="#c9c9f4" stroke-width="0.6"/>
<line x1="750.4" y1="307.5" x2="750.4" y2="439.7" stroke="#c9c9f4" stroke-width="0.6"/>
<line x1="756.7" y1="307.5" x2="756.7" y2="439.7" stroke="#c9c9f4" stroke-width="0.6"/>
<line x1="763.0" y1="307.5" x2="763.0" y2="439.7" stroke="#c9c9f4" stroke-width="0.6"/>
<line x1="769.3" y1="307.5" x2="769.3" y2="439.7" stroke="#c9c9f4" stroke-width="0.6"/>
<line x1="775.6" y1="307.5" x2="775.6" y2="439.7" stroke="#c9c9f4" stroke-width="0.6"/>
<line x1="781.9" y1="307.5" x2="781.9" y2="439.7" stroke="#c9c9f4" stroke-width="0.6"/>
<line x1="788.2" y1="307.5" x2="788.2" y2="439.7" stroke="#c9c9f4" stroke-width="0.6"/>
<line x1="794.5" y1="307.5" x2="794.5" y2="439.7" stroke="#c9c9f4" stroke-width="0.6"/>
<line x1="800.8" y1="307.5" x2="800.8" y2="439.7" stroke="#c9c9f4" stroke-width="0.6"/>
<line x1="807.1" y1="307.5" x2="807.1" y2="439.7" stroke="#c9c9f4" stroke-width="0.6"/>
<line x1="813.4" y1="307.5" x2="813.4" y2="439.7" stroke="#c9c9f4" stroke-width="0.6"/>
<line x1="819.7" y1="307.5" x2="819.7" y2="439.7" stroke="#c9c9f4" stroke-width="0.6"/>
<line x1="826.0" y1="307.5" x2="826.0" y2="439.7" stroke="#c9c9f4" stroke-width="0.6"/>
<line x1="832.3" y1="307.5" x2="832.3" y2="439.7" stroke="#c9c9f4" stroke-width="0.6"/>
<line x1="706.3" y1="307.5" x2="838" y2="307.5" stroke="#c9c9f4" stroke-width="0.6"/>
<line x1="706.3" y1="313.8" x2="838" y2="313.8" stroke="#c9c9f4" stroke-width="0.6"/>
<line x1="706.3" y1="320.1" x2="838" y2="320.1" stroke="#c9c9f4" stroke-width="0.6"/>
<line x1="706.3" y1="326.4" x2="838" y2="326.4" stroke="#c9c9f4" stroke-width="0.6"/>
<line x1="706.3" y1="332.7" x2="838" y2="332.7" stroke="#c9c9f4" stroke-width="0.6"/>
<line x1="706.3" y1="339.0" x2="838" y2="339.0" stroke="#c9c9f4" stroke-width="0.6"/>
<line x1="706.3" y1="345.3" x2="838" y2="345.3" stroke="#c9c9f4" stroke-width="0.6"/>
<line x1="706.3" y1="351.6" x2="838" y2="351.6" stroke="#c9c9f4" stroke-width="0.6"/>
<line x1="706.3" y1="357.9" x2="838" y2="357.9" stroke="#c9c9f4" stroke-width="0.6"/>
<line x1="706.3" y1="364.2" x2="838" y2="364.2" stroke="#c9c9f4" stroke-width="0.6"/>
<line x1="706.3" y1="370.5" x2="838" y2="370.5" stroke="#c9c9f4" stroke-width="0.6"/>
<line x1="706.3" y1="376.8" x2="838" y2="376.8" stroke="#c9c9f4" stroke-width="0.6"/>
<line x1="706.3" y1="383.1" x2="838" y2="383.1" stroke="#c9c9f4" stroke-width="0.6"/>
<line x1="706.3" y1="389.4" x2="838" y2="389.4" stroke="#c9c9f4" stroke-width="0.6"/>
<line x1="706.3" y1="395.7" x2="838" y2="395.7" stroke="#c9c9f4" stroke-width="0.6"/>
<line x1="706.3" y1="402.0" x2="838" y2="402.0" stroke="#c9c9f4" stroke-width="0.6"/>
<line x1="706.3" y1="408.3" x2="838" y2="408.3" stroke="#c9c9f4" stroke-width="0.6"/>
<line x1="706.3" y1="414.6" x2="838" y2="414.6" stroke="#c9c9f4" stroke-width="0.6"/>
<line x1="706.3" y1="420.9" x2="838" y2="420.9" stroke="#c9c9f4" stroke-width="0.6"/>
<line x1="706.3" y1="427.2" x2="838" y2="427.2" stroke="#c9c9f4" stroke-width="0.6"/>
<line x1="706.3" y1="433.5" x2="838" y2="433.5" stroke="#c9c9f4" stroke-width="0.6"/>
<line x1="706.3" y1="439.8" x2="838" y2="439.8" stroke="#c9c9f4" stroke-width="0.6"/>
<line x1="772.2" y1="307.5" x2="772.2" y2="439.7" stroke="#a9a9f0" stroke-width="0.9"/>
<line x1="706.3" y1="373.3" x2="838" y2="373.3" stroke="#a9a9f0" stroke-width="0.9"/>
</g>
<g clip-path="url(#cl)">
<rect x="706.3" y="445.8" width="131.7" height="67.5" fill="#fbfbff"/>
<circle cx="772.2" cy="513" r="66" fill="#dcdcdc"/>
<line x1="706.3" y1="445.8" x2="706.3" y2="513.3" stroke="#c9c9f4" stroke-width="0.6"/>
<line x1="712.6" y1="445.8" x2="712.6" y2="513.3" stroke="#c9c9f4" stroke-width="0.6"/>
<line x1="718.9" y1="445.8" x2="718.9" y2="513.3" stroke="#c9c9f4" stroke-width="0.6"/>
<line x1="725.2" y1="445.8" x2="725.2" y2="513.3" stroke="#c9c9f4" stroke-width="0.6"/>
<line x1="731.5" y1="445.8" x2="731.5" y2="513.3" stroke="#c9c9f4" stroke-width="0.6"/>
<line x1="737.8" y1="445.8" x2="737.8" y2="513.3" stroke="#c9c9f4" stroke-width="0.6"/>
<line x1="744.1" y1="445.8" x2="744.1" y2="513.3" stroke="#c9c9f4" stroke-width="0.6"/>
<line x1="750.4" y1="445.8" x2="750.4" y2="513.3" stroke="#c9c9f4" stroke-width="0.6"/>
<line x1="756.7" y1="445.8" x2="756.7" y2="513.3" stroke="#c9c9f4" stroke-width="0.6"/>
<line x1="763.0" y1="445.8" x2="763.0" y2="513.3" stroke="#c9c9f4" stroke-width="0.6"/>
<line x1="769.3" y1="445.8" x2="769.3" y2="513.3" stroke="#c9c9f4" stroke-width="0.6"/>
<line x1="775.6" y1="445.8" x2="775.6" y2="513.3" stroke="#c9c9f4" stroke-width="0.6"/>
<line x1="781.9" y1="445.8" x2="781.9" y2="513.3" stroke="#c9c9f4" stroke-width="0.6"/>
<line x1="788.2" y1="445.8" x2="788.2" y2="513.3" stroke="#c9c9f4" stroke-width="0.6"/>
<line x1="794.5" y1="445.8" x2="794.5" y2="513.3" stroke="#c9c9f4" stroke-width="0.6"/>
<line x1="800.8" y1="445.8" x2="800.8" y2="513.3" stroke="#c9c9f4" stroke-width="0.6"/>
<line x1="807.1" y1="445.8" x2="807.1" y2="513.3" stroke="#c9c9f4" stroke-width="0.6"/>
<line x1="813.4" y1="445.8" x2="813.4" y2="513.3" stroke="#c9c9f4" stroke-width="0.6"/>
<line x1="819.7" y1="445.8" x2="819.7" y2="513.3" stroke="#c9c9f4" stroke-width="0.6"/>
<line x1="826.0" y1="445.8" x2="826.0" y2="513.3" stroke="#c9c9f4" stroke-width="0.6"/>
<line x1="832.3" y1="445.8" x2="832.3" y2="513.3" stroke="#c9c9f4" stroke-width="0.6"/>
<line x1="706.3" y1="445.8" x2="838" y2="445.8" stroke="#c9c9f4" stroke-width="0.6"/>
<line x1="706.3" y1="452.1" x2="838" y2="452.1" stroke="#c9c9f4" stroke-width="0.6"/>
<line x1="706.3" y1="458.4" x2="838" y2="458.4" stroke="#c9c9f4" stroke-width="0.6"/>
<line x1="706.3" y1="464.7" x2="838" y2="464.7" stroke="#c9c9f4" stroke-width="0.6"/>
<line x1="706.3" y1="471.0" x2="838" y2="471.0" stroke="#c9c9f4" stroke-width="0.6"/>
<line x1="706.3" y1="477.3" x2="838" y2="477.3" stroke="#c9c9f4" stroke-width="0.6"/>
<line x1="706.3" y1="483.6" x2="838" y2="483.6" stroke="#c9c9f4" stroke-width="0.6"/>
<line x1="706.3" y1="489.9" x2="838" y2="489.9" stroke="#c9c9f4" stroke-width="0.6"/>
<line x1="706.3" y1="496.2" x2="838" y2="496.2" stroke="#c9c9f4" stroke-width="0.6"/>
<line x1="706.3" y1="502.5" x2="838" y2="502.5" stroke="#c9c9f4" stroke-width="0.6"/>
<line x1="706.3" y1="508.8" x2="838" y2="508.8" stroke="#c9c9f4" stroke-width="0.6"/>
<line x1="772.2" y1="445.8" x2="772.2" y2="513.3" stroke="#a9a9f0" stroke-width="0.9"/>
</g>
<circle cx="738.3" cy="308.7" r="1.8" fill="none" stroke="#222" stroke-width="0.9"/>
<text x="743.8" y="311.7" font-size="8.4" fill="#111" font-family="Liberation Sans">1</text>
<circle cx="811.3" cy="320.8" r="1.8" fill="none" stroke="#222" stroke-width="0.9"/>
<text x="816.8" y="323.8" font-size="8.4" fill="#111" font-family="Liberation Sans">17</text>
<circle cx="775" cy="326.3" r="1.8" fill="none" stroke="#222" stroke-width="0.9"/>
<text x="780.5" y="329.3" font-size="8.4" fill="#111" font-family="Liberation Sans">20</text>
<circle cx="820.3" cy="337.5" r="1.8" fill="none" stroke="#222" stroke-width="0.9"/>
<text x="825.8" y="340.5" font-size="8.4" fill="#111" font-family="Liberation Sans">16</text>
<circle cx="817.8" cy="340.8" r="1.8" fill="none" stroke="#222" stroke-width="0.9"/>
<text x="823.3" y="343.8" font-size="8.4" fill="#111" font-family="Liberation Sans">11</text>
<circle cx="823.3" cy="362.8" r="1.8" fill="none" stroke="#222" stroke-width="0.9"/>
<text x="828.8" y="365.8" font-size="8.4" fill="#111" font-family="Liberation Sans">15</text>
<circle cx="823.8" cy="362.8" r="1.8" fill="none" stroke="#222" stroke-width="0.9"/>
<text x="829.3" y="365.8" font-size="8.4" fill="#111" font-family="Liberation Sans">18</text>
<circle cx="735.8" cy="382.2" r="1.8" fill="none" stroke="#222" stroke-width="0.9"/>
<text x="741.3" y="385.2" font-size="8.4" fill="#111" font-family="Liberation Sans">4</text>
<circle cx="821.2" cy="392.5" r="1.8" fill="none" stroke="#222" stroke-width="0.9"/>
<text x="826.7" y="395.5" font-size="8.4" fill="#111" font-family="Liberation Sans">18</text>
<circle cx="819.2" cy="398" r="1.8" fill="none" stroke="#222" stroke-width="0.9"/>
<text x="824.7" y="401.0" font-size="8.4" fill="#111" font-family="Liberation Sans">12</text>
<circle cx="706.3" cy="400.8" r="1.8" fill="none" stroke="#222" stroke-width="0.9"/>
<text x="711.8" y="403.8" font-size="8.4" fill="#111" font-family="Liberation Sans">5</text>
<circle cx="738.3" cy="408.8" r="1.8" fill="none" stroke="#222" stroke-width="0.9"/>
<text x="743.8" y="411.8" font-size="8.4" fill="#111" font-family="Liberation Sans">9</text>
<circle cx="794.7" cy="409.2" r="1.8" fill="none" stroke="#222" stroke-width="0.9"/>
<text x="800.2" y="412.2" font-size="8.4" fill="#111" font-family="Liberation Sans">14</text>
<circle cx="730.5" cy="414.2" r="1.8" fill="none" stroke="#222" stroke-width="0.9"/>
<text x="736.0" y="417.2" font-size="8.4" fill="#111" font-family="Liberation Sans">2</text>
<circle cx="814.5" cy="412.5" r="1.8" fill="none" stroke="#222" stroke-width="0.9"/>
<text x="820.0" y="415.5" font-size="8.4" fill="#111" font-family="Liberation Sans">13</text>
<circle cx="709.5" cy="421.7" r="1.8" fill="none" stroke="#222" stroke-width="0.9"/>
<text x="715.0" y="424.7" font-size="8.4" fill="#111" font-family="Liberation Sans">6</text>
<circle cx="748.8" cy="427" r="1.8" fill="none" stroke="#222" stroke-width="0.9"/>
<text x="754.3" y="430.0" font-size="8.4" fill="#111" font-family="Liberation Sans">3</text>
<circle cx="792.5" cy="434.5" r="1.8" fill="none" stroke="#222" stroke-width="0.9"/>
<text x="798.0" y="437.5" font-size="8.4" fill="#111" font-family="Liberation Sans">8</text>
<circle cx="718.7" cy="438.3" r="1.8" fill="none" stroke="#222" stroke-width="0.9"/>
<text x="724.2" y="441.3" font-size="8.4" fill="#111" font-family="Liberation Sans">7</text>
<circle cx="738.3" cy="449.7" r="1.8" fill="none" stroke="#222" stroke-width="0.9"/>
<text x="743.8" y="452.7" font-size="8.4" fill="#111" font-family="Liberation Sans">9</text>
<circle cx="738.3" cy="459.7" r="1.8" fill="none" stroke="#222" stroke-width="0.9"/>
<text x="743.8" y="462.7" font-size="8.4" fill="#111" font-family="Liberation Sans">1</text>
<circle cx="748.8" cy="462.5" r="1.8" fill="none" stroke="#222" stroke-width="0.9"/>
<text x="754.3" y="465.5" font-size="8.4" fill="#111" font-family="Liberation Sans">3</text>
<circle cx="794.7" cy="457.8" r="1.8" fill="none" stroke="#222" stroke-width="0.9"/>
<text x="800.2" y="460.8" font-size="8.4" fill="#111" font-family="Liberation Sans">14</text>
<circle cx="820.8" cy="459.7" r="1.8" fill="none" stroke="#222" stroke-width="0.9"/>
<text x="826.3" y="462.7" font-size="8.4" fill="#111" font-family="Liberation Sans">16</text>
<circle cx="819" cy="461.7" r="1.8" fill="none" stroke="#222" stroke-width="0.9"/>
<text x="824.5" y="464.7" font-size="8.4" fill="#111" font-family="Liberation Sans">12</text>
<circle cx="718.7" cy="476.7" r="1.8" fill="none" stroke="#222" stroke-width="0.9"/>
<text x="724.2" y="479.7" font-size="8.4" fill="#111" font-family="Liberation Sans">7</text>
<circle cx="735.8" cy="477.8" r="1.8" fill="none" stroke="#222" stroke-width="0.9"/>
<text x="741.3" y="480.8" font-size="8.4" fill="#111" font-family="Liberation Sans">4</text>
<circle cx="708.3" cy="479.7" r="1.8" fill="none" stroke="#222" stroke-width="0.9"/>
<text x="713.8" y="482.7" font-size="8.4" fill="#111" font-family="Liberation Sans">10</text>
<circle cx="713" cy="479.7" r="1.8" fill="none" stroke="#222" stroke-width="0.9"/>
<text x="718.5" y="482.7" font-size="8.4" fill="#111" font-family="Liberation Sans">5</text>
<circle cx="730.5" cy="492.2" r="1.8" fill="none" stroke="#222" stroke-width="0.9"/>
<text x="736.0" y="495.2" font-size="8.4" fill="#111" font-family="Liberation Sans">2</text>
<circle cx="792.5" cy="487.8" r="1.8" fill="none" stroke="#222" stroke-width="0.9"/>
<text x="798.0" y="490.8" font-size="8.4" fill="#111" font-family="Liberation Sans">8</text>
<circle cx="775" cy="496.2" r="1.8" fill="none" stroke="#222" stroke-width="0.9"/>
<text x="780.5" y="499.2" font-size="8.4" fill="#111" font-family="Liberation Sans">20</text>
<circle cx="811.7" cy="481.2" r="1.8" fill="none" stroke="#222" stroke-width="0.9"/>
<circle cx="814.5" cy="481.2" r="1.8" fill="none" stroke="#222" stroke-width="0.9"/>
<circle cx="817.3" cy="481.2" r="1.8" fill="none" stroke="#222" stroke-width="0.9"/>
<circle cx="820" cy="481.2" r="1.8" fill="none" stroke="#222" stroke-width="0.9"/>
<circle cx="822.5" cy="481.2" r="1.8" fill="none" stroke="#222" stroke-width="0.9"/>
<text x="828.0" y="484.2" font-size="8.4" fill="#111" font-family="Liberation Sans">0</text>
<circle cx="823.5" cy="481.2" r="1.8" fill="none" stroke="#222" stroke-width="0.9"/>
<text x="829.0" y="484.2" font-size="8.4" fill="#111" font-family="Liberation Sans">815</text>
</svg>
<div class="ob" style="left:235.8px;top:584.0px;width:49.0px;height:14.3px;background:linear-gradient(to bottom,#6a6a6a 0,#6a6a6a 2.9px,#333 2.9px,#333 11.399999999999954px,#6a6a6a 11.399999999999954px,#6a6a6a 100%);font-size:8.2px;line-height:14.3px;padding-left:2.6px;padding-top:1.1px;color:#fff">send~ acn0</div>
<svg width="2070" height="720"><path d="M240.3 584.3a2.2 2.2 0 0 0 4.4 0" fill="#222" stroke="#e49a88" stroke-width="0.7"/></svg>
<div class="ob" style="left:235.8px;top:603.3px;width:49.0px;height:14.2px;background:linear-gradient(to bottom,#6a6a6a 0,#6a6a6a 2.8px,#333 2.8px,#333 11.400000000000045px,#6a6a6a 11.400000000000045px,#6a6a6a 100%);font-size:8.2px;line-height:14.2px;padding-left:2.6px;padding-top:1.1px;color:#fff">send~ acn1</div>
<svg width="2070" height="720"><path d="M240.3 603.6a2.2 2.2 0 0 0 4.4 0" fill="#222" stroke="#e49a88" stroke-width="0.7"/></svg>
<div class="ob" style="left:235.8px;top:621.4px;width:49.0px;height:14.3px;background:linear-gradient(to bottom,#6a6a6a 0,#6a6a6a 2.9px,#333 2.9px,#333 11.400000000000068px,#6a6a6a 11.400000000000068px,#6a6a6a 100%);font-size:8.2px;line-height:14.3px;padding-left:2.6px;padding-top:1.1px;color:#fff">send~ acn2</div>
<svg width="2070" height="720"><path d="M240.3 621.7a2.2 2.2 0 0 0 4.4 0" fill="#222" stroke="#e49a88" stroke-width="0.7"/></svg>
<div class="ob" style="left:235.8px;top:638.1px;width:49.0px;height:14.5px;background:linear-gradient(to bottom,#6a6a6a 0,#6a6a6a 2.9px,#333 2.9px,#333 11.6px,#6a6a6a 11.6px,#6a6a6a 100%);font-size:8.2px;line-height:14.5px;padding-left:2.6px;padding-top:1.1px;color:#fff">send~ acn3</div>
<svg width="2070" height="720"><path d="M240.3 638.4a2.2 2.2 0 0 0 4.4 0" fill="#222" stroke="#e49a88" stroke-width="0.7"/></svg>
<div class="ob" style="left:289.4px;top:584.0px;width:48.6px;height:14.3px;background:linear-gradient(to bottom,#6a6a6a 0,#6a6a6a 2.9px,#333 2.9px,#333 11.399999999999954px,#6a6a6a 11.399999999999954px,#6a6a6a 100%);font-size:8.2px;line-height:14.3px;padding-left:2.6px;padding-top:1.1px;color:#fff">send~ acn4</div>
<svg width="2070" height="720"><path d="M293.9 584.3a2.2 2.2 0 0 0 4.4 0" fill="#222" stroke="#e49a88" stroke-width="0.7"/></svg>
<div class="ob" style="left:289.4px;top:603.3px;width:48.6px;height:14.2px;background:linear-gradient(to bottom,#6a6a6a 0,#6a6a6a 2.8px,#333 2.8px,#333 11.400000000000045px,#6a6a6a 11.400000000000045px,#6a6a6a 100%);font-size:8.2px;line-height:14.2px;padding-left:2.6px;padding-top:1.1px;color:#fff">send~ acn5</div>
<svg width="2070" height="720"><path d="M293.9 603.6a2.2 2.2 0 0 0 4.4 0" fill="#222" stroke="#e49a88" stroke-width="0.7"/></svg>
<div class="ob" style="left:289.4px;top:621.4px;width:48.6px;height:14.3px;background:linear-gradient(to bottom,#6a6a6a 0,#6a6a6a 2.9px,#333 2.9px,#333 11.400000000000068px,#6a6a6a 11.400000000000068px,#6a6a6a 100%);font-size:8.2px;line-height:14.3px;padding-left:2.6px;padding-top:1.1px;color:#fff">send~ acn6</div>
<svg width="2070" height="720"><path d="M293.9 621.7a2.2 2.2 0 0 0 4.4 0" fill="#222" stroke="#e49a88" stroke-width="0.7"/></svg>
<div class="ob" style="left:289.4px;top:638.1px;width:48.6px;height:14.5px;background:linear-gradient(to bottom,#6a6a6a 0,#6a6a6a 2.9px,#333 2.9px,#333 11.6px,#6a6a6a 11.6px,#6a6a6a 100%);font-size:8.2px;line-height:14.5px;padding-left:2.6px;padding-top:1.1px;color:#fff">send~ acn7</div>
<svg width="2070" height="720"><path d="M293.9 638.4a2.2 2.2 0 0 0 4.4 0" fill="#222" stroke="#e49a88" stroke-width="0.7"/></svg>
<div class="ob" style="left:343.5px;top:584.0px;width:48.5px;height:14.3px;background:linear-gradient(to bottom,#6a6a6a 0,#6a6a6a 2.9px,#333 2.9px,#333 11.399999999999954px,#6a6a6a 11.399999999999954px,#6a6a6a 100%);font-size:8.2px;line-height:14.3px;padding-left:2.6px;padding-top:1.1px;color:#fff">send~ acn8</div>
<svg width="2070" height="720"><path d="M348.0 584.3a2.2 2.2 0 0 0 4.4 0" fill="#222" stroke="#e49a88" stroke-width="0.7"/></svg>
<div class="ob" style="left:343.5px;top:603.3px;width:48.5px;height:14.2px;background:linear-gradient(to bottom,#6a6a6a 0,#6a6a6a 2.8px,#333 2.8px,#333 11.400000000000045px,#6a6a6a 11.400000000000045px,#6a6a6a 100%);font-size:8.2px;line-height:14.2px;padding-left:2.6px;padding-top:1.1px;color:#fff">send~ acn9</div>
<svg width="2070" height="720"><path d="M348.0 603.6a2.2 2.2 0 0 0 4.4 0" fill="#222" stroke="#e49a88" stroke-width="0.7"/></svg>
<div class="ob" style="left:343.5px;top:621.4px;width:52.9px;height:14.3px;background:linear-gradient(to bottom,#6a6a6a 0,#6a6a6a 2.9px,#333 2.9px,#333 11.400000000000068px,#6a6a6a 11.400000000000068px,#6a6a6a 100%);font-size:8.2px;line-height:14.3px;padding-left:2.6px;padding-top:1.1px;color:#fff">send~ acn10</div>
<svg width="2070" height="720"><path d="M348.0 621.7a2.2 2.2 0 0 0 4.4 0" fill="#222" stroke="#e49a88" stroke-width="0.7"/></svg>
<div class="ob" style="left:343.5px;top:638.1px;width:52.9px;height:14.5px;background:linear-gradient(to bottom,#6a6a6a 0,#6a6a6a 2.9px,#333 2.9px,#333 11.6px,#6a6a6a 11.6px,#6a6a6a 100%);font-size:8.2px;line-height:14.5px;padding-left:2.6px;padding-top:1.1px;color:#fff">send~ acn11</div>
<svg width="2070" height="720"><path d="M348.0 638.4a2.2 2.2 0 0 0 4.4 0" fill="#222" stroke="#e49a88" stroke-width="0.7"/></svg>
<div class="ob" style="left:401.3px;top:584.0px;width:53.7px;height:14.3px;background:linear-gradient(to bottom,#6a6a6a 0,#6a6a6a 2.9px,#333 2.9px,#333 11.399999999999954px,#6a6a6a 11.399999999999954px,#6a6a6a 100%);font-size:8.2px;line-height:14.3px;padding-left:2.6px;padding-top:1.1px;color:#fff">send~ acn12</div>
<svg width="2070" height="720"><path d="M405.8 584.3a2.2 2.2 0 0 0 4.4 0" fill="#222" stroke="#e49a88" stroke-width="0.7"/></svg>
<div class="ob" style="left:401.3px;top:603.3px;width:53.7px;height:14.2px;background:linear-gradient(to bottom,#6a6a6a 0,#6a6a6a 2.8px,#333 2.8px,#333 11.400000000000045px,#6a6a6a 11.400000000000045px,#6a6a6a 100%);font-size:8.2px;line-height:14.2px;padding-left:2.6px;padding-top:1.1px;color:#fff">send~ acn13</div>
<svg width="2070" height="720"><path d="M405.8 603.6a2.2 2.2 0 0 0 4.4 0" fill="#222" stroke="#e49a88" stroke-width="0.7"/></svg>
<div class="ob" style="left:401.3px;top:621.4px;width:53.7px;height:14.3px;background:linear-gradient(to bottom,#6a6a6a 0,#6a6a6a 2.9px,#333 2.9px,#333 11.400000000000068px,#6a6a6a 11.400000000000068px,#6a6a6a 100%);font-size:8.2px;line-height:14.3px;padding-left:2.6px;padding-top:1.1px;color:#fff">send~ acn14</div>
<svg width="2070" height="720"><path d="M405.8 621.7a2.2 2.2 0 0 0 4.4 0" fill="#222" stroke="#e49a88" stroke-width="0.7"/></svg>
<div class="ob" style="left:401.3px;top:638.1px;width:53.7px;height:14.5px;background:linear-gradient(to bottom,#6a6a6a 0,#6a6a6a 2.9px,#333 2.9px,#333 11.6px,#6a6a6a 11.6px,#6a6a6a 100%);font-size:8.2px;line-height:14.5px;padding-left:2.6px;padding-top:1.1px;color:#fff">send~ acn15</div>
<svg width="2070" height="720"><path d="M405.8 638.4a2.2 2.2 0 0 0 4.4 0" fill="#222" stroke="#e49a88" stroke-width="0.7"/></svg>
<div class="ob" style="left:464.8px;top:584.0px;width:53.3px;height:14.3px;background:linear-gradient(to bottom,#6a6a6a 0,#6a6a6a 2.9px,#333 2.9px,#333 11.399999999999954px,#6a6a6a 11.399999999999954px,#6a6a6a 100%);font-size:8.2px;line-height:14.3px;padding-left:2.6px;padding-top:1.1px;color:#fff">send~ acn16</div>
<svg width="2070" height="720"><path d="M469.3 584.3a2.2 2.2 0 0 0 4.4 0" fill="#222" stroke="#e49a88" stroke-width="0.7"/></svg>
<div class="ob" style="left:464.8px;top:603.3px;width:53.3px;height:14.2px;background:linear-gradient(to bottom,#6a6a6a 0,#6a6a6a 2.8px,#333 2.8px,#333 11.400000000000045px,#6a6a6a 11.400000000000045px,#6a6a6a 100%);font-size:8.2px;line-height:14.2px;padding-left:2.6px;padding-top:1.1px;color:#fff">send~ acn17</div>
<svg width="2070" height="720"><path d="M469.3 603.6a2.2 2.2 0 0 0 4.4 0" fill="#222" stroke="#e49a88" stroke-width="0.7"/></svg>
<div class="ob" style="left:464.8px;top:621.4px;width:53.3px;height:14.3px;background:linear-gradient(to bottom,#6a6a6a 0,#6a6a6a 2.9px,#333 2.9px,#333 11.400000000000068px,#6a6a6a 11.400000000000068px,#6a6a6a 100%);font-size:8.2px;line-height:14.3px;padding-left:2.6px;padding-top:1.1px;color:#fff">send~ acn18</div>
<svg width="2070" height="720"><path d="M469.3 621.7a2.2 2.2 0 0 0 4.4 0" fill="#222" stroke="#e49a88" stroke-width="0.7"/></svg>
<div class="ob" style="left:464.8px;top:638.1px;width:53.3px;height:14.5px;background:linear-gradient(to bottom,#6a6a6a 0,#6a6a6a 2.9px,#333 2.9px,#333 11.6px,#6a6a6a 11.6px,#6a6a6a 100%);font-size:8.2px;line-height:14.5px;padding-left:2.6px;padding-top:1.1px;color:#fff">send~ acn19</div>
<svg width="2070" height="720"><path d="M469.3 638.4a2.2 2.2 0 0 0 4.4 0" fill="#222" stroke="#e49a88" stroke-width="0.7"/></svg>
<div class="ob" style="left:528.1px;top:584.0px;width:53.6px;height:14.3px;background:linear-gradient(to bottom,#6a6a6a 0,#6a6a6a 2.9px,#333 2.9px,#333 11.399999999999954px,#6a6a6a 11.399999999999954px,#6a6a6a 100%);font-size:8.2px;line-height:14.3px;padding-left:2.6px;padding-top:1.1px;color:#fff">send~ acn20</div>
<svg width="2070" height="720"><path d="M532.6 584.3a2.2 2.2 0 0 0 4.4 0" fill="#222" stroke="#e49a88" stroke-width="0.7"/></svg>
<div class="ob" style="left:528.1px;top:603.3px;width:53.6px;height:14.2px;background:linear-gradient(to bottom,#6a6a6a 0,#6a6a6a 2.8px,#333 2.8px,#333 11.400000000000045px,#6a6a6a 11.400000000000045px,#6a6a6a 100%);font-size:8.2px;line-height:14.2px;padding-left:2.6px;padding-top:1.1px;color:#fff">send~ acn21</div>
<svg width="2070" height="720"><path d="M532.6 603.6a2.2 2.2 0 0 0 4.4 0" fill="#222" stroke="#e49a88" stroke-width="0.7"/></svg>
<div class="ob" style="left:528.1px;top:621.4px;width:53.6px;height:14.3px;background:linear-gradient(to bottom,#6a6a6a 0,#6a6a6a 2.9px,#333 2.9px,#333 11.400000000000068px,#6a6a6a 11.400000000000068px,#6a6a6a 100%);font-size:8.2px;line-height:14.3px;padding-left:2.6px;padding-top:1.1px;color:#fff">send~ acn22</div>
<svg width="2070" height="720"><path d="M532.6 621.7a2.2 2.2 0 0 0 4.4 0" fill="#222" stroke="#e49a88" stroke-width="0.7"/></svg>
<div class="ob" style="left:528.1px;top:638.1px;width:53.6px;height:14.5px;background:linear-gradient(to bottom,#6a6a6a 0,#6a6a6a 2.9px,#333 2.9px,#333 11.6px,#6a6a6a 11.6px,#6a6a6a 100%);font-size:8.2px;line-height:14.5px;padding-left:2.6px;padding-top:1.1px;color:#fff">send~ acn23</div>
<svg width="2070" height="720"><path d="M532.6 638.4a2.2 2.2 0 0 0 4.4 0" fill="#222" stroke="#e49a88" stroke-width="0.7"/></svg>
<div class="ob" style="left:589.4px;top:584.0px;width:53.6px;height:14.3px;background:linear-gradient(to bottom,#6a6a6a 0,#6a6a6a 2.9px,#333 2.9px,#333 11.399999999999954px,#6a6a6a 11.399999999999954px,#6a6a6a 100%);font-size:8.2px;line-height:14.3px;padding-left:2.6px;padding-top:1.1px;color:#fff">send~ acn24</div>
<svg width="2070" height="720"><path d="M593.9 584.3a2.2 2.2 0 0 0 4.4 0" fill="#222" stroke="#e49a88" stroke-width="0.7"/></svg>
<div class="ob" style="left:589.4px;top:603.3px;width:53.6px;height:14.2px;background:linear-gradient(to bottom,#6a6a6a 0,#6a6a6a 2.8px,#333 2.8px,#333 11.400000000000045px,#6a6a6a 11.400000000000045px,#6a6a6a 100%);font-size:8.2px;line-height:14.2px;padding-left:2.6px;padding-top:1.1px;color:#fff">send~ acn25</div>
<svg width="2070" height="720"><path d="M593.9 603.6a2.2 2.2 0 0 0 4.4 0" fill="#222" stroke="#e49a88" stroke-width="0.7"/></svg>
<div class="ob" style="left:589.4px;top:621.4px;width:53.6px;height:14.3px;background:linear-gradient(to bottom,#6a6a6a 0,#6a6a6a 2.9px,#333 2.9px,#333 11.400000000000068px,#6a6a6a 11.400000000000068px,#6a6a6a 100%);font-size:8.2px;line-height:14.3px;padding-left:2.6px;padding-top:1.1px;color:#fff">send~ acn26</div>
<svg width="2070" height="720"><path d="M593.9 621.7a2.2 2.2 0 0 0 4.4 0" fill="#222" stroke="#e49a88" stroke-width="0.7"/></svg>
<div class="ob" style="left:589.4px;top:638.1px;width:53.6px;height:14.5px;background:linear-gradient(to bottom,#6a6a6a 0,#6a6a6a 2.9px,#333 2.9px,#333 11.6px,#6a6a6a 11.6px,#6a6a6a 100%);font-size:8.2px;line-height:14.5px;padding-left:2.6px;padding-top:1.1px;color:#fff">send~ acn27</div>
<svg width="2070" height="720"><path d="M593.9 638.4a2.2 2.2 0 0 0 4.4 0" fill="#222" stroke="#e49a88" stroke-width="0.7"/></svg>
<div class="ob" style="left:647.4px;top:584.0px;width:53.6px;height:14.3px;background:linear-gradient(to bottom,#6a6a6a 0,#6a6a6a 2.9px,#333 2.9px,#333 11.399999999999954px,#6a6a6a 11.399999999999954px,#6a6a6a 100%);font-size:8.2px;line-height:14.3px;padding-left:2.6px;padding-top:1.1px;color:#fff">send~ acn28</div>
<svg width="2070" height="720"><path d="M651.9 584.3a2.2 2.2 0 0 0 4.4 0" fill="#222" stroke="#e49a88" stroke-width="0.7"/></svg>
<div class="ob" style="left:647.4px;top:603.3px;width:53.6px;height:14.2px;background:linear-gradient(to bottom,#6a6a6a 0,#6a6a6a 2.8px,#333 2.8px,#333 11.400000000000045px,#6a6a6a 11.400000000000045px,#6a6a6a 100%);font-size:8.2px;line-height:14.2px;padding-left:2.6px;padding-top:1.1px;color:#fff">send~ acn29</div>
<svg width="2070" height="720"><path d="M651.9 603.6a2.2 2.2 0 0 0 4.4 0" fill="#222" stroke="#e49a88" stroke-width="0.7"/></svg>
<div class="ob" style="left:647.4px;top:621.4px;width:53.6px;height:14.3px;background:linear-gradient(to bottom,#6a6a6a 0,#6a6a6a 2.9px,#333 2.9px,#333 11.400000000000068px,#6a6a6a 11.400000000000068px,#6a6a6a 100%);font-size:8.2px;line-height:14.3px;padding-left:2.6px;padding-top:1.1px;color:#fff">send~ acn30</div>
<svg width="2070" height="720"><path d="M651.9 621.7a2.2 2.2 0 0 0 4.4 0" fill="#222" stroke="#e49a88" stroke-width="0.7"/></svg>
<div class="ob" style="left:647.4px;top:638.1px;width:53.6px;height:14.5px;background:linear-gradient(to bottom,#6a6a6a 0,#6a6a6a 2.9px,#333 2.9px,#333 11.6px,#6a6a6a 11.6px,#6a6a6a 100%);font-size:8.2px;line-height:14.5px;padding-left:2.6px;padding-top:1.1px;color:#fff">send~ acn31</div>
<svg width="2070" height="720"><path d="M651.9 638.4a2.2 2.2 0 0 0 4.4 0" fill="#222" stroke="#e49a88" stroke-width="0.7"/></svg>
<div class="ob" style="left:703.0px;top:584.0px;width:53.1px;height:14.3px;background:linear-gradient(to bottom,#6a6a6a 0,#6a6a6a 2.9px,#333 2.9px,#333 11.399999999999954px,#6a6a6a 11.399999999999954px,#6a6a6a 100%);font-size:8.2px;line-height:14.3px;padding-left:2.6px;padding-top:1.1px;color:#fff">send~ acn32</div>
<svg width="2070" height="720"><path d="M707.5 584.3a2.2 2.2 0 0 0 4.4 0" fill="#222" stroke="#e49a88" stroke-width="0.7"/></svg>
<div class="ob" style="left:703.0px;top:603.3px;width:53.1px;height:14.2px;background:linear-gradient(to bottom,#6a6a6a 0,#6a6a6a 2.8px,#333 2.8px,#333 11.400000000000045px,#6a6a6a 11.400000000000045px,#6a6a6a 100%);font-size:8.2px;line-height:14.2px;padding-left:2.6px;padding-top:1.1px;color:#fff">send~ acn33</div>
<svg width="2070" height="720"><path d="M707.5 603.6a2.2 2.2 0 0 0 4.4 0" fill="#222" stroke="#e49a88" stroke-width="0.7"/></svg>
<div class="ob" style="left:703.0px;top:621.4px;width:53.1px;height:14.3px;background:linear-gradient(to bottom,#6a6a6a 0,#6a6a6a 2.9px,#333 2.9px,#333 11.400000000000068px,#6a6a6a 11.400000000000068px,#6a6a6a 100%);font-size:8.2px;line-height:14.3px;padding-left:2.6px;padding-top:1.1px;color:#fff">send~ acn34</div>
<svg width="2070" height="720"><path d="M707.5 621.7a2.2 2.2 0 0 0 4.4 0" fill="#222" stroke="#e49a88" stroke-width="0.7"/></svg>
<div class="ob" style="left:703.0px;top:638.1px;width:53.1px;height:14.5px;background:linear-gradient(to bottom,#6a6a6a 0,#6a6a6a 2.9px,#333 2.9px,#333 11.6px,#6a6a6a 11.6px,#6a6a6a 100%);font-size:8.2px;line-height:14.5px;padding-left:2.6px;padding-top:1.1px;color:#fff">send~ acn35</div>
<svg width="2070" height="720"><path d="M707.5 638.4a2.2 2.2 0 0 0 4.4 0" fill="#222" stroke="#e49a88" stroke-width="0.7"/></svg>
<svg width="2070" height="720">
<defs><linearGradient id="gg" x1="0" y1="0" x2="0" y2="1"><stop offset="0" stop-color="#3cff66"/><stop offset="1" stop-color="#12e04a"/></linearGradient></defs>
<rect x="93.4" y="555.4" width="65.8" height="90.8" fill="#cfcfcf"/>
<rect x="93.85" y="555.4" width="3.21" height="90.8" fill="#262626"/>
<rect x="93.85" y="588.6" width="3.21" height="57.6" fill="url(#gg)"/>
<rect x="93.85" y="586.4" width="3.21" height="0.9" fill="#2a8a3a"/>
<rect x="97.96" y="555.4" width="3.21" height="90.8" fill="#262626"/>
<rect x="97.96" y="584.3" width="3.21" height="61.9" fill="url(#gg)"/>
<rect x="97.96" y="582.1" width="3.21" height="0.9" fill="#2a8a3a"/>
<rect x="102.08" y="555.4" width="3.21" height="90.8" fill="#262626"/>
<rect x="102.08" y="641.3" width="3.21" height="4.9" fill="url(#gg)"/>
<rect x="102.08" y="639.1" width="3.21" height="0.9" fill="#2a8a3a"/>
<rect x="106.19" y="555.4" width="3.21" height="90.8" fill="#262626"/>
<rect x="106.19" y="594" width="3.21" height="52.2" fill="url(#gg)"/>
<rect x="106.19" y="591.8" width="3.21" height="0.9" fill="#2a8a3a"/>
<rect x="110.30" y="555.4" width="3.21" height="90.8" fill="#262626"/>
<rect x="110.30" y="601.5" width="3.21" height="44.7" fill="url(#gg)"/>
<rect x="110.30" y="599.3" width="3.21" height="0.9" fill="#2a8a3a"/>
<rect x="114.41" y="555.4" width="3.21" height="90.8" fill="#262626"/>
<rect x="115.52" y="556" width="1" height="71.3" fill="#5e5e5e"/>
<rect x="114.41" y="627.3" width="3.21" height="18.9" fill="url(#gg)"/>
<rect x="114.41" y="625.1" width="3.21" height="0.9" fill="#2a8a3a"/>
<rect x="118.53" y="555.4" width="3.21" height="90.8" fill="#262626"/>
<rect x="119.63" y="556" width="1" height="49.8" fill="#5e5e5e"/>
<rect x="118.53" y="605.8" width="3.21" height="40.4" fill="url(#gg)"/>
<rect x="118.53" y="603.6" width="3.21" height="0.9" fill="#2a8a3a"/>
<rect x="122.64" y="555.4" width="3.21" height="90.8" fill="#262626"/>
<rect x="122.64" y="634.8" width="3.21" height="11.4" fill="url(#gg)"/>
<rect x="122.64" y="632.6" width="3.21" height="0.9" fill="#2a8a3a"/>
<rect x="126.75" y="555.4" width="3.21" height="90.8" fill="#262626"/>
<rect x="126.75" y="602.5" width="3.21" height="43.7" fill="url(#gg)"/>
<rect x="126.75" y="600.3" width="3.21" height="0.9" fill="#2a8a3a"/>
<rect x="130.86" y="555.4" width="3.21" height="90.8" fill="#262626"/>
<rect x="130.86" y="600.4" width="3.21" height="45.8" fill="url(#gg)"/>
<rect x="130.86" y="598.2" width="3.21" height="0.9" fill="#2a8a3a"/>
<rect x="134.97" y="555.4" width="3.21" height="90.8" fill="#262626"/>
<rect x="134.97" y="640.2" width="3.21" height="6.0" fill="url(#gg)"/>
<rect x="134.97" y="638.0" width="3.21" height="0.9" fill="#2a8a3a"/>
<rect x="139.09" y="555.4" width="3.21" height="90.8" fill="#262626"/>
<rect x="139.09" y="595" width="3.21" height="51.2" fill="url(#gg)"/>
<rect x="139.09" y="592.8" width="3.21" height="0.9" fill="#2a8a3a"/>
<rect x="143.20" y="555.4" width="3.21" height="90.8" fill="#262626"/>
<rect x="144.31" y="556" width="1" height="74.5" fill="#5e5e5e"/>
<rect x="143.20" y="630.5" width="3.21" height="15.7" fill="url(#gg)"/>
<rect x="143.20" y="628.3" width="3.21" height="0.9" fill="#2a8a3a"/>
<rect x="147.31" y="555.4" width="3.21" height="90.8" fill="#262626"/>
<rect x="148.42" y="556" width="1" height="57.3" fill="#5e5e5e"/>
<rect x="147.31" y="613.3" width="3.21" height="32.9" fill="url(#gg)"/>
<rect x="147.31" y="611.1" width="3.21" height="0.9" fill="#2a8a3a"/>
<rect x="151.42" y="555.4" width="3.21" height="90.8" fill="#262626"/>
<rect x="151.42" y="632.7" width="3.21" height="13.5" fill="url(#gg)"/>
<rect x="151.42" y="630.5" width="3.21" height="0.9" fill="#2a8a3a"/>
<rect x="155.54" y="555.4" width="3.21" height="90.8" fill="#262626"/>
<rect x="155.54" y="603.6" width="3.21" height="42.6" fill="url(#gg)"/>
<rect x="155.54" y="601.4" width="3.21" height="0.9" fill="#2a8a3a"/>
<rect x="93.4" y="561" width="65.8" height="1.6" fill="#7a7a7a"/>
<path d="M161.5 565l6.5-3v6z" fill="#ccc" stroke="#888" stroke-width="0.9"/>
</svg>
<div class="a" style="left:1223.3px;top:222.7px;width:846.7px;height:497.3px;background:#fff;"></div>
<div class="a" style="left:1246px;top:231.5px;width:802px;height:469.5px;border-radius:5px;background:#fff;box-shadow:0 5px 14px rgba(0,0,0,.30),0 0 1px rgba(0,0,0,.45);overflow:hidden"><div class="a" style="left:0;top:0;width:802px;height:11.8px;background:#e3e3e3"></div><div class="a" style="left:0;top:11.8px;width:802px;height:18px;background:#f3f3f3"></div><div class="a" style="left:0;top:11.8px;width:25.4px;height:446.5px;background:#2c2c2c"></div><div class="a" style="left:25.4px;top:11.8px;width:61.6px;height:18px;background:#fff"></div><div class="a" style="left:0;top:458.3px;width:802px;height:11.2px;background:#68217a"></div></div>
<div class="a" style="left:1249.5px;top:234.5px;width:6.6px;height:6.6px;border-radius:50%;background:#d6d6d6"></div>
<div class="a" style="left:1259.9px;top:234.5px;width:6.6px;height:6.6px;border-radius:50%;background:#d6d6d6"></div>
<div class="a" style="left:1270.3px;top:234.5px;width:6.6px;height:6.6px;border-radius:50%;background:#d6d6d6"></div>
<div class="t" style="left:1634.8px;top:233.9px;font-size:6.8px;line-height:8.2px;color:#6a6a6a;transform:scaleX(0.978);transform-origin:0 50%;">qlist1.txt</div>
<svg width="2070" height="720"><path d="M1281.5 250.5h3M1281.5 252.2h3.5M1281.5 253.9h3.5M1281.5 255.6h3.5" stroke="#c8c8c8" stroke-width="0.9"/></svg>
<div class="t" style="left:1288.0px;top:249.1px;font-size:7.2px;line-height:8.6px;color:#333;">qlist1.txt</div>
<div class="t" style="left:1324.0px;top:248.1px;font-size:8.5px;line-height:10.2px;color:#333;font-weight:bold;">×</div>
<div class="t" style="left:1279.7px;top:264.1px;font-size:7.0px;line-height:8.4px;color:#6c6c6c;transform:scaleX(0.961);transform-origin:0 50%;">Volumes</div>
<div class="t" style="left:1315.0px;top:264.1px;font-size:7.0px;line-height:8.4px;color:#6c6c6c;transform:scaleX(0.907);transform-origin:0 50%;">AK1</div>
<div class="t" style="left:1335.6px;top:264.1px;font-size:7.0px;line-height:8.4px;color:#6c6c6c;transform:scaleX(0.932);transform-origin:0 50%;">______cubeFest2019_backup</div>
<div class="t" style="left:1431.2px;top:264.1px;font-size:7.0px;line-height:8.4px;color:#6c6c6c;transform:scaleX(0.945);transform-origin:0 50%;">___greenlee_cubeFest2019_7_22_deliver</div>
<div class="t" style="left:1574.6px;top:264.1px;font-size:7.0px;line-height:8.4px;color:#6c6c6c;transform:scaleX(1.036);transform-origin:0 50%;">qlist1.txt</div>
<div class="t" style="left:1309.0px;top:263.9px;font-size:7px;line-height:8.4px;color:#999;">›</div>
<div class="t" style="left:1329.5px;top:263.9px;font-size:7px;line-height:8.4px;color:#999;">›</div>
<div class="t" style="left:1426.5px;top:263.9px;font-size:7px;line-height:8.4px;color:#999;">›</div>
<div class="t" style="left:1558.5px;top:263.9px;font-size:7px;line-height:8.4px;color:#999;">›</div>
<svg width="2070" height="720"><path d="M1568 264.5h3M1568 266.2h3M1568 267.9h3M1568 269.6h3" stroke="#c8c8c8" stroke-width="0.9"/></svg>
<svg width="2070" height="720"><rect x="2018.5" y="249.5" width="7.5" height="6" fill="none" stroke="#424242" stroke-width="1"/><line x1="2022.3" y1="249.5" x2="2022.3" y2="255.5" stroke="#424242" stroke-width="1"/><circle cx="2035" cy="252.5" r=".8" fill="#424242"/><circle cx="2038" cy="252.5" r=".8" fill="#424242"/><circle cx="2041" cy="252.5" r=".8" fill="#424242"/></svg>
<svg width="2070" height="720">
<path d="M1254.5 253h5l3 3v7.5h-8z M1256.5 251h4.5l3 3" fill="none" stroke="#9a9a9a" stroke-width="1.1"/>
<circle cx="1260" cy="280" r="3.6" fill="none" stroke="#9a9a9a" stroke-width="1.2"/><line x1="1257.5" y1="282.5" x2="1253.5" y2="286.5" stroke="#9a9a9a" stroke-width="1.4"/>
<circle cx="1255.5" cy="304" r="1.6" fill="none" stroke="#9a9a9a" stroke-width="1"/><circle cx="1261.5" cy="304" r="1.6" fill="none" stroke="#9a9a9a" stroke-width="1"/><circle cx="1258.5" cy="313" r="1.6" fill="none" stroke="#9a9a9a" stroke-width="1"/><path d="M1255.5 305.5q0 3 3 5.5q3-2.5 3-5.5" fill="none" stroke="#9a9a9a" stroke-width="1"/>
<circle cx="1258.4" cy="334" r="5" fill="none" stroke="#9a9a9a" stroke-width="1.2"/><path d="M1254.8 330.4l7.2 7.2" stroke="#9a9a9a" stroke-width="1.2"/><ellipse cx="1258.4" cy="334" rx="2" ry="2.8" fill="#9a9a9a"/>
<rect x="1253.5" y="354.5" width="10" height="10" fill="none" stroke="#9a9a9a" stroke-width="1.3"/><rect x="1256.5" y="357.5" width="4" height="4" fill="#9a9a9a"/>
<g transform="translate(1258.4 676)"><circle r="3.8" fill="#8c8c8c"/><rect x="-1.1" y="-5.4" width="2.2" height="2.6" fill="#8c8c8c" transform="rotate(0)"/><rect x="-1.1" y="-5.4" width="2.2" height="2.6" fill="#8c8c8c" transform="rotate(45)"/><rect x="-1.1" y="-5.4" width="2.2" height="2.6" fill="#8c8c8c" transform="rotate(90)"/><rect x="-1.1" y="-5.4" width="2.2" height="2.6" fill="#8c8c8c" transform="rotate(135)"/><rect x="-1.1" y="-5.4" width="2.2" height="2.6" fill="#8c8c8c" transform="rotate(180)"/><rect x="-1.1" y="-5.4" width="2.2" height="2.6" fill="#8c8c8c" transform="rotate(225)"/><rect x="-1.1" y="-5.4" width="2.2" height="2.6" fill="#8c8c8c" transform="rotate(270)"/><rect x="-1.1" y="-5.4" width="2.2" height="2.6" fill="#8c8c8c" transform="rotate(315)"/><circle r="1.6" fill="#2c2c2c"/></g>
</svg>
<div class="a" style="left:1271.4px;top:272.8px;width:707px;height:416.5px;overflow:hidden">
<div class="t mono" style="left:10.6px;top:-4.31px;font-size:6.8px;line-height:9.337px;color:#1f7592;transform:scaleX(0.916);transform-origin:0 50%;-webkit-text-stroke:0.12px #1f7592">117</div>
<div class="t mono" style="left:34.5px;top:-4.31px;font-size:6.8px;line-height:9.337px;color:#000;transform:scaleX(0.916);transform-origin:0 50%;-webkit-text-stroke:0.3px #000">3000;</div>
<div class="t mono" style="left:10.6px;top:5.03px;font-size:6.8px;line-height:9.337px;color:#1f7592;transform:scaleX(0.916);transform-origin:0 50%;-webkit-text-stroke:0.12px #1f7592">118</div>
<div class="t mono" style="left:34.5px;top:5.03px;font-size:6.8px;line-height:9.337px;color:#000;transform:scaleX(0.916);transform-origin:0 50%;-webkit-text-stroke:0.3px #000">0 chvol 1 0.9 2 0. 3 0. 4 0. 5 0. 6 0. 7 0. 8 0. 9 0. 10 0. 11 0. 12 0. 13 0. 14 0. 15 0. 16 0. 17 0. 18 0. 19 0. 20 0.;</div>
<div class="t mono" style="left:10.6px;top:14.37px;font-size:6.8px;line-height:9.337px;color:#1f7592;transform:scaleX(0.916);transform-origin:0 50%;-webkit-text-stroke:0.12px #1f7592">119</div>
<div class="t mono" style="left:34.5px;top:14.37px;font-size:6.8px;line-height:9.337px;color:#000;transform:scaleX(0.916);transform-origin:0 50%;-webkit-text-stroke:0.3px #000">10 benj 22 24 1.0 10;</div>
<div class="t mono" style="left:10.6px;top:23.71px;font-size:6.8px;line-height:9.337px;color:#1f7592;transform:scaleX(0.916);transform-origin:0 50%;-webkit-text-stroke:0.12px #1f7592">120</div>
<div class="t mono" style="left:34.5px;top:23.71px;font-size:6.8px;line-height:9.337px;color:#000;transform:scaleX(0.916);transform-origin:0 50%;-webkit-text-stroke:0.3px #000">1000 benj 22 24 0.0 10;</div>
<div class="t mono" style="left:10.6px;top:33.04px;font-size:6.8px;line-height:9.337px;color:#1f7592;transform:scaleX(0.916);transform-origin:0 50%;-webkit-text-stroke:0.12px #1f7592">121</div>
<div class="t mono" style="left:34.5px;top:33.04px;font-size:6.8px;line-height:9.337px;color:#000;transform:scaleX(0.916);transform-origin:0 50%;-webkit-text-stroke:0.3px #000">2000 chvol 1 0.8 2 0.7 3 0.8 4 0.7 5 0.8 6 0.7 7 0.8 8 0.7 9 0.8 10 0.7 11 0.8 12 0.7 13 0.8 14 0.7 15 0.8 16 0.7 17 0.8 18 0.7 19 0.8 20 0.7;</div>
<div class="t mono" style="left:10.6px;top:42.38px;font-size:6.8px;line-height:9.337px;color:#1f7592;transform:scaleX(0.916);transform-origin:0 50%;-webkit-text-stroke:0.12px #1f7592">122</div>
<div class="t mono" style="left:34.5px;top:42.38px;font-size:6.8px;line-height:9.337px;color:#000;transform:scaleX(0.916);transform-origin:0 50%;-webkit-text-stroke:0.3px #000">3000 traj 4 3000 1;</div>
<div class="t mono" style="left:10.6px;top:51.72px;font-size:6.8px;line-height:9.337px;color:#1f7592;transform:scaleX(0.916);transform-origin:0 50%;-webkit-text-stroke:0.12px #1f7592">123</div>
<div class="t mono" style="left:34.5px;top:51.72px;font-size:6.8px;line-height:9.337px;color:#000;transform:scaleX(0.916);transform-origin:0 50%;-webkit-text-stroke:0.3px #000">3000 traj 30 3000 1;</div>
<div class="t mono" style="left:10.6px;top:61.05px;font-size:6.8px;line-height:9.337px;color:#1f7592;transform:scaleX(0.916);transform-origin:0 50%;-webkit-text-stroke:0.12px #1f7592">124</div>
<div class="t mono" style="left:34.5px;top:61.05px;font-size:6.8px;line-height:9.337px;color:#000;transform:scaleX(0.916);transform-origin:0 50%;-webkit-text-stroke:0.3px #000">1000 chvol 1 0. 2 0. 3 0. 4 0. 5 0. 6 0. 7 0. 8 0. 9 0. 10 0.5 11 0. 12 0. 13 0. 14 0. 15 0. 16 0. 17 0. 18 0. 19 0. 20 0.;</div>
<div class="t mono" style="left:10.6px;top:70.39px;font-size:6.8px;line-height:9.337px;color:#1f7592;transform:scaleX(0.916);transform-origin:0 50%;-webkit-text-stroke:0.12px #1f7592">125</div>
<div class="t mono" style="left:34.5px;top:70.39px;font-size:6.8px;line-height:9.337px;color:#000;transform:scaleX(0.916);transform-origin:0 50%;-webkit-text-stroke:0.3px #000">2000 benj 22 9 1.0 140;</div>
<div class="t mono" style="left:10.6px;top:79.73px;font-size:6.8px;line-height:9.337px;color:#1f7592;transform:scaleX(0.916);transform-origin:0 50%;-webkit-text-stroke:0.12px #1f7592">126</div>
<div class="t mono" style="left:34.5px;top:79.73px;font-size:6.8px;line-height:9.337px;color:#000;transform:scaleX(0.916);transform-origin:0 50%;-webkit-text-stroke:0.3px #000">1000 chvol 1 0.2 2 0. 3 0.6 4 0. 5 0. 6 0. 7 0. 8 0. 9 0.8 10 0. 11 0. 12 0.8 13 0. 14 0. 15 0. 16 0. 17 0.4 18 0. 19 0. 20 0.;</div>
<div class="t mono" style="left:10.6px;top:89.06px;font-size:6.8px;line-height:9.337px;color:#1f7592;transform:scaleX(0.916);transform-origin:0 50%;-webkit-text-stroke:0.12px #1f7592">127</div>
<div class="t mono" style="left:34.5px;top:89.06px;font-size:6.8px;line-height:9.337px;color:#000;transform:scaleX(0.916);transform-origin:0 50%;-webkit-text-stroke:0.3px #000">2000 chvol 1 0.2 2 0.7 3 0.6 4 0.9 5 0. 6 0.5 7 0. 8 0.9 9 0.8 10 0.2 11 0.1 12 0.8 13 0.2 14 0.2 15 0.7 16 0.8 17 0.4 18 0. 19 0.1 20 0.2;</div>
<div class="t mono" style="left:10.6px;top:98.40px;font-size:6.8px;line-height:9.337px;color:#1f7592;transform:scaleX(0.916);transform-origin:0 50%;-webkit-text-stroke:0.12px #1f7592">128</div>
<div class="t mono" style="left:34.5px;top:98.40px;font-size:6.8px;line-height:9.337px;color:#000;transform:scaleX(0.916);transform-origin:0 50%;-webkit-text-stroke:0.3px #000">3000 traj 4 3000 1;</div>
<div class="t mono" style="left:10.6px;top:107.74px;font-size:6.8px;line-height:9.337px;color:#1f7592;transform:scaleX(0.916);transform-origin:0 50%;-webkit-text-stroke:0.12px #1f7592">129</div>
<div class="t mono" style="left:34.5px;top:107.74px;font-size:6.8px;line-height:9.337px;color:#000;transform:scaleX(0.916);transform-origin:0 50%;-webkit-text-stroke:0.3px #000">3000 traj 30 3000 1;</div>
<div class="t mono" style="left:10.6px;top:117.08px;font-size:6.8px;line-height:9.337px;color:#1f7592;transform:scaleX(0.916);transform-origin:0 50%;-webkit-text-stroke:0.12px #1f7592">130</div>
<div class="t mono" style="left:34.5px;top:117.08px;font-size:6.8px;line-height:9.337px;color:#000;transform:scaleX(0.916);transform-origin:0 50%;-webkit-text-stroke:0.3px #000">2000 chvol 1 0.6 2 0.3 3 0.3 4 0.6 5 0.8 6 0.5 7 0.7 8 0.4 9 0.5 10 0.8 11 0.3 12 0.7 13 0.6 14 0.8 15 0.5 16 0.4 17 0.7 18 0.4 19 0.5 20 0.6;</div>
<div class="t mono" style="left:10.6px;top:126.41px;font-size:6.8px;line-height:9.337px;color:#1f7592;transform:scaleX(0.916);transform-origin:0 50%;-webkit-text-stroke:0.12px #1f7592">131</div>
<div class="t mono" style="left:34.5px;top:126.41px;font-size:6.8px;line-height:9.337px;color:#000;transform:scaleX(0.916);transform-origin:0 50%;-webkit-text-stroke:0.3px #000">3000 traj 6 3000 1;</div>
<div class="t mono" style="left:10.6px;top:135.75px;font-size:6.8px;line-height:9.337px;color:#1f7592;transform:scaleX(0.916);transform-origin:0 50%;-webkit-text-stroke:0.12px #1f7592">132</div>
<div class="t mono" style="left:34.5px;top:135.75px;font-size:6.8px;line-height:9.337px;color:#000;transform:scaleX(0.916);transform-origin:0 50%;-webkit-text-stroke:0.3px #000">1000 chvol 1 0. 2 0. 3 0. 4 0. 5 0. 6 0. 7 0. 8 0. 9 0. 10 0.5 11 0. 12 0. 13 0. 14 0. 15 0. 16 0. 17 0. 18 0. 19 0. 20 0.;</div>
<div class="t mono" style="left:10.6px;top:145.09px;font-size:6.8px;line-height:9.337px;color:#1f7592;transform:scaleX(0.916);transform-origin:0 50%;-webkit-text-stroke:0.12px #1f7592">133</div>
<div class="t mono" style="left:34.5px;top:145.09px;font-size:6.8px;line-height:9.337px;color:#000;transform:scaleX(0.916);transform-origin:0 50%;-webkit-text-stroke:0.3px #000">0 benj 3 24 0.5 100;</div>
<div class="t mono" style="left:10.6px;top:154.42px;font-size:6.8px;line-height:9.337px;color:#1f7592;transform:scaleX(0.916);transform-origin:0 50%;-webkit-text-stroke:0.12px #1f7592">134</div>
<div class="t mono" style="left:34.5px;top:154.42px;font-size:6.8px;line-height:9.337px;color:#000;transform:scaleX(0.916);transform-origin:0 50%;-webkit-text-stroke:0.3px #000">0 chvol_t 3000;</div>
<div class="t mono" style="left:10.6px;top:163.76px;font-size:6.8px;line-height:9.337px;color:#1f7592;transform:scaleX(0.916);transform-origin:0 50%;-webkit-text-stroke:0.12px #1f7592">135</div>
<div class="t mono" style="left:34.5px;top:163.76px;font-size:6.8px;line-height:9.337px;color:#000;transform:scaleX(0.916);transform-origin:0 50%;-webkit-text-stroke:0.3px #000">1000 chvol 1 0. 2 0.2 3 0. 4 0. 5 0.2 6 0. 7 0. 8 0. 9 0. 10 0. 11 0. 12 0. 13 0. 14 0. 15 0. 16 0. 17 0. 18 0. 19 0. 20 0.;</div>
<div class="t mono" style="left:10.6px;top:173.10px;font-size:6.8px;line-height:9.337px;color:#1f7592;transform:scaleX(0.916);transform-origin:0 50%;-webkit-text-stroke:0.12px #1f7592">136</div>
<div class="t mono" style="left:34.5px;top:173.10px;font-size:6.8px;line-height:9.337px;color:#000;transform:scaleX(0.916);transform-origin:0 50%;-webkit-text-stroke:0.3px #000">1000 traj 9 1000 1;</div>
<div class="t mono" style="left:10.6px;top:182.43px;font-size:6.8px;line-height:9.337px;color:#1f7592;transform:scaleX(0.916);transform-origin:0 50%;-webkit-text-stroke:0.12px #1f7592">137</div>
<div class="t mono" style="left:34.5px;top:182.43px;font-size:6.8px;line-height:9.337px;color:#000;transform:scaleX(0.916);transform-origin:0 50%;-webkit-text-stroke:0.3px #000">2000 chvol 1 0.8 2 0.7 3 0.8 4 0.7 5 0.8 6 0.7 7 0.8 8 0.7 9 0.8 10 0.7 11 0.8 12 0.7 13 0.8 14 0.7 15 0.8 16 0.7 17 0.8 18 0.7 19 0.8 20 0.7;</div>
<div class="t mono" style="left:10.6px;top:191.77px;font-size:6.8px;line-height:9.337px;color:#1f7592;transform:scaleX(0.916);transform-origin:0 50%;-webkit-text-stroke:0.12px #1f7592">138</div>
<div class="t mono" style="left:34.5px;top:191.77px;font-size:6.8px;line-height:9.337px;color:#000;transform:scaleX(0.916);transform-origin:0 50%;-webkit-text-stroke:0.3px #000">0 benj 3 24 1.0 100;</div>
<div class="t mono" style="left:10.6px;top:201.11px;font-size:6.8px;line-height:9.337px;color:#1f7592;transform:scaleX(0.916);transform-origin:0 50%;-webkit-text-stroke:0.12px #1f7592">139</div>
<div class="t mono" style="left:34.5px;top:201.11px;font-size:6.8px;line-height:9.337px;color:#000;transform:scaleX(0.916);transform-origin:0 50%;-webkit-text-stroke:0.3px #000">0 traj 30 5000 1;</div>
<div class="t mono" style="left:10.6px;top:210.45px;font-size:6.8px;line-height:9.337px;color:#1f7592;transform:scaleX(0.916);transform-origin:0 50%;-webkit-text-stroke:0.12px #1f7592">140</div>
<div class="t mono" style="left:34.5px;top:210.45px;font-size:6.8px;line-height:9.337px;color:#000;transform:scaleX(0.916);transform-origin:0 50%;-webkit-text-stroke:0.3px #000">0 chvol_t 5000;</div>
<div class="t mono" style="left:10.6px;top:219.78px;font-size:6.8px;line-height:9.337px;color:#1f7592;transform:scaleX(0.916);transform-origin:0 50%;-webkit-text-stroke:0.12px #1f7592">141</div>
<div class="t mono" style="left:34.5px;top:219.78px;font-size:6.8px;line-height:9.337px;color:#000;transform:scaleX(0.916);transform-origin:0 50%;-webkit-text-stroke:0.3px #000">5000 chvol 1 0. 2 0.6 3 0. 4 0. 5 0. 6 0.7 7 0. 8 0. 9 0. 10 0.8 11 0. 12 0. 13 0. 14 0. 15 0. 16 0. 17 0. 18 0. 19 0. 20 0.8;</div>
<div class="t mono" style="left:10.6px;top:229.12px;font-size:6.8px;line-height:9.337px;color:#1f7592;transform:scaleX(0.916);transform-origin:0 50%;-webkit-text-stroke:0.12px #1f7592">142</div>
<div class="t mono" style="left:34.5px;top:229.12px;font-size:6.8px;line-height:9.337px;color:#000;transform:scaleX(0.916);transform-origin:0 50%;-webkit-text-stroke:0.3px #000">0 traj 1 5000 1;</div>
<div class="t mono" style="left:10.6px;top:238.46px;font-size:6.8px;line-height:9.337px;color:#1f7592;transform:scaleX(0.916);transform-origin:0 50%;-webkit-text-stroke:0.12px #1f7592">143</div>
<div class="t mono" style="left:34.5px;top:238.46px;font-size:6.8px;line-height:9.337px;color:#000;transform:scaleX(0.916);transform-origin:0 50%;-webkit-text-stroke:0.3px #000">5000 chvol 1 0.5 2 0.6 3 0.5 4 0.5 5 0.5 6 0.7 7 0.5 8 0.5 9 0.5 10 0.8 11 0.5 12 0.5 13 0.5 14 0.5 15 0.5 16 0.5 17 0.5 18 0.5 19 0.5 20 0.8;</div>
<div class="t mono" style="left:10.6px;top:247.79px;font-size:6.8px;line-height:9.337px;color:#1f7592;transform:scaleX(0.916);transform-origin:0 50%;-webkit-text-stroke:0.12px #1f7592">144</div>
<div class="t mono" style="left:34.5px;top:247.79px;font-size:6.8px;line-height:9.337px;color:#000;transform:scaleX(0.916);transform-origin:0 50%;-webkit-text-stroke:0.3px #000">5000 chvol 1 0.8 2 0.6 3 0.8 4 0.8 5 0.8 6 0.8 7 0.8 8 0.8 9 0.8 10 0.8 11 0.8 12 0.7 13 0.7 14 0.8 15 0.8 16 0.8 17 0.7 18 0.7 19 0.8 20 0.8;</div>
<div class="t mono" style="left:10.6px;top:257.13px;font-size:6.8px;line-height:9.337px;color:#1f7592;transform:scaleX(0.916);transform-origin:0 50%;-webkit-text-stroke:0.12px #1f7592">145</div>
<div class="t mono" style="left:34.5px;top:257.13px;font-size:6.8px;line-height:9.337px;color:#000;transform:scaleX(0.916);transform-origin:0 50%;-webkit-text-stroke:0.3px #000">5000 chvol 1 0.8 2 0.9 3 0.8 4 0.8 5 0.8 6 0.8 7 0.8 8 0.8 9 0.8 10 0.8 11 0.8 12 0.9 13 0.9 14 0.8 15 0.8 16 0.8 17 0.9 18 0.9 19 0.8 20 0.8;</div>
<div class="t mono" style="left:10.6px;top:266.47px;font-size:6.8px;line-height:9.337px;color:#1f7592;transform:scaleX(0.916);transform-origin:0 50%;-webkit-text-stroke:0.12px #1f7592">146</div>
<div class="t mono" style="left:34.5px;top:266.47px;font-size:6.8px;line-height:9.337px;color:#000;transform:scaleX(0.916);transform-origin:0 50%;-webkit-text-stroke:0.3px #000">0 chvol_t 10000;</div>
<div class="t mono" style="left:10.6px;top:275.80px;font-size:6.8px;line-height:9.337px;color:#1f7592;transform:scaleX(0.916);transform-origin:0 50%;-webkit-text-stroke:0.12px #1f7592">147</div>
<div class="t mono" style="left:34.5px;top:275.80px;font-size:6.8px;line-height:9.337px;color:#000;transform:scaleX(0.916);transform-origin:0 50%;-webkit-text-stroke:0.3px #000">5000 chvol 1 0.1 2 0.1 3 0.1 4 0.1 5 0.1 6 0.1 7 0.1 8 0.1 9 0.1 10 0.1 11 0.1 12 0.1 13 0.1 14 0.1 15 0.1 16 0.1 17 0.1 18 0.1 19 0.1 20 0.1;</div>
<div class="t mono" style="left:10.6px;top:285.14px;font-size:6.8px;line-height:9.337px;color:#1f7592;transform:scaleX(0.916);transform-origin:0 50%;-webkit-text-stroke:0.12px #1f7592">148</div>
<div class="t mono" style="left:34.5px;top:285.14px;font-size:6.8px;line-height:9.337px;color:#000;transform:scaleX(0.916);transform-origin:0 50%;-webkit-text-stroke:0.3px #000">10000;</div>
<div class="t mono" style="left:10.6px;top:294.48px;font-size:6.8px;line-height:9.337px;color:#1f7592;transform:scaleX(0.916);transform-origin:0 50%;-webkit-text-stroke:0.12px #1f7592">149</div>
<div class="t mono" style="left:34.5px;top:294.48px;font-size:6.8px;line-height:9.337px;color:#000;transform:scaleX(0.916);transform-origin:0 50%;-webkit-text-stroke:0.3px #000">======================== 6;</div>
<div class="t mono" style="left:10.6px;top:303.82px;font-size:6.8px;line-height:9.337px;color:#1f7592;transform:scaleX(0.916);transform-origin:0 50%;-webkit-text-stroke:0.12px #1f7592">150</div>
<div class="t mono" style="left:34.5px;top:303.82px;font-size:6.8px;line-height:9.337px;color:#000;transform:scaleX(0.916);transform-origin:0 50%;-webkit-text-stroke:0.3px #000">0 6 traj 10 2500 0;</div>
<div class="t mono" style="left:10.6px;top:313.15px;font-size:6.8px;line-height:9.337px;color:#1f7592;transform:scaleX(0.916);transform-origin:0 50%;-webkit-text-stroke:0.12px #1f7592">151</div>
<div class="t mono" style="left:34.5px;top:313.15px;font-size:6.8px;line-height:9.337px;color:#000;transform:scaleX(0.916);transform-origin:0 50%;-webkit-text-stroke:0.3px #000">0 benj 3 24 1.0 10;</div>
<div class="t mono" style="left:10.6px;top:322.49px;font-size:6.8px;line-height:9.337px;color:#1f7592;transform:scaleX(0.916);transform-origin:0 50%;-webkit-text-stroke:0.12px #1f7592">152</div>
<div class="t mono" style="left:34.5px;top:322.49px;font-size:6.8px;line-height:9.337px;color:#000;transform:scaleX(0.916);transform-origin:0 50%;-webkit-text-stroke:0.3px #000">5000 chvol 1 0. 2 0.3 3 0. 4 0. 5 0. 6 0. 7 0.3 8 0. 9 0. 10 0. 11 0. 12 0. 13 0.3 14 0. 15 0.3 16 0. 17 0.3 18 0. 19 0. 20 0.;</div>
<div class="t mono" style="left:10.6px;top:331.83px;font-size:6.8px;line-height:9.337px;color:#1f7592;transform:scaleX(0.916);transform-origin:0 50%;-webkit-text-stroke:0.12px #1f7592">153</div>
<div class="t mono" style="left:34.5px;top:331.83px;font-size:6.8px;line-height:9.337px;color:#000;transform:scaleX(0.916);transform-origin:0 50%;-webkit-text-stroke:0.3px #000">5000 benj 1 24 0.3 10.;</div>
<div class="t mono" style="left:10.6px;top:341.16px;font-size:6.8px;line-height:9.337px;color:#1f7592;transform:scaleX(0.916);transform-origin:0 50%;-webkit-text-stroke:0.12px #1f7592">154</div>
<div class="t mono" style="left:34.5px;top:341.16px;font-size:6.8px;line-height:9.337px;color:#000;transform:scaleX(0.916);transform-origin:0 50%;-webkit-text-stroke:0.3px #000">2000 traj 11 2000 1;</div>
<div class="t mono" style="left:10.6px;top:350.50px;font-size:6.8px;line-height:9.337px;color:#1f7592;transform:scaleX(0.916);transform-origin:0 50%;-webkit-text-stroke:0.12px #1f7592">155</div>
<div class="t mono" style="left:34.5px;top:350.50px;font-size:6.8px;line-height:9.337px;color:#000;transform:scaleX(0.916);transform-origin:0 50%;-webkit-text-stroke:0.3px #000">5000 benj 1 24 0. 10.;</div>
<div class="t mono" style="left:10.6px;top:359.84px;font-size:6.8px;line-height:9.337px;color:#1f7592;transform:scaleX(0.916);transform-origin:0 50%;-webkit-text-stroke:0.12px #1f7592">156</div>
<div class="t mono" style="left:34.5px;top:359.84px;font-size:6.8px;line-height:9.337px;color:#000;transform:scaleX(0.916);transform-origin:0 50%;-webkit-text-stroke:0.3px #000">2000 traj 1 2000 1;</div>
<div class="t mono" style="left:10.6px;top:369.17px;font-size:6.8px;line-height:9.337px;color:#1f7592;transform:scaleX(0.916);transform-origin:0 50%;-webkit-text-stroke:0.12px #1f7592">157</div>
<div class="t mono" style="left:34.5px;top:369.17px;font-size:6.8px;line-height:9.337px;color:#000;transform:scaleX(0.916);transform-origin:0 50%;-webkit-text-stroke:0.3px #000">2000 traj 21 2000 1;</div>
<div class="t mono" style="left:10.6px;top:378.51px;font-size:6.8px;line-height:9.337px;color:#1f7592;transform:scaleX(0.916);transform-origin:0 50%;-webkit-text-stroke:0.12px #1f7592">158</div>
<div class="t mono" style="left:34.5px;top:378.51px;font-size:6.8px;line-height:9.337px;color:#000;transform:scaleX(0.916);transform-origin:0 50%;-webkit-text-stroke:0.3px #000">2000 traj 1 2000 1;</div>
<div class="t mono" style="left:10.6px;top:387.85px;font-size:6.8px;line-height:9.337px;color:#1f7592;transform:scaleX(0.916);transform-origin:0 50%;-webkit-text-stroke:0.12px #1f7592">159</div>
<div class="t mono" style="left:34.5px;top:387.85px;font-size:6.8px;line-height:9.337px;color:#000;transform:scaleX(0.916);transform-origin:0 50%;-webkit-text-stroke:0.3px #000">0 chvol_t 500;</div>
<div class="t mono" style="left:10.6px;top:397.19px;font-size:6.8px;line-height:9.337px;color:#1f7592;transform:scaleX(0.916);transform-origin:0 50%;-webkit-text-stroke:0.12px #1f7592">160</div>
<div class="t mono" style="left:34.5px;top:397.19px;font-size:6.8px;line-height:9.337px;color:#000;transform:scaleX(0.916);transform-origin:0 50%;-webkit-text-stroke:0.3px #000">1000 chvol 1 0. 2 0.3 3 0. 4 0. 5 0. 6 0. 7 0.3 8 0.4 9 0. 10 0. 11 0. 12 0. 13 0.3 14 0.4 15 0.3 16 0. 17 0.3 18 0. 19 0.8 20 0.;</div>
<div class="t mono" style="left:10.6px;top:406.52px;font-size:6.8px;line-height:9.337px;color:#1f7592;transform:scaleX(0.916);transform-origin:0 50%;-webkit-text-stroke:0.12px #1f7592">161</div>
<div class="t mono" style="left:34.5px;top:406.52px;font-size:6.8px;line-height:9.337px;color:#000;transform:scaleX(0.916);transform-origin:0 50%;-webkit-text-stroke:0.3px #000">1000 chvol 1 0. 2 0. 3 0. 4 0.6 5 0. 6 0.7 7 0. 8 0. 9 0. 10 0. 11 0. 12 0. 13 0. 14 0. 15 0.3 16 0. 17 0. 18 0. 19 0.8 20 0.;</div>
</div>
<div class="a" style="left:1306.0px;top:685.0px;width:663.4px;height:4.0px;background:#cfcfcf;"></div>
<div class="a" style="left:2040.5px;top:272.8px;width:0.7px;height:417.0px;background:#e8e8e8;"></div>
<div class="a" style="left:2041.5px;top:445.5px;width:6.5px;height:66.5px;background:#c8c8c8;"></div>
<svg width="2070" height="720">
<line x1="1978" y1="274.5" x2="1986" y2="274.5" stroke="#555" stroke-width="1" stroke-dasharray="1 .5" opacity="0.75"/>
<line x1="1978" y1="275.9" x2="1990" y2="275.9" stroke="#555" stroke-width="1" stroke-dasharray="1 .5" opacity="0.75"/>
<line x1="1978" y1="277.4" x2="1986" y2="277.4" stroke="#555" stroke-width="1" stroke-dasharray="1 .5" opacity="0.75"/>
<line x1="1978" y1="278.8" x2="1986" y2="278.8" stroke="#555" stroke-width="1" stroke-dasharray="1 .5" opacity="0.75"/>
<line x1="1978" y1="280.3" x2="1990" y2="280.3" stroke="#555" stroke-width="1" stroke-dasharray="1 .5" opacity="0.75"/>
<line x1="1978" y1="281.7" x2="1990" y2="281.7" stroke="#555" stroke-width="1" stroke-dasharray="1 .5" opacity="0.75"/>
<line x1="1990" y1="281.7" x2="2040" y2="281.7" stroke="#777" stroke-width="0.9" stroke-dasharray="1 .8" opacity="0.55"/>
<line x1="1978" y1="283.1" x2="1990" y2="283.1" stroke="#555" stroke-width="1" stroke-dasharray="1 .5" opacity="0.75"/>
<line x1="1978" y1="284.6" x2="1990" y2="284.6" stroke="#555" stroke-width="1" stroke-dasharray="1 .5" opacity="0.75"/>
<line x1="1978" y1="286.0" x2="1990" y2="286.0" stroke="#555" stroke-width="1" stroke-dasharray="1 .5" opacity="0.75"/>
<line x1="1978" y1="287.5" x2="1986" y2="287.5" stroke="#555" stroke-width="1" stroke-dasharray="1 .5" opacity="0.75"/>
<line x1="1978" y1="288.9" x2="1988" y2="288.9" stroke="#555" stroke-width="1" stroke-dasharray="1 .5" opacity="0.75"/>
<line x1="1978" y1="290.3" x2="1990" y2="290.3" stroke="#555" stroke-width="1" stroke-dasharray="1 .5" opacity="0.75"/>
<line x1="1990" y1="290.3" x2="2040" y2="290.3" stroke="#777" stroke-width="0.9" stroke-dasharray="1 .8" opacity="0.55"/>
<line x1="1978" y1="291.8" x2="1990" y2="291.8" stroke="#555" stroke-width="1" stroke-dasharray="1 .5" opacity="0.75"/>
<line x1="1978" y1="293.2" x2="1988" y2="293.2" stroke="#555" stroke-width="1" stroke-dasharray="1 .5" opacity="0.75"/>
<line x1="1978" y1="294.7" x2="1986" y2="294.7" stroke="#555" stroke-width="1" stroke-dasharray="1 .5" opacity="0.75"/>
<line x1="1978" y1="296.1" x2="1990" y2="296.1" stroke="#555" stroke-width="1" stroke-dasharray="1 .5" opacity="0.75"/>
<line x1="1990" y1="296.1" x2="2040" y2="296.1" stroke="#777" stroke-width="0.9" stroke-dasharray="1 .8" opacity="0.55"/>
<line x1="1978" y1="297.5" x2="1990" y2="297.5" stroke="#555" stroke-width="1" stroke-dasharray="1 .5" opacity="0.75"/>
<line x1="1978" y1="299.0" x2="1988" y2="299.0" stroke="#555" stroke-width="1" stroke-dasharray="1 .5" opacity="0.75"/>
<line x1="1978" y1="300.4" x2="1990" y2="300.4" stroke="#555" stroke-width="1" stroke-dasharray="1 .5" opacity="0.75"/>
<line x1="1978" y1="301.9" x2="1988" y2="301.9" stroke="#555" stroke-width="1" stroke-dasharray="1 .5" opacity="0.75"/>
<line x1="1978" y1="303.3" x2="1986" y2="303.3" stroke="#555" stroke-width="1" stroke-dasharray="1 .5" opacity="0.75"/>
<line x1="1978" y1="304.7" x2="1990" y2="304.7" stroke="#555" stroke-width="1" stroke-dasharray="1 .5" opacity="0.75"/>
<line x1="1990" y1="304.7" x2="2040" y2="304.7" stroke="#777" stroke-width="0.9" stroke-dasharray="1 .8" opacity="0.55"/>
<line x1="1978" y1="306.2" x2="1990" y2="306.2" stroke="#555" stroke-width="1" stroke-dasharray="1 .5" opacity="0.75"/>
<line x1="1990" y1="306.2" x2="2040" y2="306.2" stroke="#777" stroke-width="0.9" stroke-dasharray="1 .8" opacity="0.55"/>
<line x1="1978" y1="307.6" x2="1986" y2="307.6" stroke="#555" stroke-width="1" stroke-dasharray="1 .5" opacity="0.75"/>
<line x1="1978" y1="309.1" x2="1988" y2="309.1" stroke="#555" stroke-width="1" stroke-dasharray="1 .5" opacity="0.75"/>
<line x1="1978" y1="310.5" x2="1990" y2="310.5" stroke="#555" stroke-width="1" stroke-dasharray="1 .5" opacity="0.75"/>
<line x1="1990" y1="310.5" x2="2040" y2="310.5" stroke="#777" stroke-width="0.9" stroke-dasharray="1 .8" opacity="0.55"/>
<line x1="1978" y1="311.9" x2="1988" y2="311.9" stroke="#555" stroke-width="1" stroke-dasharray="1 .5" opacity="0.75"/>
<line x1="1978" y1="313.4" x2="1990" y2="313.4" stroke="#555" stroke-width="1" stroke-dasharray="1 .5" opacity="0.75"/>
<line x1="1978" y1="314.8" x2="1990" y2="314.8" stroke="#555" stroke-width="1" stroke-dasharray="1 .5" opacity="0.75"/>
<line x1="1990" y1="314.8" x2="2040" y2="314.8" stroke="#777" stroke-width="0.9" stroke-dasharray="1 .8" opacity="0.55"/>
<line x1="1978" y1="316.3" x2="1986" y2="316.3" stroke="#555" stroke-width="1" stroke-dasharray="1 .5" opacity="0.75"/>
<line x1="1978" y1="317.7" x2="1990" y2="317.7" stroke="#555" stroke-width="1" stroke-dasharray="1 .5" opacity="0.75"/>
<line x1="1978" y1="319.1" x2="1988" y2="319.1" stroke="#555" stroke-width="1" stroke-dasharray="1 .5" opacity="0.75"/>
<line x1="1978" y1="320.6" x2="1986" y2="320.6" stroke="#555" stroke-width="1" stroke-dasharray="1 .5" opacity="0.75"/>
<line x1="1978" y1="322.0" x2="1986" y2="322.0" stroke="#555" stroke-width="1" stroke-dasharray="1 .5" opacity="0.75"/>
<line x1="1978" y1="323.5" x2="1990" y2="323.5" stroke="#555" stroke-width="1" stroke-dasharray="1 .5" opacity="0.75"/>
<line x1="1978" y1="324.9" x2="1990" y2="324.9" stroke="#555" stroke-width="1" stroke-dasharray="1 .5" opacity="0.75"/>
<line x1="1978" y1="326.3" x2="1990" y2="326.3" stroke="#555" stroke-width="1" stroke-dasharray="1 .5" opacity="0.75"/>
<line x1="1990" y1="326.3" x2="2040" y2="326.3" stroke="#777" stroke-width="0.9" stroke-dasharray="1 .8" opacity="0.55"/>
<line x1="1978" y1="327.8" x2="1986" y2="327.8" stroke="#555" stroke-width="1" stroke-dasharray="1 .5" opacity="0.75"/>
<line x1="1978" y1="329.2" x2="1986" y2="329.2" stroke="#555" stroke-width="1" stroke-dasharray="1 .5" opacity="0.75"/>
<line x1="1978" y1="330.7" x2="1990" y2="330.7" stroke="#555" stroke-width="1" stroke-dasharray="1 .5" opacity="0.75"/>
<line x1="1990" y1="330.7" x2="2040" y2="330.7" stroke="#777" stroke-width="0.9" stroke-dasharray="1 .8" opacity="0.55"/>
<line x1="1978" y1="332.1" x2="1986" y2="332.1" stroke="#555" stroke-width="1" stroke-dasharray="1 .5" opacity="0.75"/>
<line x1="1978" y1="333.5" x2="1990" y2="333.5" stroke="#555" stroke-width="1" stroke-dasharray="1 .5" opacity="0.75"/>
<line x1="1990" y1="333.5" x2="2040" y2="333.5" stroke="#777" stroke-width="0.9" stroke-dasharray="1 .8" opacity="0.55"/>
<line x1="1978" y1="335.0" x2="1990" y2="335.0" stroke="#555" stroke-width="1" stroke-dasharray="1 .5" opacity="0.75"/>
<line x1="1978" y1="336.4" x2="1990" y2="336.4" stroke="#555" stroke-width="1" stroke-dasharray="1 .5" opacity="0.75"/>
<line x1="1978" y1="337.9" x2="1990" y2="337.9" stroke="#555" stroke-width="1" stroke-dasharray="1 .5" opacity="0.75"/>
<line x1="1978" y1="339.3" x2="1988" y2="339.3" stroke="#555" stroke-width="1" stroke-dasharray="1 .5" opacity="0.75"/>
<line x1="1978" y1="340.7" x2="1990" y2="340.7" stroke="#555" stroke-width="1" stroke-dasharray="1 .5" opacity="0.75"/>
<line x1="1990" y1="340.7" x2="2040" y2="340.7" stroke="#777" stroke-width="0.9" stroke-dasharray="1 .8" opacity="0.55"/>
<line x1="1978" y1="342.2" x2="1986" y2="342.2" stroke="#555" stroke-width="1" stroke-dasharray="1 .5" opacity="0.75"/>
<line x1="1978" y1="343.6" x2="1986" y2="343.6" stroke="#555" stroke-width="1" stroke-dasharray="1 .5" opacity="0.75"/>
<line x1="1978" y1="345.1" x2="1988" y2="345.1" stroke="#555" stroke-width="1" stroke-dasharray="1 .5" opacity="0.75"/>
<line x1="1978" y1="346.5" x2="1988" y2="346.5" stroke="#555" stroke-width="1" stroke-dasharray="1 .5" opacity="0.75"/>
<line x1="1978" y1="347.9" x2="1986" y2="347.9" stroke="#555" stroke-width="1" stroke-dasharray="1 .5" opacity="0.75"/>
<line x1="1978" y1="349.4" x2="1988" y2="349.4" stroke="#555" stroke-width="1" stroke-dasharray="1 .5" opacity="0.75"/>
<line x1="1978" y1="350.8" x2="1990" y2="350.8" stroke="#555" stroke-width="1" stroke-dasharray="1 .5" opacity="0.75"/>
<line x1="1990" y1="350.8" x2="2040" y2="350.8" stroke="#777" stroke-width="0.9" stroke-dasharray="1 .8" opacity="0.55"/>
<line x1="1978" y1="352.3" x2="1990" y2="352.3" stroke="#555" stroke-width="1" stroke-dasharray="1 .5" opacity="0.75"/>
<line x1="1990" y1="352.3" x2="2040" y2="352.3" stroke="#777" stroke-width="0.9" stroke-dasharray="1 .8" opacity="0.55"/>
<line x1="1978" y1="353.7" x2="1990" y2="353.7" stroke="#555" stroke-width="1" stroke-dasharray="1 .5" opacity="0.75"/>
<line x1="1978" y1="355.1" x2="1988" y2="355.1" stroke="#555" stroke-width="1" stroke-dasharray="1 .5" opacity="0.75"/>
<line x1="1978" y1="356.6" x2="1990" y2="356.6" stroke="#555" stroke-width="1" stroke-dasharray="1 .5" opacity="0.75"/>
<line x1="1990" y1="356.6" x2="2040" y2="356.6" stroke="#777" stroke-width="0.9" stroke-dasharray="1 .8" opacity="0.55"/>
<line x1="1978" y1="358.0" x2="1990" y2="358.0" stroke="#555" stroke-width="1" stroke-dasharray="1 .5" opacity="0.75"/>
<line x1="1990" y1="358.0" x2="2040" y2="358.0" stroke="#777" stroke-width="0.9" stroke-dasharray="1 .8" opacity="0.55"/>
<line x1="1978" y1="359.5" x2="1990" y2="359.5" stroke="#555" stroke-width="1" stroke-dasharray="1 .5" opacity="0.75"/>
<line x1="1978" y1="360.9" x2="1990" y2="360.9" stroke="#555" stroke-width="1" stroke-dasharray="1 .5" opacity="0.75"/>
<line x1="1978" y1="362.3" x2="1990" y2="362.3" stroke="#555" stroke-width="1" stroke-dasharray="1 .5" opacity="0.75"/>
<line x1="1990" y1="362.3" x2="2040" y2="362.3" stroke="#777" stroke-width="0.9" stroke-dasharray="1 .8" opacity="0.55"/>
<line x1="1978" y1="363.8" x2="1986" y2="363.8" stroke="#555" stroke-width="1" stroke-dasharray="1 .5" opacity="0.75"/>
<line x1="1978" y1="365.2" x2="1988" y2="365.2" stroke="#555" stroke-width="1" stroke-dasharray="1 .5" opacity="0.75"/>
<line x1="1978" y1="366.7" x2="1990" y2="366.7" stroke="#555" stroke-width="1" stroke-dasharray="1 .5" opacity="0.75"/>
<line x1="1990" y1="366.7" x2="2040" y2="366.7" stroke="#777" stroke-width="0.9" stroke-dasharray="1 .8" opacity="0.55"/>
<line x1="1978" y1="368.1" x2="1988" y2="368.1" stroke="#555" stroke-width="1" stroke-dasharray="1 .5" opacity="0.75"/>
<line x1="1978" y1="369.5" x2="1990" y2="369.5" stroke="#555" stroke-width="1" stroke-dasharray="1 .5" opacity="0.75"/>
<line x1="1990" y1="369.5" x2="2040" y2="369.5" stroke="#777" stroke-width="0.9" stroke-dasharray="1 .8" opacity="0.55"/>
<line x1="1978" y1="371.0" x2="1988" y2="371.0" stroke="#555" stroke-width="1" stroke-dasharray="1 .5" opacity="0.75"/>
<line x1="1978" y1="372.4" x2="1990" y2="372.4" stroke="#555" stroke-width="1" stroke-dasharray="1 .5" opacity="0.75"/>
<line x1="1990" y1="372.4" x2="2040" y2="372.4" stroke="#777" stroke-width="0.9" stroke-dasharray="1 .8" opacity="0.55"/>
<line x1="1978" y1="373.9" x2="1990" y2="373.9" stroke="#555" stroke-width="1" stroke-dasharray="1 .5" opacity="0.75"/>
<line x1="1990" y1="373.9" x2="2040" y2="373.9" stroke="#777" stroke-width="0.9" stroke-dasharray="1 .8" opacity="0.55"/>
<line x1="1978" y1="375.3" x2="1988" y2="375.3" stroke="#555" stroke-width="1" stroke-dasharray="1 .5" opacity="0.75"/>
<line x1="1978" y1="376.7" x2="1986" y2="376.7" stroke="#555" stroke-width="1" stroke-dasharray="1 .5" opacity="0.75"/>
<line x1="1978" y1="378.2" x2="1988" y2="378.2" stroke="#555" stroke-width="1" stroke-dasharray="1 .5" opacity="0.75"/>
<line x1="1978" y1="379.6" x2="1986" y2="379.6" stroke="#555" stroke-width="1" stroke-dasharray="1 .5" opacity="0.75"/>
<line x1="1978" y1="381.1" x2="1990" y2="381.1" stroke="#555" stroke-width="1" stroke-dasharray="1 .5" opacity="0.75"/>
<line x1="1978" y1="382.5" x2="1990" y2="382.5" stroke="#555" stroke-width="1" stroke-dasharray="1 .5" opacity="0.75"/>
<line x1="1978" y1="383.9" x2="1986" y2="383.9" stroke="#555" stroke-width="1" stroke-dasharray="1 .5" opacity="0.75"/>
<line x1="1978" y1="385.4" x2="1986" y2="385.4" stroke="#555" stroke-width="1" stroke-dasharray="1 .5" opacity="0.75"/>
<line x1="1978" y1="386.8" x2="1990" y2="386.8" stroke="#555" stroke-width="1" stroke-dasharray="1 .5" opacity="0.75"/>
<line x1="1990" y1="386.8" x2="2040" y2="386.8" stroke="#777" stroke-width="0.9" stroke-dasharray="1 .8" opacity="0.55"/>
<line x1="1978" y1="388.3" x2="1990" y2="388.3" stroke="#555" stroke-width="1" stroke-dasharray="1 .5" opacity="0.75"/>
<line x1="1990" y1="388.3" x2="2040" y2="388.3" stroke="#777" stroke-width="0.9" stroke-dasharray="1 .8" opacity="0.55"/>
<line x1="1978" y1="389.7" x2="1990" y2="389.7" stroke="#555" stroke-width="1" stroke-dasharray="1 .5" opacity="0.75"/>
<line x1="1990" y1="389.7" x2="2040" y2="389.7" stroke="#777" stroke-width="0.9" stroke-dasharray="1 .8" opacity="0.55"/>
<line x1="1978" y1="391.1" x2="1988" y2="391.1" stroke="#555" stroke-width="1" stroke-dasharray="1 .5" opacity="0.75"/>
<line x1="1978" y1="392.6" x2="1990" y2="392.6" stroke="#555" stroke-width="1" stroke-dasharray="1 .5" opacity="0.75"/>
<line x1="1990" y1="392.6" x2="2040" y2="392.6" stroke="#777" stroke-width="0.9" stroke-dasharray="1 .8" opacity="0.55"/>
<line x1="1978" y1="394.0" x2="1988" y2="394.0" stroke="#555" stroke-width="1" stroke-dasharray="1 .5" opacity="0.75"/>
<line x1="1978" y1="395.5" x2="1990" y2="395.5" stroke="#555" stroke-width="1" stroke-dasharray="1 .5" opacity="0.75"/>
<line x1="1978" y1="396.9" x2="1988" y2="396.9" stroke="#555" stroke-width="1" stroke-dasharray="1 .5" opacity="0.75"/>
<line x1="1978" y1="398.3" x2="1990" y2="398.3" stroke="#555" stroke-width="1" stroke-dasharray="1 .5" opacity="0.75"/>
<line x1="1990" y1="398.3" x2="2040" y2="398.3" stroke="#777" stroke-width="0.9" stroke-dasharray="1 .8" opacity="0.55"/>
<line x1="1978" y1="399.8" x2="1990" y2="399.8" stroke="#555" stroke-width="1" stroke-dasharray="1 .5" opacity="0.75"/>
<line x1="1990" y1="399.8" x2="2040" y2="399.8" stroke="#777" stroke-width="0.9" stroke-dasharray="1 .8" opacity="0.55"/>
<line x1="1978" y1="401.2" x2="1988" y2="401.2" stroke="#555" stroke-width="1" stroke-dasharray="1 .5" opacity="0.75"/>
<line x1="1978" y1="402.7" x2="1990" y2="402.7" stroke="#555" stroke-width="1" stroke-dasharray="1 .5" opacity="0.75"/>
<line x1="1990" y1="402.7" x2="2040" y2="402.7" stroke="#777" stroke-width="0.9" stroke-dasharray="1 .8" opacity="0.55"/>
<line x1="1978" y1="404.1" x2="1990" y2="404.1" stroke="#555" stroke-width="1" stroke-dasharray="1 .5" opacity="0.75"/>
<line x1="1990" y1="404.1" x2="2040" y2="404.1" stroke="#777" stroke-width="0.9" stroke-dasharray="1 .8" opacity="0.55"/>
<line x1="1978" y1="405.5" x2="1986" y2="405.5" stroke="#555" stroke-width="1" stroke-dasharray="1 .5" opacity="0.75"/>
<line x1="1978" y1="407.0" x2="1990" y2="407.0" stroke="#555" stroke-width="1" stroke-dasharray="1 .5" opacity="0.75"/>
<line x1="1990" y1="407.0" x2="2040" y2="407.0" stroke="#777" stroke-width="0.9" stroke-dasharray="1 .8" opacity="0.55"/>
<line x1="1978" y1="408.4" x2="1988" y2="408.4" stroke="#555" stroke-width="1" stroke-dasharray="1 .5" opacity="0.75"/>
<line x1="1978" y1="409.9" x2="1990" y2="409.9" stroke="#555" stroke-width="1" stroke-dasharray="1 .5" opacity="0.75"/>
<line x1="1978" y1="411.3" x2="1990" y2="411.3" stroke="#555" stroke-width="1" stroke-dasharray="1 .5" opacity="0.75"/>
<line x1="1978" y1="412.7" x2="1988" y2="412.7" stroke="#555" stroke-width="1" stroke-dasharray="1 .5" opacity="0.75"/>
<line x1="1978" y1="414.2" x2="1986" y2="414.2" stroke="#555" stroke-width="1" stroke-dasharray="1 .5" opacity="0.75"/>
<line x1="1978" y1="415.6" x2="1986" y2="415.6" stroke="#555" stroke-width="1" stroke-dasharray="1 .5" opacity="0.75"/>
<line x1="1978" y1="417.1" x2="1986" y2="417.1" stroke="#555" stroke-width="1" stroke-dasharray="1 .5" opacity="0.75"/>
<line x1="1978" y1="418.5" x2="1986" y2="418.5" stroke="#555" stroke-width="1" stroke-dasharray="1 .5" opacity="0.75"/>
<line x1="1978" y1="419.9" x2="1990" y2="419.9" stroke="#555" stroke-width="1" stroke-dasharray="1 .5" opacity="0.75"/>
<line x1="1978" y1="421.4" x2="1988" y2="421.4" stroke="#555" stroke-width="1" stroke-dasharray="1 .5" opacity="0.75"/>
<line x1="1978" y1="422.8" x2="1990" y2="422.8" stroke="#555" stroke-width="1" stroke-dasharray="1 .5" opacity="0.75"/>
<line x1="1978" y1="424.3" x2="1990" y2="424.3" stroke="#555" stroke-width="1" stroke-dasharray="1 .5" opacity="0.75"/>
<line x1="1978" y1="425.7" x2="1986" y2="425.7" stroke="#555" stroke-width="1" stroke-dasharray="1 .5" opacity="0.75"/>
<line x1="1978" y1="427.1" x2="1990" y2="427.1" stroke="#555" stroke-width="1" stroke-dasharray="1 .5" opacity="0.75"/>
<line x1="1978" y1="428.6" x2="1990" y2="428.6" stroke="#555" stroke-width="1" stroke-dasharray="1 .5" opacity="0.75"/>
<line x1="1978" y1="430.0" x2="1990" y2="430.0" stroke="#555" stroke-width="1" stroke-dasharray="1 .5" opacity="0.75"/>
<line x1="1978" y1="431.5" x2="1990" y2="431.5" stroke="#555" stroke-width="1" stroke-dasharray="1 .5" opacity="0.75"/>
<line x1="1990" y1="431.5" x2="2040" y2="431.5" stroke="#777" stroke-width="0.9" stroke-dasharray="1 .8" opacity="0.55"/>
<line x1="1978" y1="432.9" x2="1988" y2="432.9" stroke="#555" stroke-width="1" stroke-dasharray="1 .5" opacity="0.75"/>
<line x1="1978" y1="434.3" x2="1990" y2="434.3" stroke="#555" stroke-width="1" stroke-dasharray="1 .5" opacity="0.75"/>
<line x1="1990" y1="434.3" x2="2040" y2="434.3" stroke="#777" stroke-width="0.9" stroke-dasharray="1 .8" opacity="0.55"/>
<line x1="1978" y1="435.8" x2="1988" y2="435.8" stroke="#555" stroke-width="1" stroke-dasharray="1 .5" opacity="0.75"/>
<line x1="1978" y1="437.2" x2="1990" y2="437.2" stroke="#555" stroke-width="1" stroke-dasharray="1 .5" opacity="0.75"/>
<line x1="1990" y1="437.2" x2="2040" y2="437.2" stroke="#777" stroke-width="0.9" stroke-dasharray="1 .8" opacity="0.55"/>
<line x1="1978" y1="438.7" x2="1990" y2="438.7" stroke="#555" stroke-width="1" stroke-dasharray="1 .5" opacity="0.75"/>
<line x1="1990" y1="438.7" x2="2040" y2="438.7" stroke="#777" stroke-width="0.9" stroke-dasharray="1 .8" opacity="0.55"/>
<line x1="1978" y1="440.1" x2="1990" y2="440.1" stroke="#555" stroke-width="1" stroke-dasharray="1 .5" opacity="0.75"/>
<line x1="1978" y1="441.5" x2="1986" y2="441.5" stroke="#555" stroke-width="1" stroke-dasharray="1 .5" opacity="0.75"/>
<line x1="1978" y1="443.0" x2="1990" y2="443.0" stroke="#555" stroke-width="1" stroke-dasharray="1 .5" opacity="0.75"/>
<line x1="1990" y1="443.0" x2="2040" y2="443.0" stroke="#777" stroke-width="0.9" stroke-dasharray="1 .8" opacity="0.55"/>
<line x1="1978" y1="444.4" x2="1990" y2="444.4" stroke="#555" stroke-width="1" stroke-dasharray="1 .5" opacity="0.75"/>
<line x1="1990" y1="444.4" x2="2040" y2="444.4" stroke="#777" stroke-width="0.9" stroke-dasharray="1 .8" opacity="0.55"/>
<line x1="1978" y1="445.9" x2="1990" y2="445.9" stroke="#555" stroke-width="1" stroke-dasharray="1 .5" opacity="0.75"/>
<line x1="1990" y1="445.9" x2="2040" y2="445.9" stroke="#777" stroke-width="0.9" stroke-dasharray="1 .8" opacity="0.55"/>
<line x1="1978" y1="447.3" x2="1986" y2="447.3" stroke="#555" stroke-width="1" stroke-dasharray="1 .5" opacity="0.75"/>
<line x1="1978" y1="448.7" x2="1990" y2="448.7" stroke="#555" stroke-width="1" stroke-dasharray="1 .5" opacity="0.75"/>
<line x1="1978" y1="450.2" x2="1990" y2="450.2" stroke="#555" stroke-width="1" stroke-dasharray="1 .5" opacity="0.75"/>
<line x1="1978" y1="451.6" x2="1990" y2="451.6" stroke="#555" stroke-width="1" stroke-dasharray="1 .5" opacity="0.75"/>
<line x1="1990" y1="451.6" x2="2040" y2="451.6" stroke="#777" stroke-width="0.9" stroke-dasharray="1 .8" opacity="0.55"/>
<line x1="1978" y1="453.1" x2="1990" y2="453.1" stroke="#555" stroke-width="1" stroke-dasharray="1 .5" opacity="0.75"/>
<line x1="1990" y1="453.1" x2="2040" y2="453.1" stroke="#777" stroke-width="0.9" stroke-dasharray="1 .8" opacity="0.55"/>
<line x1="1978" y1="454.5" x2="1988" y2="454.5" stroke="#555" stroke-width="1" stroke-dasharray="1 .5" opacity="0.75"/>
<line x1="1978" y1="455.9" x2="1990" y2="455.9" stroke="#555" stroke-width="1" stroke-dasharray="1 .5" opacity="0.75"/>
<line x1="1990" y1="455.9" x2="2040" y2="455.9" stroke="#777" stroke-width="0.9" stroke-dasharray="1 .8" opacity="0.55"/>
<line x1="1978" y1="457.4" x2="1988" y2="457.4" stroke="#555" stroke-width="1" stroke-dasharray="1 .5" opacity="0.75"/>
<line x1="1978" y1="458.8" x2="1986" y2="458.8" stroke="#555" stroke-width="1" stroke-dasharray="1 .5" opacity="0.75"/>
<line x1="1978" y1="460.3" x2="1990" y2="460.3" stroke="#555" stroke-width="1" stroke-dasharray="1 .5" opacity="0.75"/>
<line x1="1978" y1="461.7" x2="1990" y2="461.7" stroke="#555" stroke-width="1" stroke-dasharray="1 .5" opacity="0.75"/>
<line x1="1978" y1="463.1" x2="1986" y2="463.1" stroke="#555" stroke-width="1" stroke-dasharray="1 .5" opacity="0.75"/>
<line x1="1978" y1="464.6" x2="1990" y2="464.6" stroke="#555" stroke-width="1" stroke-dasharray="1 .5" opacity="0.75"/>
<line x1="1990" y1="464.6" x2="2040" y2="464.6" stroke="#777" stroke-width="0.9" stroke-dasharray="1 .8" opacity="0.55"/>
<line x1="1978" y1="466.0" x2="1986" y2="466.0" stroke="#555" stroke-width="1" stroke-dasharray="1 .5" opacity="0.75"/>
<line x1="1978" y1="467.5" x2="1990" y2="467.5" stroke="#555" stroke-width="1" stroke-dasharray="1 .5" opacity="0.75"/>
<line x1="1990" y1="467.5" x2="2040" y2="467.5" stroke="#777" stroke-width="0.9" stroke-dasharray="1 .8" opacity="0.55"/>
<line x1="1978" y1="468.9" x2="1990" y2="468.9" stroke="#555" stroke-width="1" stroke-dasharray="1 .5" opacity="0.75"/>
<line x1="1990" y1="468.9" x2="2040" y2="468.9" stroke="#777" stroke-width="0.9" stroke-dasharray="1 .8" opacity="0.55"/>
<line x1="1978" y1="470.3" x2="1990" y2="470.3" stroke="#555" stroke-width="1" stroke-dasharray="1 .5" opacity="0.75"/>
<line x1="1990" y1="470.3" x2="2040" y2="470.3" stroke="#777" stroke-width="0.9" stroke-dasharray="1 .8" opacity="0.55"/>
<line x1="1978" y1="471.8" x2="1990" y2="471.8" stroke="#555" stroke-width="1" stroke-dasharray="1 .5" opacity="0.75"/>
<line x1="1990" y1="471.8" x2="2040" y2="471.8" stroke="#777" stroke-width="0.9" stroke-dasharray="1 .8" opacity="0.55"/>
<line x1="1978" y1="473.2" x2="1988" y2="473.2" stroke="#555" stroke-width="1" stroke-dasharray="1 .5" opacity="0.75"/>
<line x1="1978" y1="474.7" x2="1988" y2="474.7" stroke="#555" stroke-width="1" stroke-dasharray="1 .5" opacity="0.75"/>
<line x1="1978" y1="476.1" x2="1988" y2="476.1" stroke="#555" stroke-width="1" stroke-dasharray="1 .5" opacity="0.75"/>
<line x1="1978" y1="477.5" x2="1990" y2="477.5" stroke="#555" stroke-width="1" stroke-dasharray="1 .5" opacity="0.75"/>
<line x1="1978" y1="479.0" x2="1990" y2="479.0" stroke="#555" stroke-width="1" stroke-dasharray="1 .5" opacity="0.75"/>
<line x1="1990" y1="479.0" x2="2040" y2="479.0" stroke="#777" stroke-width="0.9" stroke-dasharray="1 .8" opacity="0.55"/>
<line x1="1978" y1="480.4" x2="1988" y2="480.4" stroke="#555" stroke-width="1" stroke-dasharray="1 .5" opacity="0.75"/>
<line x1="1978" y1="481.9" x2="1990" y2="481.9" stroke="#555" stroke-width="1" stroke-dasharray="1 .5" opacity="0.75"/>
<line x1="1978" y1="483.3" x2="1986" y2="483.3" stroke="#555" stroke-width="1" stroke-dasharray="1 .5" opacity="0.75"/>
<line x1="1978" y1="484.7" x2="1990" y2="484.7" stroke="#555" stroke-width="1" stroke-dasharray="1 .5" opacity="0.75"/>
<line x1="1990" y1="484.7" x2="2040" y2="484.7" stroke="#777" stroke-width="0.9" stroke-dasharray="1 .8" opacity="0.55"/>
<line x1="1978" y1="486.2" x2="1990" y2="486.2" stroke="#555" stroke-width="1" stroke-dasharray="1 .5" opacity="0.75"/>
<line x1="1990" y1="486.2" x2="2040" y2="486.2" stroke="#777" stroke-width="0.9" stroke-dasharray="1 .8" opacity="0.55"/>
<line x1="1978" y1="487.6" x2="1990" y2="487.6" stroke="#555" stroke-width="1" stroke-dasharray="1 .5" opacity="0.75"/>
<line x1="1990" y1="487.6" x2="2040" y2="487.6" stroke="#777" stroke-width="0.9" stroke-dasharray="1 .8" opacity="0.55"/>
<line x1="1978" y1="489.1" x2="1990" y2="489.1" stroke="#555" stroke-width="1" stroke-dasharray="1 .5" opacity="0.75"/>
<line x1="1990" y1="489.1" x2="2040" y2="489.1" stroke="#777" stroke-width="0.9" stroke-dasharray="1 .8" opacity="0.55"/>
<line x1="1978" y1="490.5" x2="1986" y2="490.5" stroke="#555" stroke-width="1" stroke-dasharray="1 .5" opacity="0.75"/>
<line x1="1978" y1="491.9" x2="1990" y2="491.9" stroke="#555" stroke-width="1" stroke-dasharray="1 .5" opacity="0.75"/>
<line x1="1978" y1="493.4" x2="1990" y2="493.4" stroke="#555" stroke-width="1" stroke-dasharray="1 .5" opacity="0.75"/>
<line x1="1990" y1="493.4" x2="2040" y2="493.4" stroke="#777" stroke-width="0.9" stroke-dasharray="1 .8" opacity="0.55"/>
<line x1="1978" y1="494.8" x2="1986" y2="494.8" stroke="#555" stroke-width="1" stroke-dasharray="1 .5" opacity="0.75"/>
<line x1="1978" y1="496.3" x2="1990" y2="496.3" stroke="#555" stroke-width="1" stroke-dasharray="1 .5" opacity="0.75"/>
<line x1="1990" y1="496.3" x2="2040" y2="496.3" stroke="#777" stroke-width="0.9" stroke-dasharray="1 .8" opacity="0.55"/>
<line x1="1978" y1="497.7" x2="1990" y2="497.7" stroke="#555" stroke-width="1" stroke-dasharray="1 .5" opacity="0.75"/>
<line x1="1978" y1="499.1" x2="1990" y2="499.1" stroke="#555" stroke-width="1" stroke-dasharray="1 .5" opacity="0.75"/>
<line x1="1990" y1="499.1" x2="2040" y2="499.1" stroke="#777" stroke-width="0.9" stroke-dasharray="1 .8" opacity="0.55"/>
<line x1="1978" y1="500.6" x2="1990" y2="500.6" stroke="#555" stroke-width="1" stroke-dasharray="1 .5" opacity="0.75"/>
<line x1="1978" y1="502.0" x2="1988" y2="502.0" stroke="#555" stroke-width="1" stroke-dasharray="1 .5" opacity="0.75"/>
<line x1="1978" y1="503.5" x2="1990" y2="503.5" stroke="#555" stroke-width="1" stroke-dasharray="1 .5" opacity="0.75"/>
<line x1="1978" y1="504.9" x2="1990" y2="504.9" stroke="#555" stroke-width="1" stroke-dasharray="1 .5" opacity="0.75"/>
<line x1="1990" y1="504.9" x2="2040" y2="504.9" stroke="#777" stroke-width="0.9" stroke-dasharray="1 .8" opacity="0.55"/>
<line x1="1978" y1="506.3" x2="1990" y2="506.3" stroke="#555" stroke-width="1" stroke-dasharray="1 .5" opacity="0.75"/>
<line x1="1978" y1="507.8" x2="1990" y2="507.8" stroke="#555" stroke-width="1" stroke-dasharray="1 .5" opacity="0.75"/>
<line x1="1990" y1="507.8" x2="2040" y2="507.8" stroke="#777" stroke-width="0.9" stroke-dasharray="1 .8" opacity="0.55"/>
<line x1="1978" y1="509.2" x2="1990" y2="509.2" stroke="#555" stroke-width="1" stroke-dasharray="1 .5" opacity="0.75"/>
<line x1="1978" y1="510.7" x2="1990" y2="510.7" stroke="#555" stroke-width="1" stroke-dasharray="1 .5" opacity="0.75"/>
<line x1="1978" y1="512.1" x2="1990" y2="512.1" stroke="#555" stroke-width="1" stroke-dasharray="1 .5" opacity="0.75"/>
<line x1="1978" y1="513.5" x2="1988" y2="513.5" stroke="#555" stroke-width="1" stroke-dasharray="1 .5" opacity="0.75"/>
<line x1="1978" y1="515.0" x2="1990" y2="515.0" stroke="#555" stroke-width="1" stroke-dasharray="1 .5" opacity="0.75"/>
<line x1="1978" y1="516.4" x2="1990" y2="516.4" stroke="#555" stroke-width="1" stroke-dasharray="1 .5" opacity="0.75"/>
</svg>
<svg width="2070" height="720">
<circle cx="1256.5" cy="695" r="3.3" fill="#fff"/><path d="M1255 693.5l3 3M1258 693.5l-3 3" stroke="#68217a" stroke-width=".9"/>
<path d="M1271.5 691.5l3.3 6.3h-6.6z" fill="#fff"/>
<circle cx="2021.5" cy="695" r="3.3" fill="none" stroke="#fff" stroke-width="1.1"/><path d="M2018.5 695h6M2021.5 692v6" stroke="#fff" stroke-width=".7"/>
<path d="M2033.5 697.5h5l-1-1.2v-2.5a1.5 1.5 0 0 0-3 0v2.5z" fill="#fff"/><circle cx="2036" cy="698.3" r=".8" fill="#fff"/>
</svg>
<div class="t" style="left:1261.5px;top:691.7px;font-size:6.8px;line-height:8.2px;color:#fff;">0</div>
<div class="t" style="left:1276.5px;top:691.7px;font-size:6.8px;line-height:8.2px;color:#fff;">0</div>
<div class="t" style="left:1863.5px;top:691.7px;font-size:6.8px;line-height:8.2px;color:#fff;">Ln 1, Col 1</div>
<div class="t" style="left:1901.7px;top:691.7px;font-size:6.8px;line-height:8.2px;color:#fff;">Spaces: 4</div>
<div class="t" style="left:1939.0px;top:691.7px;font-size:6.8px;line-height:8.2px;color:#fff;">UTF-8</div>
<div class="t" style="left:1966.7px;top:691.7px;font-size:6.8px;line-height:8.2px;color:#fff;">LF</div>
<div class="t" style="left:1981.6px;top:691.7px;font-size:6.8px;line-height:8.2px;color:#fff;">Plain Text</div>
</body></html>
